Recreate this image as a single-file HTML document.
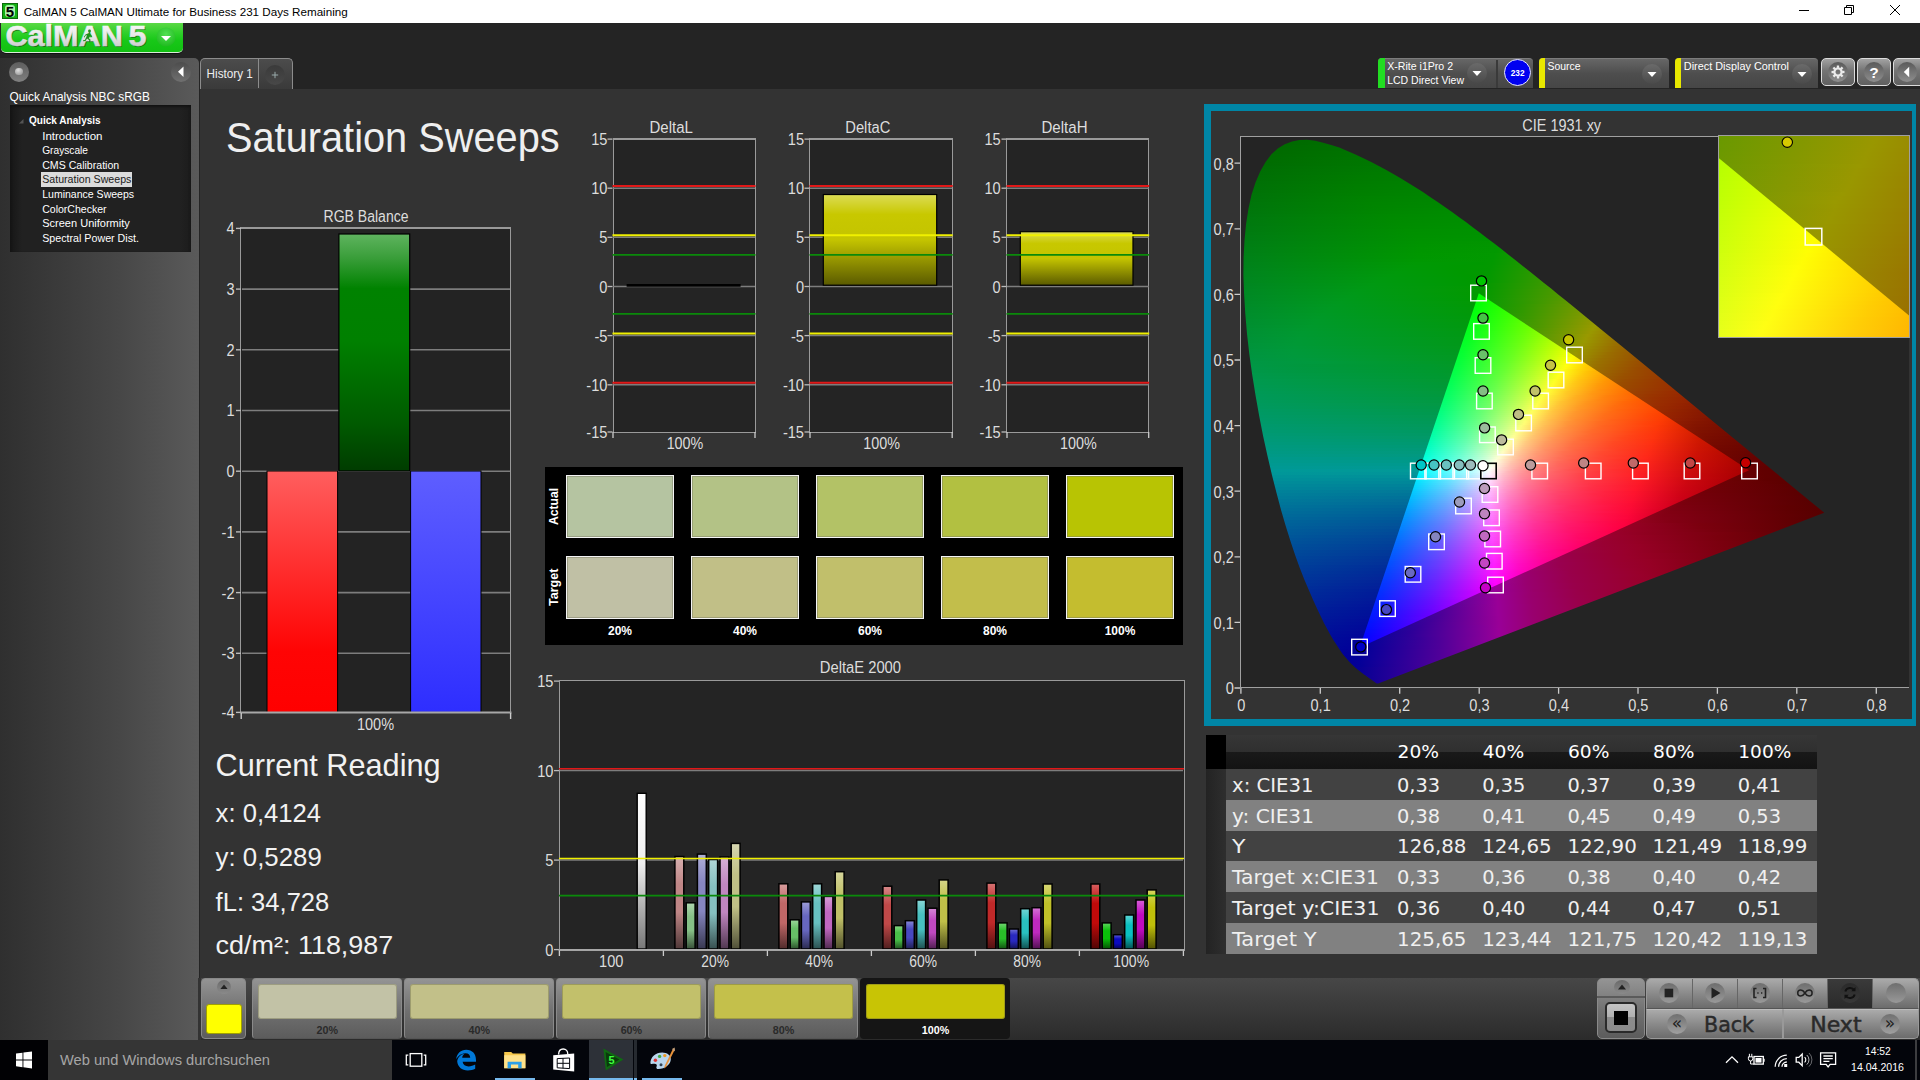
<!DOCTYPE html><html><head><meta charset="utf-8"><title>CalMAN 5</title><style>
html,body{margin:0;padding:0;background:#333;}
#r{position:relative;width:1920px;height:1080px;overflow:hidden;background:#333;font-family:"Liberation Sans",sans-serif;}
#r div,#r i,#r svg{position:absolute;display:block;box-sizing:border-box}
.cie{overflow:hidden;background:#242424}
.cl{left:0;top:0;width:100%;height:100%}
svg text{font-family:"Liberation Sans",sans-serif}
</style></head><body><div id="r"><div style="left:0px;top:0px;width:1920px;height:23px;background:#fff"></div><svg style="left:2px;top:3px" width="16" height="16" viewBox="0 0 16 16"><rect width="16" height="16" fill="#0b6b0b"/><rect x="1" y="1" width="14" height="14" fill="#12b012"/><rect x="3" y="2" width="10" height="12" rx="3" fill="#a8f0a8"/><text x="8" y="13.6" font-size="15" font-weight="bold" text-anchor="middle" fill="#000" font-family="Liberation Sans, sans-serif">5</text></svg><svg style="left:1780px;top:0" width="140" height="23" viewBox="1780 0 140 23" fill="none" stroke="#000" stroke-width="1"><path d="M1799 10.5h10"/><path d="M1844.5 7.5h7v7h-7z"/><path d="M1846.5 7.5v-2h7v7h-2"/><path d="M1890 5l10 10M1900 5l-10 10"/></svg><div style="left:0px;top:23px;width:1920px;height:1017px;background:#242424"></div><div style="left:200px;top:88.6px;width:1720px;height:889.4px;background:#333"></div><div style="left:1px;top:23px;width:182px;height:30px;background:linear-gradient(#5bd845 0%,#2fd02a 35%,#18c818 60%,#12c012 100%);border-radius:0 0 5px 5px;border-bottom:1px solid #d8ecd8;box-shadow:0 1px 0 #111"></div><svg style="left:0;top:23px" width="185" height="30" viewBox="0 23 185 30"><defs><linearGradient id="lg" x1="0" y1="0" x2="0" y2="1"><stop offset="0" stop-color="#fff"/><stop offset=".55" stop-color="#e6e6e6"/><stop offset="1" stop-color="#bdbdbd"/></linearGradient><radialGradient id="dd" cx=".5" cy=".35" r=".7"><stop offset="0" stop-color="#52e052"/><stop offset="1" stop-color="#1cb81c"/></radialGradient></defs><g font-family="Liberation Sans, sans-serif" font-weight="bold" font-size="29.800"><text x="6.500" y="46.900" fill="#145a14" opacity=".75" textLength="117.500" lengthAdjust="spacingAndGlyphs">CalMAN</text><text x="129.600" y="46.900" fill="#145a14" opacity=".75" textLength="18" lengthAdjust="spacingAndGlyphs">5</text><text x="5.400" y="46" fill="url(#lg)" stroke="url(#lg)" stroke-width=".5" textLength="117.500" lengthAdjust="spacingAndGlyphs">CalMAN</text><text x="128.600" y="46" fill="url(#lg)" stroke="url(#lg)" stroke-width=".5" textLength="18" lengthAdjust="spacingAndGlyphs">5</text></g><circle cx="166" cy="37" r="9.5" fill="url(#dd)"/><path d="M161 36h10l-5 5z" fill="#fff"/><g fill="#1f8f1f"><circle cx="89.5" cy="31" r="1.4"/><path d="M85.5 34.5l3-1.2 2.2 1.2 1.5 2-0.8.6-1.6-1.4-1 2.5 1.8 1.6-.6 2.6-1-.2.3-2-2.2-1.6-1.6 2.4-2.4.2v-1l1.8-.3 1.6-3.2.4-1.6-1.6.7-.6 1.6-.9-.3z"/></g></svg><div style="left:0px;top:58px;width:199px;height:982px;background:linear-gradient(90deg,#2f2f2f,#474747 60%,#5a5a5a);border-radius:0 5px 0 0"></div><div style="left:8.8px;top:61.8px;width:20px;height:20px;border-radius:50%;background:linear-gradient(#5e5e5e,#808080)"><div style="left:6.2px;top:5.8px;width:7.6px;height:7.6px;border-radius:50%;background:radial-gradient(circle at 40% 30%,#dedede,#8a8a8a)"></div></div><div style="left:171px;top:62px;width:20px;height:20px;border-radius:50%;background:linear-gradient(#4c4c4c,#707070)"></div><svg style="left:171px;top:61.5px" width="20" height="20"><path d="M12.5 4.5v10.5l-5.5-5.2z" fill="#fff"/></svg><div style="left:9.5px;top:105px;width:181.5px;height:147px;background:linear-gradient(90deg,#161616,#212121 12px,#212121 170px,#1c1c1c);box-shadow:inset 0 2px 3px #111"></div><svg style="left:18px;top:118px" width="8" height="8"><path d="M5.5 1v4.5h-4.5z" fill="#555"/></svg><div style="left:41px;top:172.3px;width:91px;height:14.6px;background:#dcdcdc"></div><div style="left:200px;top:58px;width:92.5px;height:31px;background:linear-gradient(#4c4c4c,#3a3a3a);border:1px solid #8c8c8c;border-bottom:none;border-radius:5px 5px 0 0"></div><div style="left:258px;top:59px;width:1px;height:29px;background:#8c8c8c"></div><div style="left:264.5px;top:65px;width:20px;height:20px;border-radius:50%;background:linear-gradient(#3a3a3a,#484848)"></div><svg style="left:264.5px;top:65px" width="20" height="20"><path d="M10 6.8v6.4M6.8 10h6.4" stroke="#9aa" stroke-width="1" fill="none"/></svg><div style="left:1378px;top:58px;width:155px;height:30px;background:linear-gradient(#666,#4e4e4e 50%,#464646);border-radius:4px 4px 0 0;border-top:1px solid #7c7c7c"></div><div style="left:1378px;top:58px;width:6.5px;height:30px;background:#22dd22;border-radius:4px 0 0 0"></div><div style="left:1496px;top:60px;width:1.5px;height:28px;background:#3a3a3a"></div><div style="left:1467.4px;top:63px;width:20px;height:20px;border-radius:50%;background:linear-gradient(#6a6a6a,#4a4a4a)"></div><svg style="left:1467.4px;top:63px" width="20" height="20"><path d="M5.5 8h9l-4.5 5z" fill="#fff"/></svg><div style="left:1504px;top:59px;width:27px;height:27px;border-radius:50%;background:#0000f0;border:1.5px solid #e8e8ff"></div><div style="left:1538.5px;top:58px;width:130.5px;height:30px;background:linear-gradient(#666,#4e4e4e 50%,#464646);border-radius:4px 4px 0 0;border-top:1px solid #7c7c7c"></div><div style="left:1538.5px;top:58px;width:6.5px;height:30px;background:#e8e800;border-radius:4px 0 0 0"></div><div style="left:1642px;top:64px;width:20px;height:20px;border-radius:50%;background:linear-gradient(#6a6a6a,#4a4a4a)"></div><svg style="left:1642px;top:64px" width="20" height="20"><path d="M5.5 8h9l-4.5 5z" fill="#fff"/></svg><div style="left:1674.6px;top:58px;width:143.5px;height:30px;background:linear-gradient(#666,#4e4e4e 50%,#464646);border-radius:4px 4px 0 0;border-top:1px solid #7c7c7c"></div><div style="left:1674.6px;top:58px;width:6.5px;height:30px;background:#e8e800;border-radius:4px 0 0 0"></div><div style="left:1792px;top:64px;width:20px;height:20px;border-radius:50%;background:linear-gradient(#6a6a6a,#4a4a4a)"></div><svg style="left:1792px;top:64px" width="20" height="20"><path d="M5.5 8h9l-4.5 5z" fill="#fff"/></svg><div style="left:1821px;top:58px;width:34px;height:28px;background:linear-gradient(#a2a2a2,#747474 45%,#606060);border-radius:5px;border:1px solid #dcdcdc"></div><div style="left:1828px;top:62px;width:20px;height:20px;border-radius:50%;background:linear-gradient(#5a5a5a,#8e8e8e)"></div><div style="left:1857px;top:58px;width:34px;height:28px;background:linear-gradient(#a2a2a2,#747474 45%,#606060);border-radius:5px;border:1px solid #dcdcdc"></div><div style="left:1864px;top:62px;width:20px;height:20px;border-radius:50%;background:linear-gradient(#5a5a5a,#8e8e8e)"></div><div style="left:1893px;top:58px;width:34px;height:28px;background:linear-gradient(#a2a2a2,#747474 45%,#606060);border-radius:5px;border:1px solid #dcdcdc"></div><div style="left:1896.8px;top:62px;width:20px;height:20px;border-radius:50%;background:linear-gradient(#5a5a5a,#8e8e8e)"></div><svg style="left:1821px;top:58px" width="99" height="29" viewBox="1821 58 99 29"><g transform="translate(1838 72)" fill="#ececec"><rect x="-1.2" y="-6.5" width="2.3" height="2.4" transform="rotate(0)"/><rect x="-1.2" y="-6.5" width="2.3" height="2.4" transform="rotate(45)"/><rect x="-1.2" y="-6.5" width="2.3" height="2.4" transform="rotate(90)"/><rect x="-1.2" y="-6.5" width="2.3" height="2.4" transform="rotate(135)"/><rect x="-1.2" y="-6.5" width="2.3" height="2.4" transform="rotate(180)"/><rect x="-1.2" y="-6.5" width="2.3" height="2.4" transform="rotate(225)"/><rect x="-1.2" y="-6.5" width="2.3" height="2.4" transform="rotate(270)"/><rect x="-1.2" y="-6.5" width="2.3" height="2.4" transform="rotate(315)"/><path d="M0-4.700a4.700 4.700 0 1 0 .01 0zM0-2.500a2.500 2.500 0 1 1-.01 0z" fill-rule="evenodd"/></g><text x="1874" y="77.600" font-size="15.500" font-weight="bold" text-anchor="middle" fill="#fff">?</text><path d="M1909.200 66.800v10.400l-5.400-5.200z" fill="#fff"/></svg><div style="left:240.4px;top:227.4px;width:271px;height:486px;background:#232323;border:1.6px solid #999;border-top-width:2px"></div><svg style="left:200px;top:200px" width="360" height="540" viewBox="200 200 360 540"><defs><linearGradient id="gg" x1="0" y1="0" x2="0" y2="1"><stop offset="0" stop-color="#5fb45f"/><stop offset=".1" stop-color="#3a9e3a"/><stop offset=".23" stop-color="#008200"/><stop offset=".45" stop-color="#008000"/><stop offset=".8" stop-color="#005a00"/><stop offset="1" stop-color="#003c00"/></linearGradient><linearGradient id="gr" x1="0" y1="0" x2="0" y2="1"><stop offset="0" stop-color="#ff5e5e"/><stop offset=".75" stop-color="#ff0404"/><stop offset="1" stop-color="#ff0000"/></linearGradient><linearGradient id="gb" x1="0" y1="0" x2="0" y2="1"><stop offset="0" stop-color="#5e5eff"/><stop offset="1" stop-color="#2e2eff"/></linearGradient></defs><path d="M236 712.4h5" stroke="#bbb" stroke-width="1.4"/><path d="M242 653.3H510" stroke="#7d7d7d" stroke-width="1.6"/><path d="M236 653.3h5" stroke="#bbb" stroke-width="1.4"/><path d="M242 592.6H510" stroke="#7d7d7d" stroke-width="1.6"/><path d="M236 592.6h5" stroke="#bbb" stroke-width="1.4"/><path d="M242 531.9H510" stroke="#7d7d7d" stroke-width="1.6"/><path d="M236 531.9h5" stroke="#bbb" stroke-width="1.4"/><path d="M242 471.2H510" stroke="#7d7d7d" stroke-width="1.6"/><path d="M236 471.2h5" stroke="#bbb" stroke-width="1.4"/><path d="M242 410.5H510" stroke="#7d7d7d" stroke-width="1.6"/><path d="M236 410.5h5" stroke="#bbb" stroke-width="1.4"/><path d="M242 349.8H510" stroke="#7d7d7d" stroke-width="1.6"/><path d="M236 349.8h5" stroke="#bbb" stroke-width="1.4"/><path d="M242 289.1H510" stroke="#7d7d7d" stroke-width="1.6"/><path d="M236 289.1h5" stroke="#bbb" stroke-width="1.4"/><path d="M236 228.4h5" stroke="#bbb" stroke-width="1.4"/><rect x="338.9" y="234" width="70.8" height="237" fill="url(#gg)" stroke="#000" stroke-width="1.2"/><rect x="267" y="471" width="70.6" height="241.4" fill="url(#gr)" stroke="#000" stroke-width="1"/><rect x="410.6" y="471" width="70.4" height="241.4" fill="url(#gb)" stroke="#000" stroke-width="1"/><path d="M240.5 712.5H511.5" stroke="#a8a8a8" stroke-width="2"/><path d="M241.2 713v6M510.6 713v6" stroke="#ccc" stroke-width="1.4"/></svg><div style="left:612.6px;top:137.6px;width:143.6px;height:295.4px;background:#242424;border:1.6px solid #9a9a9a;border-top-width:2px"></div><svg style="left:603.4px;top:130px" width="162" height="320" viewBox="603.4 130 162 320"><path d="M607.9 139.1h5" stroke="#bbb" stroke-width="1.3"/><path d="M613.4 188.2H755.4" stroke="#7d7d7d" stroke-width="1.5"/><path d="M607.9 188.2h5" stroke="#bbb" stroke-width="1.3"/><path d="M613.4 237.3H755.4" stroke="#7d7d7d" stroke-width="1.5"/><path d="M607.9 237.3h5" stroke="#bbb" stroke-width="1.3"/><path d="M613.4 286.5H755.4" stroke="#7d7d7d" stroke-width="1.5"/><path d="M607.9 286.5h5" stroke="#bbb" stroke-width="1.3"/><path d="M613.4 335.6H755.4" stroke="#7d7d7d" stroke-width="1.5"/><path d="M607.9 335.6h5" stroke="#bbb" stroke-width="1.3"/><path d="M613.4 384.8H755.4" stroke="#7d7d7d" stroke-width="1.5"/><path d="M607.9 384.8h5" stroke="#bbb" stroke-width="1.3"/><path d="M607.9 432.0h5" stroke="#bbb" stroke-width="1.3"/><path d="M627 285.4H741" stroke="#000" stroke-width="2.6"/><path d="M612.9 186.1H755.9" stroke="#e01818" stroke-width="2"/><path d="M612.9 235.2H755.9" stroke="#f0f000" stroke-width="2"/><path d="M612.9 254.9H755.9" stroke="#0a8a0a" stroke-width="1.6"/><path d="M612.9 313.9H755.9" stroke="#0a8a0a" stroke-width="1.6"/><path d="M612.9 333.5H755.9" stroke="#f0f000" stroke-width="2"/><path d="M612.9 382.7H755.9" stroke="#e01818" stroke-width="2"/><path d="M613.4 432v6M755.4 432v6" stroke="#ccc" stroke-width="1.3"/></svg><div style="left:809.2px;top:137.6px;width:143.8px;height:295.4px;background:#242424;border:1.6px solid #9a9a9a;border-top-width:2px"></div><svg style="left:800px;top:130px" width="162.2" height="320" viewBox="800 130 162.2 320"><path d="M804.5 139.1h5" stroke="#bbb" stroke-width="1.3"/><path d="M810 188.2H952.2" stroke="#7d7d7d" stroke-width="1.5"/><path d="M804.5 188.2h5" stroke="#bbb" stroke-width="1.3"/><path d="M810 237.3H952.2" stroke="#7d7d7d" stroke-width="1.5"/><path d="M804.5 237.3h5" stroke="#bbb" stroke-width="1.3"/><path d="M810 286.5H952.2" stroke="#7d7d7d" stroke-width="1.5"/><path d="M804.5 286.5h5" stroke="#bbb" stroke-width="1.3"/><path d="M810 335.6H952.2" stroke="#7d7d7d" stroke-width="1.5"/><path d="M804.5 335.6h5" stroke="#bbb" stroke-width="1.3"/><path d="M810 384.8H952.2" stroke="#7d7d7d" stroke-width="1.5"/><path d="M804.5 384.8h5" stroke="#bbb" stroke-width="1.3"/><path d="M804.5 432.0h5" stroke="#bbb" stroke-width="1.3"/><defs><linearGradient id="gy1" x1="0" y1="0" x2="0" y2="1"><stop offset="0" stop-color="#dcdc55"/><stop offset=".22" stop-color="#c8c800"/><stop offset=".5" stop-color="#c4c400"/><stop offset="1" stop-color="#5a5a00"/></linearGradient></defs><rect x="823.3" y="194.5" width="113.4" height="90.7" fill="url(#gy1)" stroke="#000" stroke-width="1.2"/><path d="M809.5 186.1H952.7" stroke="#e01818" stroke-width="2"/><path d="M809.5 235.2H952.7" stroke="#f0f000" stroke-width="2"/><path d="M809.5 254.9H952.7" stroke="#0a8a0a" stroke-width="1.6"/><path d="M809.5 313.9H952.7" stroke="#0a8a0a" stroke-width="1.6"/><path d="M809.5 333.5H952.7" stroke="#f0f000" stroke-width="2"/><path d="M809.5 382.7H952.7" stroke="#e01818" stroke-width="2"/><path d="M810 432v6M952.2 432v6" stroke="#ccc" stroke-width="1.3"/></svg><div style="left:1005.9px;top:137.6px;width:143.3px;height:295.4px;background:#242424;border:1.6px solid #9a9a9a;border-top-width:2px"></div><svg style="left:996.7px;top:130px" width="161.7" height="320" viewBox="996.7 130 161.7 320"><path d="M1001.2 139.1h5" stroke="#bbb" stroke-width="1.3"/><path d="M1006.7 188.2H1148.4" stroke="#7d7d7d" stroke-width="1.5"/><path d="M1001.2 188.2h5" stroke="#bbb" stroke-width="1.3"/><path d="M1006.7 237.3H1148.4" stroke="#7d7d7d" stroke-width="1.5"/><path d="M1001.2 237.3h5" stroke="#bbb" stroke-width="1.3"/><path d="M1006.7 286.5H1148.4" stroke="#7d7d7d" stroke-width="1.5"/><path d="M1001.2 286.5h5" stroke="#bbb" stroke-width="1.3"/><path d="M1006.7 335.6H1148.4" stroke="#7d7d7d" stroke-width="1.5"/><path d="M1001.2 335.6h5" stroke="#bbb" stroke-width="1.3"/><path d="M1006.7 384.8H1148.4" stroke="#7d7d7d" stroke-width="1.5"/><path d="M1001.2 384.8h5" stroke="#bbb" stroke-width="1.3"/><path d="M1001.2 432.0h5" stroke="#bbb" stroke-width="1.3"/><defs><linearGradient id="gy2" x1="0" y1="0" x2="0" y2="1"><stop offset="0" stop-color="#dcdc55"/><stop offset=".22" stop-color="#c8c800"/><stop offset=".5" stop-color="#c4c400"/><stop offset="1" stop-color="#5a5a00"/></linearGradient></defs><rect x="1020" y="231.7" width="112.7" height="53.5" fill="url(#gy2)" stroke="#000" stroke-width="1.2"/><path d="M1006.2 186.1H1148.9" stroke="#e01818" stroke-width="2"/><path d="M1006.2 235.2H1148.9" stroke="#f0f000" stroke-width="2"/><path d="M1006.2 254.9H1148.9" stroke="#0a8a0a" stroke-width="1.6"/><path d="M1006.2 313.9H1148.9" stroke="#0a8a0a" stroke-width="1.6"/><path d="M1006.2 333.5H1148.9" stroke="#f0f000" stroke-width="2"/><path d="M1006.2 382.7H1148.9" stroke="#e01818" stroke-width="2"/><path d="M1006.7 432v6M1148.4 432v6" stroke="#ccc" stroke-width="1.3"/></svg><div style="left:545px;top:467px;width:637.6px;height:177.5px;background:#000"></div><div style="left:566px;top:475px;width:107.6px;height:63px;background:#b5c4a1;border:1.2px solid #f4f4f4;box-shadow:inset 0 0 0 1px rgba(120,120,100,.45)"></div><div style="left:566px;top:556px;width:107.6px;height:63px;background:#c0c0a5;border:1.2px solid #f4f4f4;box-shadow:inset 0 0 0 1px rgba(120,120,100,.45)"></div><div style="left:691px;top:475px;width:107.6px;height:63px;background:#b3c286;border:1.2px solid #f4f4f4;box-shadow:inset 0 0 0 1px rgba(120,120,100,.45)"></div><div style="left:691px;top:556px;width:107.6px;height:63px;background:#c1bf87;border:1.2px solid #f4f4f4;box-shadow:inset 0 0 0 1px rgba(120,120,100,.45)"></div><div style="left:816px;top:475px;width:107.6px;height:63px;background:#b3c266;border:1.2px solid #f4f4f4;box-shadow:inset 0 0 0 1px rgba(120,120,100,.45)"></div><div style="left:816px;top:556px;width:107.6px;height:63px;background:#c1bf6b;border:1.2px solid #f4f4f4;box-shadow:inset 0 0 0 1px rgba(120,120,100,.45)"></div><div style="left:941px;top:475px;width:107.6px;height:63px;background:#b2c041;border:1.2px solid #f4f4f4;box-shadow:inset 0 0 0 1px rgba(120,120,100,.45)"></div><div style="left:941px;top:556px;width:107.6px;height:63px;background:#c2be4b;border:1.2px solid #f4f4f4;box-shadow:inset 0 0 0 1px rgba(120,120,100,.45)"></div><div style="left:1066px;top:475px;width:107.6px;height:63px;background:#b8c403;border:1.2px solid #f4f4f4;box-shadow:inset 0 0 0 1px rgba(120,120,100,.45)"></div><div style="left:1066px;top:556px;width:107.6px;height:63px;background:#c4bd2f;border:1.2px solid #f4f4f4;box-shadow:inset 0 0 0 1px rgba(120,120,100,.45)"></div><div style="left:558.5px;top:679.7px;width:626px;height:271px;background:#242424;border:1.8px solid #9a9a9a"></div><svg style="left:540px;top:675px" width="660" height="290" viewBox="540 675 660 290"><path d="M554 681.1h5" stroke="#bbb" stroke-width="1.3"/><path d="M560 770.6H1183" stroke="#7d7d7d" stroke-width="1.5"/><path d="M554 770.6h5" stroke="#bbb" stroke-width="1.3"/><path d="M560 860.1H1183" stroke="#7d7d7d" stroke-width="1.5"/><path d="M554 860.1h5" stroke="#bbb" stroke-width="1.3"/><path d="M554 949.6h5" stroke="#bbb" stroke-width="1.3"/><defs><linearGradient id="bw" x1="0" y1="0" x2="0" y2="1"><stop offset="0" stop-color="#fff"/><stop offset=".45" stop-color="#eee"/><stop offset="1" stop-color="#777"/></linearGradient><linearGradient id="b00" x1="0" y1="0" x2="0" y2="1"><stop offset="0" stop-color="rgb(214, 176, 176)"/><stop offset=".3" stop-color="rgb(192, 134, 134)"/><stop offset=".6" stop-color="rgb(192, 134, 134)"/><stop offset="1" stop-color="rgb(80, 56, 56)"/></linearGradient><linearGradient id="b01" x1="0" y1="0" x2="0" y2="1"><stop offset="0" stop-color="rgb(176, 214, 176)"/><stop offset=".3" stop-color="rgb(134, 192, 134)"/><stop offset=".6" stop-color="rgb(134, 192, 134)"/><stop offset="1" stop-color="rgb(56, 80, 56)"/></linearGradient><linearGradient id="b02" x1="0" y1="0" x2="0" y2="1"><stop offset="0" stop-color="rgb(176, 176, 214)"/><stop offset=".3" stop-color="rgb(134, 134, 192)"/><stop offset=".6" stop-color="rgb(134, 134, 192)"/><stop offset="1" stop-color="rgb(56, 56, 80)"/></linearGradient><linearGradient id="b03" x1="0" y1="0" x2="0" y2="1"><stop offset="0" stop-color="rgb(176, 214, 214)"/><stop offset=".3" stop-color="rgb(134, 192, 192)"/><stop offset=".6" stop-color="rgb(134, 192, 192)"/><stop offset="1" stop-color="rgb(56, 80, 80)"/></linearGradient><linearGradient id="b04" x1="0" y1="0" x2="0" y2="1"><stop offset="0" stop-color="rgb(214, 176, 214)"/><stop offset=".3" stop-color="rgb(192, 134, 192)"/><stop offset=".6" stop-color="rgb(192, 134, 192)"/><stop offset="1" stop-color="rgb(80, 56, 80)"/></linearGradient><linearGradient id="b05" x1="0" y1="0" x2="0" y2="1"><stop offset="0" stop-color="rgb(214, 214, 176)"/><stop offset=".3" stop-color="rgb(192, 192, 134)"/><stop offset=".6" stop-color="rgb(192, 192, 134)"/><stop offset="1" stop-color="rgb(80, 80, 56)"/></linearGradient><linearGradient id="b10" x1="0" y1="0" x2="0" y2="1"><stop offset="0" stop-color="rgb(214, 156, 156)"/><stop offset=".3" stop-color="rgb(192, 103, 103)"/><stop offset=".6" stop-color="rgb(192, 103, 103)"/><stop offset="1" stop-color="rgb(80, 43, 43)"/></linearGradient><linearGradient id="b11" x1="0" y1="0" x2="0" y2="1"><stop offset="0" stop-color="rgb(156, 214, 156)"/><stop offset=".3" stop-color="rgb(103, 192, 103)"/><stop offset=".6" stop-color="rgb(103, 192, 103)"/><stop offset="1" stop-color="rgb(43, 80, 43)"/></linearGradient><linearGradient id="b12" x1="0" y1="0" x2="0" y2="1"><stop offset="0" stop-color="rgb(156, 156, 214)"/><stop offset=".3" stop-color="rgb(103, 103, 192)"/><stop offset=".6" stop-color="rgb(103, 103, 192)"/><stop offset="1" stop-color="rgb(43, 43, 80)"/></linearGradient><linearGradient id="b13" x1="0" y1="0" x2="0" y2="1"><stop offset="0" stop-color="rgb(156, 214, 214)"/><stop offset=".3" stop-color="rgb(103, 192, 192)"/><stop offset=".6" stop-color="rgb(103, 192, 192)"/><stop offset="1" stop-color="rgb(43, 80, 80)"/></linearGradient><linearGradient id="b14" x1="0" y1="0" x2="0" y2="1"><stop offset="0" stop-color="rgb(214, 156, 214)"/><stop offset=".3" stop-color="rgb(192, 103, 192)"/><stop offset=".6" stop-color="rgb(192, 103, 192)"/><stop offset="1" stop-color="rgb(80, 43, 80)"/></linearGradient><linearGradient id="b15" x1="0" y1="0" x2="0" y2="1"><stop offset="0" stop-color="rgb(214, 214, 156)"/><stop offset=".3" stop-color="rgb(192, 192, 103)"/><stop offset=".6" stop-color="rgb(192, 192, 103)"/><stop offset="1" stop-color="rgb(80, 80, 43)"/></linearGradient><linearGradient id="b20" x1="0" y1="0" x2="0" y2="1"><stop offset="0" stop-color="rgb(214, 136, 136)"/><stop offset=".3" stop-color="rgb(192, 72, 72)"/><stop offset=".6" stop-color="rgb(192, 72, 72)"/><stop offset="1" stop-color="rgb(80, 30, 30)"/></linearGradient><linearGradient id="b21" x1="0" y1="0" x2="0" y2="1"><stop offset="0" stop-color="rgb(136, 214, 136)"/><stop offset=".3" stop-color="rgb(72, 192, 72)"/><stop offset=".6" stop-color="rgb(72, 192, 72)"/><stop offset="1" stop-color="rgb(30, 80, 30)"/></linearGradient><linearGradient id="b22" x1="0" y1="0" x2="0" y2="1"><stop offset="0" stop-color="rgb(136, 136, 214)"/><stop offset=".3" stop-color="rgb(72, 72, 192)"/><stop offset=".6" stop-color="rgb(72, 72, 192)"/><stop offset="1" stop-color="rgb(30, 30, 80)"/></linearGradient><linearGradient id="b23" x1="0" y1="0" x2="0" y2="1"><stop offset="0" stop-color="rgb(136, 214, 214)"/><stop offset=".3" stop-color="rgb(72, 192, 192)"/><stop offset=".6" stop-color="rgb(72, 192, 192)"/><stop offset="1" stop-color="rgb(30, 80, 80)"/></linearGradient><linearGradient id="b24" x1="0" y1="0" x2="0" y2="1"><stop offset="0" stop-color="rgb(214, 136, 214)"/><stop offset=".3" stop-color="rgb(192, 72, 192)"/><stop offset=".6" stop-color="rgb(192, 72, 192)"/><stop offset="1" stop-color="rgb(80, 30, 80)"/></linearGradient><linearGradient id="b25" x1="0" y1="0" x2="0" y2="1"><stop offset="0" stop-color="rgb(214, 214, 136)"/><stop offset=".3" stop-color="rgb(192, 192, 72)"/><stop offset=".6" stop-color="rgb(192, 192, 72)"/><stop offset="1" stop-color="rgb(80, 80, 30)"/></linearGradient><linearGradient id="b30" x1="0" y1="0" x2="0" y2="1"><stop offset="0" stop-color="rgb(214, 115, 115)"/><stop offset=".3" stop-color="rgb(192, 41, 41)"/><stop offset=".6" stop-color="rgb(192, 41, 41)"/><stop offset="1" stop-color="rgb(80, 17, 17)"/></linearGradient><linearGradient id="b31" x1="0" y1="0" x2="0" y2="1"><stop offset="0" stop-color="rgb(115, 214, 115)"/><stop offset=".3" stop-color="rgb(41, 192, 41)"/><stop offset=".6" stop-color="rgb(41, 192, 41)"/><stop offset="1" stop-color="rgb(17, 80, 17)"/></linearGradient><linearGradient id="b32" x1="0" y1="0" x2="0" y2="1"><stop offset="0" stop-color="rgb(115, 115, 214)"/><stop offset=".3" stop-color="rgb(41, 41, 192)"/><stop offset=".6" stop-color="rgb(41, 41, 192)"/><stop offset="1" stop-color="rgb(17, 17, 80)"/></linearGradient><linearGradient id="b33" x1="0" y1="0" x2="0" y2="1"><stop offset="0" stop-color="rgb(115, 214, 214)"/><stop offset=".3" stop-color="rgb(41, 192, 192)"/><stop offset=".6" stop-color="rgb(41, 192, 192)"/><stop offset="1" stop-color="rgb(17, 80, 80)"/></linearGradient><linearGradient id="b34" x1="0" y1="0" x2="0" y2="1"><stop offset="0" stop-color="rgb(214, 115, 214)"/><stop offset=".3" stop-color="rgb(192, 41, 192)"/><stop offset=".6" stop-color="rgb(192, 41, 192)"/><stop offset="1" stop-color="rgb(80, 17, 80)"/></linearGradient><linearGradient id="b35" x1="0" y1="0" x2="0" y2="1"><stop offset="0" stop-color="rgb(214, 214, 115)"/><stop offset=".3" stop-color="rgb(192, 192, 41)"/><stop offset=".6" stop-color="rgb(192, 192, 41)"/><stop offset="1" stop-color="rgb(80, 80, 17)"/></linearGradient><linearGradient id="b40" x1="0" y1="0" x2="0" y2="1"><stop offset="0" stop-color="rgb(214, 95, 95)"/><stop offset=".3" stop-color="rgb(192, 10, 10)"/><stop offset=".6" stop-color="rgb(192, 10, 10)"/><stop offset="1" stop-color="rgb(80, 4, 4)"/></linearGradient><linearGradient id="b41" x1="0" y1="0" x2="0" y2="1"><stop offset="0" stop-color="rgb(95, 214, 95)"/><stop offset=".3" stop-color="rgb(10, 192, 10)"/><stop offset=".6" stop-color="rgb(10, 192, 10)"/><stop offset="1" stop-color="rgb(4, 80, 4)"/></linearGradient><linearGradient id="b42" x1="0" y1="0" x2="0" y2="1"><stop offset="0" stop-color="rgb(95, 95, 214)"/><stop offset=".3" stop-color="rgb(10, 10, 192)"/><stop offset=".6" stop-color="rgb(10, 10, 192)"/><stop offset="1" stop-color="rgb(4, 4, 80)"/></linearGradient><linearGradient id="b43" x1="0" y1="0" x2="0" y2="1"><stop offset="0" stop-color="rgb(95, 214, 214)"/><stop offset=".3" stop-color="rgb(10, 192, 192)"/><stop offset=".6" stop-color="rgb(10, 192, 192)"/><stop offset="1" stop-color="rgb(4, 80, 80)"/></linearGradient><linearGradient id="b44" x1="0" y1="0" x2="0" y2="1"><stop offset="0" stop-color="rgb(214, 95, 214)"/><stop offset=".3" stop-color="rgb(192, 10, 192)"/><stop offset=".6" stop-color="rgb(192, 10, 192)"/><stop offset="1" stop-color="rgb(80, 4, 80)"/></linearGradient><linearGradient id="b45" x1="0" y1="0" x2="0" y2="1"><stop offset="0" stop-color="rgb(214, 214, 95)"/><stop offset=".3" stop-color="rgb(192, 192, 10)"/><stop offset=".6" stop-color="rgb(192, 192, 10)"/><stop offset="1" stop-color="rgb(80, 80, 4)"/></linearGradient></defs><rect x="637.2" y="793.3" width="9" height="155.7" fill="url(#bw)" stroke="#000" stroke-width="1.4"/><rect x="674.9" y="856.5" width="8.9" height="92.5" fill="url(#b00)" stroke="#000" stroke-width="1.5"/><rect x="686.2" y="902.8" width="8.9" height="46.2" fill="url(#b01)" stroke="#000" stroke-width="1.5"/><rect x="697.4" y="854.1" width="8.9" height="94.9" fill="url(#b02)" stroke="#000" stroke-width="1.5"/><rect x="708.7" y="859.5" width="8.9" height="89.5" fill="url(#b03)" stroke="#000" stroke-width="1.5"/><rect x="720.0" y="857.0" width="8.9" height="92.0" fill="url(#b04)" stroke="#000" stroke-width="1.5"/><rect x="731.2" y="843.4" width="8.9" height="105.6" fill="url(#b05)" stroke="#000" stroke-width="1.5"/><rect x="778.9" y="883.8" width="8.9" height="65.2" fill="url(#b10)" stroke="#000" stroke-width="1.5"/><rect x="790.2" y="919.8" width="8.9" height="29.2" fill="url(#b11)" stroke="#000" stroke-width="1.5"/><rect x="801.4" y="901.9" width="8.9" height="47.1" fill="url(#b12)" stroke="#000" stroke-width="1.5"/><rect x="812.7" y="883.8" width="8.9" height="65.2" fill="url(#b13)" stroke="#000" stroke-width="1.5"/><rect x="824.0" y="896.4" width="8.9" height="52.6" fill="url(#b14)" stroke="#000" stroke-width="1.5"/><rect x="835.2" y="871.7" width="8.9" height="77.3" fill="url(#b15)" stroke="#000" stroke-width="1.5"/><rect x="882.9" y="886.2" width="8.9" height="62.8" fill="url(#b20)" stroke="#000" stroke-width="1.5"/><rect x="894.2" y="925.6" width="8.9" height="23.4" fill="url(#b21)" stroke="#000" stroke-width="1.5"/><rect x="905.4" y="920.7" width="8.9" height="28.3" fill="url(#b22)" stroke="#000" stroke-width="1.5"/><rect x="916.7" y="900.0" width="8.9" height="49.0" fill="url(#b23)" stroke="#000" stroke-width="1.5"/><rect x="928.0" y="908.2" width="8.9" height="40.8" fill="url(#b24)" stroke="#000" stroke-width="1.5"/><rect x="939.2" y="879.9" width="8.9" height="69.1" fill="url(#b25)" stroke="#000" stroke-width="1.5"/><rect x="986.9" y="883.1" width="8.9" height="65.9" fill="url(#b30)" stroke="#000" stroke-width="1.5"/><rect x="998.2" y="922.9" width="8.9" height="26.1" fill="url(#b31)" stroke="#000" stroke-width="1.5"/><rect x="1009.4" y="929.0" width="8.9" height="20.0" fill="url(#b32)" stroke="#000" stroke-width="1.5"/><rect x="1020.7" y="908.7" width="8.9" height="40.3" fill="url(#b33)" stroke="#000" stroke-width="1.5"/><rect x="1032.0" y="907.7" width="8.9" height="41.3" fill="url(#b34)" stroke="#000" stroke-width="1.5"/><rect x="1043.2" y="884.0" width="8.9" height="65.0" fill="url(#b35)" stroke="#000" stroke-width="1.5"/><rect x="1090.9" y="884.0" width="8.9" height="65.0" fill="url(#b40)" stroke="#000" stroke-width="1.5"/><rect x="1102.2" y="922.9" width="8.9" height="26.1" fill="url(#b41)" stroke="#000" stroke-width="1.5"/><rect x="1113.4" y="934.7" width="8.9" height="14.3" fill="url(#b42)" stroke="#000" stroke-width="1.5"/><rect x="1124.7" y="915.0" width="8.9" height="34.0" fill="url(#b43)" stroke="#000" stroke-width="1.5"/><rect x="1136.0" y="900.0" width="8.9" height="49.0" fill="url(#b44)" stroke="#000" stroke-width="1.5"/><rect x="1147.2" y="889.9" width="8.9" height="59.1" fill="url(#b45)" stroke="#000" stroke-width="1.5"/><path d="M559 858.5H1184" stroke="#f0f000" stroke-width="1.5"/><path d="M559 768.8H1184" stroke="#e01818" stroke-width="1.6"/><path d="M559 895.6H1184" stroke="#0a8a0a" stroke-width="1.6"/><path d="M558.5 949.8H1184.5" stroke="#a8a8a8" stroke-width="1.8"/><path d="M559.4 950.5v5.5M663.4 950.5v5.5M767.4 950.5v5.5M871.4 950.5v5.5M975.4 950.5v5.5M1079.4 950.5v5.5M1183.4 950.5v5.5" stroke="#ccc" stroke-width="1.3"/></svg><div style="left:1204px;top:104px;width:712.3px;height:622.3px;border:7px solid #0086a6;border-right-width:4.2px;border-bottom-width:7.5px;background:#333"></div><div style="left:1240px;top:135.5px;width:669.2px;height:552.4px;background:#242424;border:1.6px solid #a0a0a0"></div><div class="cie" style="left:1241px;top:137px;width:668px;height:550px"><div class="cl" style="clip-path:polygon(137.2px 546.6px,135.7px 546.4px,130.1px 542.6px,130.1px 542.6px,129.7px 542.2px,129.0px 541.8px,128.3px 541.2px,127.5px 540.7px,126.7px 540.1px,125.8px 539.5px,124.9px 538.8px,123.9px 538.1px,122.9px 537.4px,121.8px 536.6px,120.7px 535.7px,119.5px 534.8px,118.2px 533.8px,116.8px 532.7px,115.4px 531.6px,113.9px 530.2px,112.4px 528.8px,110.7px 527.3px,109.0px 525.6px,107.2px 523.5px,105.1px 521.1px,102.9px 518.4px,100.6px 515.4px,98.1px 511.8px,95.5px 507.8px,92.7px 503.4px,89.7px 498.5px,86.6px 492.8px,83.2px 486.4px,79.7px 479.3px,76.0px 471.5px,72.0px 462.7px,67.8px 453.0px,63.3px 442.4px,58.7px 430.8px,54.1px 418.1px,49.5px 404.2px,44.8px 389.2px,40.1px 373.2px,35.6px 356.3px,31.0px 338.2px,26.5px 319.0px,22.1px 299.1px,18.2px 279.1px,14.6px 258.7px,11.2px 237.8px,8.3px 217.0px,6.0px 196.7px,4.3px 176.8px,3.1px 157.3px,2.4px 138.3px,2.6px 120.3px,3.5px 103.2px,5.1px 86.8px,7.5px 71.6px,10.5px 57.8px,14.5px 45.5px,19.2px 34.5px,24.6px 25.0px,30.4px 17.3px,36.8px 11.4px,43.7px 7.3px,51.1px 4.6px,58.5px 3.0px,66.2px 2.7px,74.1px 3.7px,82.2px 5.7px,90.2px 8.0px,98.3px 10.6px,106.4px 13.9px,114.5px 17.6px,122.4px 21.3px,130.2px 25.0px,137.8px 29.0px,145.3px 33.0px,152.8px 37.2px,160.1px 41.5px,167.4px 45.9px,174.7px 50.5px,181.9px 55.1px,189.1px 59.9px,196.3px 64.7px,203.5px 69.7px,210.7px 74.8px,217.8px 79.9px,224.9px 85.1px,232.0px 90.4px,239.1px 95.8px,246.2px 101.2px,253.3px 106.6px,260.4px 112.1px,267.5px 117.7px,274.6px 123.2px,281.7px 128.9px,288.8px 134.5px,295.9px 140.2px,303.0px 145.9px,310.1px 151.6px,317.2px 157.4px,324.2px 163.1px,331.3px 168.8px,338.3px 174.6px,345.3px 180.3px,352.3px 186.0px,359.9px 192.2px,367.9px 198.7px,375.0px 204.5px,379.9px 208.6px,406.7px 230.6px,478.5px 289.7px,528.5px 330.7px,556.1px 353.4px,570.7px 365.5px,578.1px 371.5px,581.1px 374.0px,582.7px 375.3px,583.2px 375.7px,583.2px 375.7px)"><i style="left:44px;top:2px;width:43px;height:3px;background:linear-gradient(90deg,#006900 0%,#006e00 100%)"></i><i style="left:38px;top:5px;width:59px;height:3px;background:linear-gradient(90deg,#006900 0%,#006f00 100%)"></i><i style="left:34px;top:8px;width:71px;height:3px;background:linear-gradient(90deg,#006a00 0%,#007100 100%)"></i><i style="left:30px;top:11px;width:82px;height:3px;background:linear-gradient(90deg,#006a00 0%,#007200 100%)"></i><i style="left:27px;top:14px;width:91px;height:3px;background:linear-gradient(90deg,#006a00 0%,#007400 100%)"></i><i style="left:25px;top:17px;width:100px;height:3px;background:linear-gradient(90deg,#006b00 0%,#007500 100%)"></i><i style="left:23px;top:20px;width:108px;height:3px;background:linear-gradient(90deg,#006b01 0%,#070 100%)"></i><i style="left:21px;top:23px;width:116px;height:3px;background:linear-gradient(90deg,#006c01 0%,#007800 100%)"></i><i style="left:19px;top:26px;width:124px;height:3px;background:linear-gradient(90deg,#006c02 0%,#007900 100%)"></i><i style="left:18px;top:29px;width:130px;height:3px;background:linear-gradient(90deg,#006d03 0%,#007b00 100%)"></i><i style="left:16px;top:32px;width:138px;height:3px;background:linear-gradient(90deg,#006e03 0%,#007c00 100%)"></i><i style="left:15px;top:35px;width:144px;height:3px;background:linear-gradient(90deg,#006e04 0%,#007b00 80.6%,#007d00 100%)"></i><i style="left:14px;top:38px;width:150px;height:3px;background:linear-gradient(90deg,#006f04 0%,#007b00 70.7%,#007e00 100%)"></i><i style="left:12px;top:41px;width:157px;height:3px;background:linear-gradient(90deg,#006f05 0%,#007b00 65.4%,#007f00 100%)"></i><i style="left:12px;top:44px;width:162px;height:3px;background:linear-gradient(90deg,#007006 0%,#007c00 64.2%,#008100 100%)"></i><i style="left:11px;top:47px;width:167px;height:3px;background:linear-gradient(90deg,#007106 0%,#007d00 61.4%,#008200 100%)"></i><i style="left:10px;top:50px;width:173px;height:3px;background:linear-gradient(90deg,#007107 0%,#007e00 61.6%,#008300 100%)"></i><i style="left:9px;top:53px;width:179px;height:3px;background:linear-gradient(90deg,#007207 0%,#007f00 61.8%,#008400 100%)"></i><i style="left:8px;top:56px;width:184px;height:3px;background:linear-gradient(90deg,#007308 0%,#008000 62%,#008500 100%)"></i><i style="left:7px;top:59px;width:190px;height:3px;background:linear-gradient(90deg,#007309 0%,#008200 62.1%,#008600 100%)"></i><i style="left:7px;top:62px;width:194px;height:3px;background:linear-gradient(90deg,#007409 0%,#008300 62.9%,#008700 100%)"></i><i style="left:6px;top:65px;width:199px;height:3px;background:linear-gradient(90deg,#00750a 0%,#008400 62.6%,#080 100%)"></i><i style="left:5px;top:68px;width:204px;height:3px;background:linear-gradient(90deg,#00750b 0%,#008500 63.7%,#008900 100%)"></i><i style="left:5px;top:71px;width:209px;height:3px;background:linear-gradient(90deg,#00760b 0%,#008600 64.4%,#008b00 100%)"></i><i style="left:4px;top:74px;width:214px;height:3px;background:linear-gradient(90deg,#00760c 0%,#008700 64.5%,#008c00 100%)"></i><i style="left:4px;top:77px;width:218px;height:3px;background:linear-gradient(90deg,#00770d 0%,#008900 66.1%,#008d00 100%)"></i><i style="left:3px;top:80px;width:223px;height:3px;background:linear-gradient(90deg,#00780e 0%,#008a00 65.8%,#008e00 100%)"></i><i style="left:3px;top:83px;width:227px;height:3px;background:linear-gradient(90deg,#00790e 0%,#008b00 66.4%,#008f00 100%)"></i><i style="left:3px;top:86px;width:231px;height:3px;background:linear-gradient(90deg,#00790f 0%,#008c00 67.8%,#009000 100%)"></i><i style="left:2px;top:89px;width:236px;height:3px;background:linear-gradient(90deg,#007a10 0%,#008d00 67.8%,#009100 100%)"></i><i style="left:2px;top:92px;width:240px;height:3px;background:linear-gradient(90deg,#007a10 0%,#008f00 68.3%,#009200 100%)"></i><i style="left:2px;top:95px;width:244px;height:3px;background:linear-gradient(90deg,#007b11 0%,#009000 68.9%,#009200 100%)"></i><i style="left:2px;top:98px;width:248px;height:3px;background:linear-gradient(90deg,#007c12 0%,#009100 70.2%,#009300 100%)"></i><i style="left:1px;top:101px;width:253px;height:3px;background:linear-gradient(90deg,#007c13 0%,#009200 69.8%,#009400 100%)"></i><i style="left:1px;top:104px;width:257px;height:3px;background:linear-gradient(90deg,#007d14 0%,#009300 69.5%,#029500 100%)"></i><i style="left:1px;top:107px;width:261px;height:3px;background:linear-gradient(90deg,#007e14 0%,#009400 68.5%,#029600 97.7%,#069600 100%)"></i><i style="left:1px;top:110px;width:264px;height:3px;background:linear-gradient(90deg,#007f15 0%,#009500 67.4%,#029700 96.2%,#099700 100%)"></i><i style="left:1px;top:113px;width:268px;height:3px;background:linear-gradient(90deg,#007f16 0%,#009600 66.4%,#029800 94.8%,#0d9800 100%)"></i><i style="left:1px;top:116px;width:272px;height:3px;background:linear-gradient(90deg,#008017 0%,#009700 65.4%,#029900 92.6%,#129900 100%)"></i><i style="left:1px;top:119px;width:276px;height:3px;background:linear-gradient(90deg,#008118 0%,#009701 63.8%,#029900 91.3%,#169900 100%)"></i><i style="left:1px;top:122px;width:280px;height:3px;background:linear-gradient(90deg,#008119 0%,#009802 62.1%,#029900 89.3%,#1a9900 100%)"></i><i style="left:1px;top:125px;width:283px;height:3px;background:linear-gradient(90deg,#00821a 0%,#009904 61%,#090 83.7%,#039900 88.7%,#1e9900 100%)"></i><i style="left:0px;top:128px;width:288px;height:3px;background:linear-gradient(90deg,#00821b 0%,#009906 58.3%,#090 77.1%,#039900 86.8%,#239900 100%)"></i><i style="left:0px;top:131px;width:292px;height:3px;background:linear-gradient(90deg,#00831c 0%,#009908 55.5%,#090 75.3%,#029900 84.9%,#289900 100%)"></i><i style="left:0px;top:134px;width:296px;height:3px;background:linear-gradient(90deg,#00841d 0%,#00990a 52.7%,#090 75%,#039900 83.8%,#2d9900 100%)"></i><i style="left:0px;top:137px;width:300px;height:3px;background:linear-gradient(90deg,#00841e 0%,#00990c 49.3%,#090 75.3%,#029900 82%,#329900 100%)"></i><i style="left:0px;top:140px;width:303px;height:3px;background:linear-gradient(90deg,#00851f 0%,#00990e 47%,#090 76.2%,#039900 81.5%,#369900 100%)"></i><i style="left:1px;top:143px;width:306px;height:3px;background:linear-gradient(90deg,#00861f 0%,#009910 44.4%,#090 76.5%,#049900 80.4%,#3c9900 100%)"></i><i style="left:1px;top:146px;width:310px;height:3px;background:linear-gradient(90deg,#008621 0%,#009912 41.9%,#090 76.8%,#3d9900 98.7%,#429900 100%)"></i><i style="left:1px;top:149px;width:313px;height:3px;background:linear-gradient(90deg,#008722 0%,#009914 39.7%,#029900 76.9%,#469900 100%)"></i><i style="left:1px;top:152px;width:317px;height:3px;background:linear-gradient(90deg,#008823 0%,#009916 37.3%,#039900 75.9%,#4d9900 100%)"></i><i style="left:1px;top:155px;width:321px;height:3px;background:linear-gradient(90deg,#008824 0%,#009918 35%,#029900 74.4%,#4e9900 98.7%,#539900 100%)"></i><i style="left:1px;top:158px;width:324px;height:3px;background:linear-gradient(90deg,#008925 0%,#00991a 33.3%,#029901 73.5%,#4f9900 97.5%,#589900 100%)"></i><i style="left:1px;top:161px;width:328px;height:3px;background:linear-gradient(90deg,#008926 0%,#00991c 31.1%,#019902 72%,#4f9900 95.7%,#5f9900 100%)"></i><i style="left:1px;top:164px;width:332px;height:3px;background:linear-gradient(90deg,#008a27 0%,#00991e 29.5%,#029904 71.1%,#369900 87.3%,#690 100%)"></i><i style="left:2px;top:167px;width:335px;height:3px;background:linear-gradient(90deg,#008b28 0%,#009920 27.5%,#019905 69.5%,#299900 82%,#6e9900 100%)"></i><i style="left:2px;top:170px;width:338px;height:3px;background:linear-gradient(90deg,#008b2a 0%,#092 26%,#019907 68.6%,#2c9900 81.7%,#749900 100%)"></i><i style="left:2px;top:173px;width:342px;height:3px;background:linear-gradient(90deg,#008c2b 0%,#009923 24.6%,#029908 67.8%,#2f9900 81.3%,#7c9900 100%)"></i><i style="left:2px;top:176px;width:346px;height:3px;background:linear-gradient(90deg,#008d2c 0%,#009925 23.1%,#019909 66.5%,#359900 81.5%,#849900 100%)"></i><i style="left:2px;top:179px;width:349px;height:3px;background:linear-gradient(90deg,#008d2d 0%,#009927 21.8%,#01990b 65.5%,#3a9900 81.6%,#8b9900 100%)"></i><i style="left:3px;top:182px;width:352px;height:3px;background:linear-gradient(90deg,#008e2f 0%,#009929 20.5%,#02990c 64.8%,#419900 81.8%,#919900 99.4%,#949900 100%)"></i><i style="left:3px;top:185px;width:356px;height:3px;background:linear-gradient(90deg,#008e30 0%,#00992a 19.7%,#01990e 63.5%,#479900 82%,#999800 99.4%,#999500 100%)"></i><i style="left:3px;top:188px;width:359px;height:3px;background:linear-gradient(90deg,#008f31 0%,#00992c 18.4%,#01990f 62.6%,#4c9900 82.1%,#990 97.8%,#998d00 100%)"></i><i style="left:3px;top:191px;width:363px;height:3px;background:linear-gradient(90deg,#009033 0%,#00992e 17.1%,#029911 61.9%,#4f9900 81.2%,#990 96.1%,#998500 100%)"></i><i style="left:4px;top:194px;width:366px;height:3px;background:linear-gradient(90deg,#009034 0%,#009930 15.8%,#019913 60.7%,#4e9901 79.8%,#999800 94.5%,#997e00 100%)"></i><i style="left:4px;top:197px;width:369px;height:3px;background:linear-gradient(90deg,#009135 0%,#009931 15.2%,#019914 59.8%,#4c9903 78.3%,#990 92.9%,#970 100%)"></i><i style="left:4px;top:200px;width:373px;height:3px;background:linear-gradient(90deg,#009137 0%,#093 14.5%,#029916 59.1%,#4f9904 77.4%,#7d9900 86.6%,#990 91.4%,#997100 100%)"></i><i style="left:5px;top:203px;width:376px;height:3px;background:linear-gradient(90deg,#009238 0%,#009935 13.8%,#019918 58%,#4e9906 76.1%,#7d9900 85.1%,#990 89.9%,#997000 98.4%,#996a00 100%)"></i><i style="left:5px;top:206px;width:379px;height:3px;background:linear-gradient(90deg,#00933a 0%,#009936 12.7%,#019919 57.1%,#4c9909 74.6%,#829900 84.7%,#999700 88.9%,#996f00 97.4%,#996500 100%)"></i><i style="left:5px;top:209px;width:383px;height:3px;background:linear-gradient(90deg,#00933b 0%,#009938 12.6%,#02991b 56.5%,#4f990a 73.8%,#8b9900 84.8%,#999700 87.4%,#996e00 95.8%,#996000 100%)"></i><i style="left:6px;top:212px;width:386px;height:3px;background:linear-gradient(90deg,#00943d 0%,#00993a 11.9%,#01991d 55.4%,#4f990c 72.5%,#959900 85%,#999000 87%,#996800 95.9%,#995b00 100%)"></i><i style="left:6px;top:215px;width:389px;height:3px;background:linear-gradient(90deg,#00943f 0%,#00993b 11.9%,#01991f 54.6%,#4c990f 71.1%,#999800 84.5%,#996e00 92.8%,#995600 100%)"></i><i style="left:6px;top:218px;width:393px;height:3px;background:linear-gradient(90deg,#009540 0%,#00993c 12.2%,#029921 54.1%,#4f9910 70.4%,#999701 83.2%,#997000 90.8%,#995100 100%)"></i><i style="left:7px;top:221px;width:395px;height:3px;background:linear-gradient(90deg,#009542 0%,#00993d 13.7%,#029922 53.3%,#509912 69.5%,#999903 81.7%,#997000 89.3%,#994e00 100%)"></i><i style="left:7px;top:224px;width:399px;height:3px;background:linear-gradient(90deg,#009644 0%,#00993d 17.1%,#019925 52.3%,#4c9915 67.8%,#999806 80.4%,#997200 87.4%,#994e00 98%,#994900 100%)"></i><i style="left:8px;top:227px;width:402px;height:3px;background:linear-gradient(90deg,#009745 0%,#00992c 45.3%,#039926 51.7%,#4f9917 67.2%,#999808 79.1%,#996f00 86.6%,#994b00 97.5%,#994500 100%)"></i><i style="left:8px;top:230px;width:405px;height:3px;background:linear-gradient(90deg,#009747 0%,#00992d 45.5%,#029928 51%,#509919 66.3%,#99990b 77.7%,#997000 85.1%,#994b00 96%,#994200 100%)"></i><i style="left:8px;top:233px;width:409px;height:3px;background:linear-gradient(90deg,#009749 0%,#00992e 46.1%,#01992b 50%,#4c991c 64.7%,#99990e 76.5%,#996f02 83.8%,#994c00 94.1%,#993e00 100%)"></i><i style="left:9px;top:236px;width:412px;height:3px;background:linear-gradient(90deg,#00984b 0%,#00992f 46.6%,#03992d 49.5%,#4f991e 64.1%,#999810 75.2%,#997104 82%,#995100 90.8%,#993b00 100%)"></i><i style="left:9px;top:239px;width:415px;height:3px;background:linear-gradient(90deg,#00984d 0%,#009930 47.3%,#05992e 49.3%,#509921 63.3%,#999712 74.4%,#996f06 81.2%,#995100 89.4%,#993800 100%)"></i><i style="left:10px;top:242px;width:418px;height:3px;background:linear-gradient(90deg,#00994f 0%,#029931 47.8%,#4d9924 61.7%,#999916 72.7%,#996e08 79.9%,#994d00 89%,#993400 100%)"></i><i style="left:10px;top:245px;width:422px;height:3px;background:linear-gradient(90deg,#009950 0%,#019934 46.9%,#4d9926 60.7%,#999919 71.6%,#99700b 78.2%,#994c00 87.7%,#993100 100%)"></i><i style="left:11px;top:248px;width:424px;height:3px;background:linear-gradient(90deg,#009952 0%,#019936 46.2%,#4e9929 59.9%,#99971b 70.8%,#996e0d 77.4%,#994b00 86.8%,#992f00 100%)"></i><i style="left:11px;top:251px;width:428px;height:3px;background:linear-gradient(90deg,#009954 0%,#029938 45.8%,#4d992c 58.9%,#99961e 69.6%,#996e0f 76.2%,#994a02 85.5%,#992c00 100%)"></i><i style="left:12px;top:254px;width:431px;height:3px;background:linear-gradient(90deg,#009956 0%,#02993b 45.1%,#4f992e 58.1%,#999721 68.4%,#996d11 74.9%,#994a03 84.2%,#992e00 96.7%,#992900 100%)"></i><i style="left:12px;top:257px;width:434px;height:3px;background:linear-gradient(90deg,#009958 0%,#01993d 44.2%,#4e9931 57.1%,#999825 67.3%,#997015 73.3%,#994d06 82%,#993500 91.7%,#972600 100%)"></i><i style="left:13px;top:260px;width:437px;height:3px;background:linear-gradient(90deg,#009959 0%,#019940 43.6%,#4c9934 56%,#999828 66.1%,#997017 72%,#994c08 80.7%,#993200 91.3%,#962500 98.6%,#942300 100%)"></i><i style="left:13px;top:263px;width:440px;height:3px;background:linear-gradient(90deg,#00995b 0%,#029942 43.2%,#4e9937 55.5%,#99992c 65%,#99701a 70.9%,#994c0a 79.5%,#992f00 91.4%,#962500 97.3%,#912000 100%)"></i><i style="left:14px;top:266px;width:443px;height:3px;background:linear-gradient(90deg,#00995d 0%,#039945 42.5%,#50993a 54.8%,#99992f 63.8%,#99701c 69.7%,#994b0c 78.3%,#992c00 91.4%,#942300 96.4%,#8e1d00 100%)"></i><i style="left:14px;top:269px;width:447px;height:3px;background:linear-gradient(90deg,#00995f 0%,#019948 41.7%,#4c993d 53.4%,#993 62.8%,#997220 68.2%,#994e0f 76.2%,#992e00 88.8%,#952400 94.2%,#8b1b00 100%)"></i><i style="left:15px;top:272px;width:449px;height:3px;background:linear-gradient(90deg,#009962 0%,#01994b 41.1%,#4d9941 52.7%,#989936 61.6%,#996d21 67.9%,#99490f 76.3%,#992b00 89.3%,#881800 100%)"></i><i style="left:15px;top:275px;width:453px;height:3px;background:linear-gradient(90deg,#009964 0%,#00994e 40.3%,#4d9944 51.8%,#98993a 60.6%,#996f25 66.4%,#994b12 74.3%,#992c03 86.7%,#952400 91.2%,#851600 100%)"></i><i style="left:16px;top:278px;width:456px;height:3px;background:linear-gradient(90deg,#096 0%,#029951 39.9%,#4d9947 50.9%,#99993e 59.6%,#997028 64.9%,#994c15 72.8%,#992c04 85.1%,#972501 89%,#821400 100%)"></i><i style="left:16px;top:281px;width:459px;height:3px;background:linear-gradient(90deg,#009968 0%,#019954 39.3%,#4e994b 50.2%,#999741 59%,#996f2b 64.2%,#994b17 72.1%,#992b05 84.3%,#972402 88.2%,#821300 98.7%,#801200 100%)"></i><i style="left:17px;top:284px;width:462px;height:3px;background:linear-gradient(90deg,#00996a 0%,#019957 38.5%,#4e994e 49.4%,#989946 57.6%,#996e2d 63.2%,#994a18 71%,#992a07 83.1%,#962202 87.4%,#851600 94.8%,#7d1000 100%)"></i><i style="left:17px;top:287px;width:466px;height:3px;background:linear-gradient(90deg,#00996d 0%,#02995a 38.2%,#4d9952 48.5%,#98994a 56.7%,#997031 61.8%,#994c1c 69.1%,#992c0a 80.7%,#962204 86.3%,#841500 93.6%,#7b0e00 100%)"></i><i style="left:18px;top:290px;width:468px;height:3px;background:linear-gradient(90deg,#00996f 0%,#02995d 37.6%,#4f9956 47.9%,#99974d 56%,#996e33 61.1%,#994a1e 68.4%,#992b0b 79.9%,#962105 85.5%,#811300 93.6%,#790d00 100%)"></i><i style="left:19px;top:293px;width:471px;height:3px;background:linear-gradient(90deg,#009971 0%,#009961 36.6%,#4d995a 46.8%,#999851 54.9%,#997038 59.6%,#994d22 66.4%,#992e0e 77%,#972006 84.3%,#7f1200 93.2%,#760b00 100%)"></i><i style="left:19px;top:296px;width:475px;height:3px;background:linear-gradient(90deg,#009974 0%,#019964 36.3%,#4c995e 46%,#999755 54%,#99703b 58.6%,#994c24 65.4%,#992d10 75.9%,#971f07 83.5%,#7d0f00 93.2%,#740a00 100%)"></i><i style="left:20px;top:299px;width:477px;height:3px;background:linear-gradient(90deg,#097 0%,#029968 35.7%,#4e9962 45.4%,#99995b 52.9%,#997040 57.6%,#994c27 64.3%,#992d12 74.8%,#971e08 82.8%,#7a0e00 93.3%,#720800 100%)"></i><i style="left:20px;top:302px;width:481px;height:3px;background:linear-gradient(90deg,#009979 0%,#00996c 35%,#4d9966 44.6%,#999860 52.1%,#996f43 56.7%,#994c29 63.3%,#992c13 73.8%,#971d09 81.7%,#780c00 93.3%,#700700 100%)"></i><i style="left:21px;top:305px;width:484px;height:3px;background:linear-gradient(90deg,#00997c 0%,#009970 34.3%,#4a996b 43.4%,#999763 51.2%,#996e46 55.8%,#994a2c 62.4%,#992b15 72.7%,#961c0a 81%,#760b00 93%,#6e0600 100%)"></i><i style="left:22px;top:308px;width:486px;height:3px;background:linear-gradient(90deg,#00997f 0%,#009974 33.7%,#47996f 42.4%,#99996a 50.2%,#99724c 54.3%,#994e31 60.5%,#992f1a 70%,#961b0b 80.2%,#740900 93%,#6c0500 100%)"></i><i style="left:22px;top:311px;width:490px;height:3px;background:linear-gradient(90deg,#009981 0%,#019978 33.5%,#4e9973 42.4%,#99986e 49.4%,#997150 53.5%,#994d34 59.6%,#992e1b 69%,#971a0c 79.2%,#720800 92.7%,#6a0400 100%)"></i><i style="left:23px;top:314px;width:493px;height:3px;background:linear-gradient(90deg,#009984 0%,#02997c 32.9%,#4c9978 41.5%,#999974 48.4%,#997154 52.4%,#994d36 58.5%,#992d1d 67.9%,#96190d 78.5%,#710700 92.3%,#670300 100%)"></i><i style="left:24px;top:317px;width:495px;height:3px;background:linear-gradient(90deg,#009987 0%,#029980 32.4%,#4e997d 40.9%,#97997a 47.4%,#996c54 52.2%,#994937 58.3%,#992a1d 68%,#96180e 77.7%,#710701 91.5%,#650200 100%)"></i><i style="left:24px;top:320px;width:499px;height:3px;background:linear-gradient(90deg,#00998b 0%,#009985 31.7%,#4d9982 40.2%,#979980 46.6%,#996e5a 51%,#994a3b 57%,#992b20 66.3%,#97170f 76.7%,#720602 90%,#630100 100%)"></i><i style="left:25px;top:323px;width:502px;height:3px;background:linear-gradient(90deg,#00998e 0%,#009989 31.1%,#499987 39%,#999985 45.8%,#996f60 49.8%,#994c40 55.4%,#992d24 64.1%,#981610 75.7%,#720602 88.8%,#600000 100%)"></i><i style="left:26px;top:326px;width:504px;height:3px;background:linear-gradient(90deg,#009991 0%,#00998e 30.6%,#47998d 38.1%,#97998b 44.8%,#996d62 49.2%,#994a42 54.8%,#992c26 63.5%,#981511 75%,#720503 88.1%,#600000 100%)"></i><i style="left:26px;top:329px;width:508px;height:3px;background:linear-gradient(90deg,#009994 0%,#019993 30.3%,#4e9992 38.2%,#989992 44.1%,#996c66 48.4%,#994945 53.9%,#992b28 62.6%,#971412 74.4%,#710403 87.8%,#600000 98.4%,#5f0000 100%)"></i><i style="left:27px;top:332px;width:511px;height:3px;background:linear-gradient(90deg,#009998 0%,#029998 29.8%,#4c9998 37.3%,#979998 43.1%,#996c6b 47.5%,#994948 52.9%,#992a2a 61.6%,#961313 73.7%,#710404 87.1%,#610000 96.9%,#5e0000 100%)"></i><i style="left:28px;top:335px;width:513px;height:3px;background:linear-gradient(90deg,#009799 0%,#029599 29.3%,#509499 37.1%,#999398 43%,#996d71 46.5%,#994b4e 51.6%,#992c2e 59.8%,#961214 73%,#710304 86.3%,#610000 96.5%,#5e0000 100%)"></i><i style="left:29px;top:338px;width:516px;height:3px;background:linear-gradient(90deg,#009399 0%,#019099 28.7%,#4e8f99 36.4%,#998b97 42.6%,#99646e 46.5%,#99444b 51.9%,#99272c 60.5%,#971115 72.1%,#710305 85.3%,#610000 96.1%,#5d0000 100%)"></i><i style="left:29px;top:341px;width:519px;height:3px;background:linear-gradient(90deg,#009099 0%,#008b99 28.2%,#4b8999 35.9%,#998596 42.5%,#99606e 46.3%,#99404b 51.7%,#99242c 60.2%,#971016 71.4%,#720206 84.2%,#600000 95.8%,#5d0000 100%)"></i><i style="left:30px;top:344px;width:522px;height:3px;background:linear-gradient(90deg,#008c99 0%,#008799 27.6%,#498499 35.2%,#978199 41.8%,#995b6e 46%,#993c4a 51.7%,#99212b 60.5%,#980f17 70.5%,#720207 83.1%,#5e0000 97.7%,#5c0000 100%)"></i><i style="left:31px;top:347px;width:525px;height:3px;background:linear-gradient(90deg,#008999 0%,#008299 27.1%,#4c7f99 35.1%,#997a97 41.6%,#99586f 45.4%,#99394b 51.1%,#991f2c 59.9%,#970e18 69.8%,#720107 82.4%,#5b0000 100%)"></i><i style="left:32px;top:350px;width:527px;height:3px;background:linear-gradient(90deg,#008699 0%,#007e99 26.6%,#4b7a99 34.6%,#987699 41.1%,#99536f 45.2%,#99364b 51%,#991d2c 59.7%,#970d19 69.2%,#720108 81.7%,#5b0000 100%)"></i><i style="left:32px;top:353px;width:531px;height:3px;background:linear-gradient(90deg,#008299 0%,#027999 26.4%,#507599 34.7%,#977199 40.8%,#994d6c 45.3%,#993148 51.3%,#991829 60.8%,#960c1a 68.7%,#720008 81.1%,#5a0000 100%)"></i><i style="left:33px;top:356px;width:534px;height:3px;background:linear-gradient(90deg,#007f99 0%,#017599 25.8%,#4e7099 34.1%,#986b99 40.4%,#994b6f 44.6%,#99314c 50.2%,#99182d 59.2%,#970b1b 67.8%,#74000a 79.4%,#590000 100%)"></i><i style="left:34px;top:359px;width:536px;height:3px;background:linear-gradient(90deg,#007c99 0%,#017199 25.4%,#4c6c99 33.6%,#996598 40.3%,#99476f 44.4%,#992c4b 50.4%,#99152b 59.7%,#970a1c 67.2%,#76000b 78%,#590000 100%)"></i><i style="left:35px;top:362px;width:539px;height:3px;background:linear-gradient(90deg,#007999 0%,#026d99 24.9%,#506799 33.5%,#986199 39.8%,#994470 43.9%,#992a4c 49.8%,#99142c 59.1%,#98091e 66.2%,#78000c 76.6%,#580000 99.6%,#580000 100%)"></i><i style="left:36px;top:365px;width:542px;height:3px;background:linear-gradient(90deg,#007699 0%,#016a99 24.4%,#4e6399 32.8%,#995c99 39.5%,#994070 43.5%,#99284c 49.4%,#99122d 58.7%,#97081e 65.7%,#7a000e 74.9%,#590000 98.5%,#570000 100%)"></i><i style="left:36px;top:368px;width:545px;height:3px;background:linear-gradient(90deg,#007399 0%,#069 23.9%,#4b5f99 32.4%,#995798 39.3%,#993d70 43.4%,#99254d 49.3%,#99102d 58.5%,#97071f 65.1%,#7d0010 73.5%,#5f0001 93.8%,#570000 100%)"></i><i style="left:37px;top:371px;width:548px;height:3px;background:linear-gradient(90deg,#007099 0%,#006299 23.4%,#4a5b99 31.8%,#995297 39.1%,#993970 43.1%,#99234d 48.9%,#990f2e 58%,#970620 64.2%,#7f0012 71.9%,#5e0001 93.8%,#560000 100%)"></i><i style="left:38px;top:374px;width:547px;height:3px;background:linear-gradient(90deg,#006d99 0%,#005f99 23.1%,#4d5799 31.9%,#994f99 38.8%,#993771 42.9%,#99214e 48.7%,#990d2f 57.9%,#970521 64.1%,#820013 71.1%,#600002 93%,#560000 100%)"></i><i style="left:39px;top:377px;width:546px;height:3px;background:linear-gradient(90deg,#006a99 0%,#005c99 22.7%,#4b5399 31.5%,#994a98 38.8%,#99316f 43.2%,#991c4b 49.5%,#99092c 59.3%,#960421 64.1%,#840015 70.3%,#630003 91.6%,#560000 100%)"></i><i style="left:40px;top:380px;width:538px;height:3px;background:linear-gradient(90deg,#006799 0%,#005899 22.7%,#4d4f99 32%,#984799 39%,#992e6e 43.9%,#99194a 50.6%,#99072a 61%,#960322 64.7%,#850016 71%,#640003 92.2%,#570000 100%)"></i><i style="left:41px;top:383px;width:529px;height:3px;background:linear-gradient(90deg,#006499 0%,#059 22.7%,#4d4c99 32.2%,#994298 39.8%,#992b6f 44.3%,#99174b 51.1%,#99062b 61.7%,#970224 65.2%,#830014 73.5%,#610003 95.8%,#5a0001 100%)"></i><i style="left:41px;top:386px;width:521px;height:3px;background:linear-gradient(90deg,#006299 0%,#025299 23.1%,#4d4899 32.7%,#993e98 40.4%,#992970 45%,#99154c 51.9%,#99042c 62.7%,#960125 66.2%,#7b000e 80.4%,#640004 95.8%,#5d0002 100%)"></i><i style="left:42px;top:389px;width:513px;height:3px;background:linear-gradient(90deg,#005f99 0%,#024f99 23%,#504599 33.2%,#993a96 41%,#99256f 45.7%,#99134b 52.7%,#99032c 63.7%,#960025 67.2%,#7b000e 82%,#630004 97.7%,#5f0003 100%)"></i><i style="left:43px;top:392px;width:504px;height:3px;background:linear-gradient(90deg,#005c99 0%,#014c99 23%,#4e4199 33.3%,#983799 41.3%,#99226f 46.4%,#99114c 53.6%,#99012d 64.7%,#950024 69%,#7a000e 84.5%,#620004 100%)"></i><i style="left:44px;top:395px;width:495px;height:3px;background:linear-gradient(90deg,#005a99 0%,#024999 23.1%,#4d3e99 33.6%,#993397 42.1%,#991f6e 47.4%,#990e4a 55.1%,#99002b 66.8%,#900020 72.5%,#76000b 90.3%,#650005 100%)"></i><i style="left:45px;top:398px;width:486px;height:3px;background:linear-gradient(90deg,#005799 0%,#014699 23%,#4f3b99 34.2%,#983099 42.4%,#991c6e 48.1%,#990c4a 56%,#99002d 67.5%,#950024 72%,#7a000d 88.9%,#690006 100%)"></i><i style="left:46px;top:401px;width:477px;height:3px;background:linear-gradient(90deg,#005499 0%,#024399 23.1%,#4e3899 34.5%,#992c98 43.3%,#991a6f 48.7%,#990a4b 56.7%,#99002f 67.6%,#950025 73.1%,#7b000e 89.9%,#6c0007 100%)"></i><i style="left:47px;top:404px;width:468px;height:3px;background:linear-gradient(90deg,#005299 0%,#014199 23.1%,#4d3599 34.6%,#992897 44%,#99176f 49.6%,#99084c 57.7%,#990032 67.5%,#960025 74.4%,#7c000f 91.5%,#6f0009 100%)"></i><i style="left:48px;top:407px;width:460px;height:3px;background:linear-gradient(90deg,#004f99 0%,#013e99 23%,#4f3299 35.2%,#992699 44.3%,#99146f 50.4%,#99064a 59.1%,#990034 67.8%,#970026 75.7%,#7c000f 93%,#72000a 100%)"></i><i style="left:49px;top:410px;width:451px;height:3px;background:linear-gradient(90deg,#004d99 0%,#023c99 23.1%,#4e2f99 35.6%,#992297 45.3%,#991270 51.1%,#99044b 60%,#903 69.8%,#970026 77.3%,#7c000f 95.1%,#76000c 100%)"></i><i style="left:50px;top:413px;width:442px;height:3px;background:linear-gradient(90deg,#004a99 0%,#013999 23.1%,#4d2c99 35.7%,#982099 45.7%,#990f6d 52.5%,#99024a 61.5%,#99002b 76%,#8e001d 84.2%,#7a000d 100%)"></i><i style="left:51px;top:416px;width:433px;height:3px;background:linear-gradient(90deg,#004899 0%,#023799 23.1%,#502999 36.6%,#991c98 46.8%,#990d6f 53.2%,#99004b 62.5%,#99002c 76.9%,#940023 82.4%,#7c000f 100%)"></i><i style="left:52px;top:419px;width:424px;height:3px;background:linear-gradient(90deg,#004599 0%,#013499 23.1%,#4e2799 36.8%,#991997 47.6%,#990b6f 54.2%,#99004a 64.2%,#99002b 79.2%,#930022 84.9%,#7f0011 100%)"></i><i style="left:53px;top:422px;width:415px;height:3px;background:linear-gradient(90deg,#004399 0%,#023299 23.2%,#4e2499 37.2%,#991698 48.3%,#990970 55.1%,#99004e 64.3%,#99002e 79.2%,#960025 85.5%,#820013 100%)"></i><i style="left:54px;top:425px;width:407px;height:3px;background:linear-gradient(90deg,#004199 0%,#023099 23.2%,#4f2199 37.9%,#991397 49.3%,#99066f 56.2%,#990051 64.5%,#990031 79.3%,#960025 87.2%,#840015 100%)"></i><i style="left:55px;top:428px;width:398px;height:3px;background:linear-gradient(90deg,#003e99 0%,#012d99 23.1%,#4e1f99 38.2%,#981199 49.7%,#99046f 57.3%,#99004f 66.3%,#990030 81.9%,#960025 89.4%,#870018 100%)"></i><i style="left:56px;top:431px;width:389px;height:3px;background:linear-gradient(90deg,#003c99 0%,#012b99 23.2%,#4e1c99 38.7%,#990d97 51%,#990270 58.2%,#99004c 69.1%,#99002d 86.1%,#950024 92.3%,#8a001a 100%)"></i><i style="left:57px;top:434px;width:380px;height:3px;background:linear-gradient(90deg,#003a99 0%,#012999 23.2%,#4f1a99 39.5%,#990b97 52.1%,#99006e 60%,#99004a 71.6%,#99002b 89.5%,#920021 96.8%,#8e001d 100%)"></i><i style="left:59px;top:437px;width:370px;height:3px;background:linear-gradient(90deg,#003799 0%,#022799 23.2%,#4f1799 40%,#990897 53%,#99006f 61.1%,#99004b 73%,#99002c 91.4%,#930023 98.4%,#910021 100%)"></i><i style="left:60px;top:440px;width:361px;height:3px;background:linear-gradient(90deg,#003599 0%,#032599 23.3%,#4f1599 40.6%,#990698 53.9%,#990072 61.7%,#99004e 73.3%,#99002e 91.7%,#960025 99.4%,#950024 100%)"></i><i style="left:61px;top:443px;width:353px;height:3px;background:linear-gradient(90deg,#039 0%,#032399 23.3%,#4e1399 40.9%,#990397 55.1%,#99006f 63.6%,#99004b 76.1%,#99002c 96%,#980027 100%)"></i><i style="left:62px;top:446px;width:344px;height:3px;background:linear-gradient(90deg,#003199 0%,#022199 23.3%,#4f1199 41.9%,#980199 55.8%,#99006f 65.1%,#99004b 78.5%,#99002c 98.8%,#99002b 100%)"></i><i style="left:63px;top:449px;width:335px;height:3px;background:linear-gradient(90deg,#002e99 0%,#031f99 23.4%,#4f0e99 42.5%,#990097 57.5%,#990070 66.5%,#99004b 80.2%,#99002e 100%)"></i><i style="left:65px;top:452px;width:325px;height:3px;background:linear-gradient(90deg,#002c99 0%,#011d99 22.8%,#4f0c99 43.2%,#970099 58%,#99006a 69.8%,#990047 84.6%,#990031 100%)"></i><i style="left:66px;top:455px;width:316px;height:3px;background:linear-gradient(90deg,#002a99 0%,#011b99 22.8%,#4e0a99 43.7%,#8e0099 57.6%,#990097 60.1%,#99006f 70.3%,#99004b 84.8%,#990034 100%)"></i><i style="left:67px;top:458px;width:307px;height:3px;background:linear-gradient(90deg,#002899 0%,#011a99 22.9%,#4e0899 44.4%,#840099 56.9%,#990098 61.4%,#99006f 71.9%,#99004c 86.9%,#990038 100%)"></i><i style="left:69px;top:461px;width:298px;height:3px;background:linear-gradient(90deg,#002699 0%,#021899 22.8%,#500699 45.6%,#800099 57%,#990096 63.1%,#99006f 73.8%,#99004b 89.9%,#99003c 100%)"></i><i style="left:70px;top:464px;width:289px;height:3px;background:linear-gradient(90deg,#002499 0%,#021699 22.9%,#500499 46.5%,#850099 59.7%,#990097 64.6%,#99006f 75.7%,#99004b 92.4%,#990040 100%)"></i><i style="left:71px;top:467px;width:280px;height:3px;background:linear-gradient(90deg,#029 0%,#021499 22.9%,#4e0299 47.1%,#990097 66.4%,#99006e 78.6%,#990049 96.4%,#904 100%)"></i><i style="left:73px;top:470px;width:270px;height:3px;background:linear-gradient(90deg,#001f99 0%,#011399 22.2%,#4f0099 48.1%,#990097 68.1%,#99006e 80.7%,#99004a 99.3%,#990049 100%)"></i><i style="left:74px;top:473px;width:261px;height:3px;background:linear-gradient(90deg,#001d99 0%,#011199 22.3%,#4f0099 49.2%,#990098 70%,#99006f 83.1%,#99004e 100%)"></i><i style="left:75px;top:476px;width:252px;height:3px;background:linear-gradient(90deg,#001b99 0%,#011099 22.2%,#4d0099 50%,#990098 72.2%,#99006f 85.7%,#990053 100%)"></i><i style="left:77px;top:479px;width:243px;height:3px;background:linear-gradient(90deg,#001999 0%,#020e99 22.3%,#470099 48.8%,#990097 74.4%,#99006f 88.4%,#990058 100%)"></i><i style="left:78px;top:482px;width:234px;height:3px;background:linear-gradient(90deg,#001799 0%,#020c99 22.2%,#410099 47.9%,#990097 76.9%,#99006f 91.5%,#99005f 100%)"></i><i style="left:80px;top:485px;width:224px;height:3px;background:linear-gradient(90deg,#001599 0%,#010b99 21.4%,#3b0099 46.4%,#990097 79.5%,#99006e 95.5%,#990065 100%)"></i><i style="left:81px;top:488px;width:215px;height:3px;background:linear-gradient(90deg,#001399 0%,#010999 21.5%,#340099 44.9%,#830099 74.8%,#990097 82.2%,#99006e 99.1%,#99006c 100%)"></i><i style="left:83px;top:491px;width:205px;height:3px;background:linear-gradient(90deg,#019 0%,#020899 21.6%,#300099 44.1%,#810099 76.5%,#990098 85.3%,#990074 100%)"></i><i style="left:84px;top:494px;width:196px;height:3px;background:linear-gradient(90deg,#000f99 0%,#020699 21.4%,#2b0099 42.9%,#7c0099 77.6%,#990098 88.8%,#99007d 100%)"></i><i style="left:86px;top:497px;width:186px;height:3px;background:linear-gradient(90deg,#000d99 0%,#010599 20.4%,#2a0099 43%,#790099 79.6%,#990098 92.5%,#990086 100%)"></i><i style="left:88px;top:500px;width:177px;height:3px;background:linear-gradient(90deg,#000b99 0%,#020399 20.5%,#370099 51.1%,#870099 88.6%,#990097 96.6%,#99008f 100%)"></i><i style="left:90px;top:503px;width:167px;height:3px;background:linear-gradient(90deg,#000999 0%,#010299 19.3%,#4e0099 65.1%,#980099 100%)"></i><i style="left:91px;top:506px;width:158px;height:3px;background:linear-gradient(90deg,#000899 0%,#010199 19%,#4f0099 68.4%,#8d0099 100%)"></i><i style="left:93px;top:509px;width:148px;height:3px;background:linear-gradient(90deg,#000699 0%,#020099 18.9%,#4f0099 71.6%,#820099 100%)"></i><i style="left:95px;top:512px;width:138px;height:3px;background:linear-gradient(90deg,#000498 0%,#030099 18.8%,#500099 75.4%,#780099 100%)"></i><i style="left:97px;top:515px;width:128px;height:3px;background:linear-gradient(90deg,#000298 0%,#020099 17.2%,#500099 79.7%,#6e0099 100%)"></i><i style="left:99px;top:518px;width:119px;height:3px;background:linear-gradient(90deg,#000097 0%,#030099 16.9%,#510099 84.7%,#609 100%)"></i><i style="left:102px;top:521px;width:108px;height:3px;background:linear-gradient(90deg,#000097 0%,#030099 14.8%,#500099 88.9%,#5d0099 100%)"></i><i style="left:104px;top:524px;width:98px;height:3px;background:linear-gradient(90deg,#000096 0%,#040098 14.3%,#520099 98%,#540099 100%)"></i><i style="left:107px;top:527px;width:87px;height:3px;background:linear-gradient(90deg,#000096 0%,#050097 14%,#4c0099 100%)"></i><i style="left:110px;top:530px;width:76px;height:3px;background:linear-gradient(90deg,#000095 0%,#400099 94.7%,#409 100%)"></i><i style="left:113px;top:533px;width:65px;height:3px;background:linear-gradient(90deg,#020095 0%,#3c0099 100%)"></i><i style="left:117px;top:536px;width:54px;height:3px;background:linear-gradient(90deg,#060095 0%,#360099 100%)"></i><i style="left:121px;top:539px;width:42px;height:3px;background:linear-gradient(90deg,#0a0094 0%,#2f0098 100%)"></i><i style="left:125px;top:542px;width:30px;height:3px;background:linear-gradient(90deg,#0e0094 0%,#280097 100%)"></i><i style="left:130px;top:545px;width:17px;height:3px;background:linear-gradient(90deg,#120094 0%,#210095 100%)"></i><i style="left:135px;top:548px;width:4px;height:2px;background:linear-gradient(90deg,#170093 0%,#1a0094 100%)"></i></div><div class="cl" style="clip-path:polygon(237.8px 156.3px,508.0px 333.3px,118.7px 510.4px)"><i style="left:235px;top:154px;width:7px;height:2px;background:linear-gradient(90deg,#0f0 0%,#05ff00 100%)"></i><i style="left:235px;top:156px;width:10px;height:2px;background:linear-gradient(90deg,#00ff02 0%,#0bff00 100%)"></i><i style="left:234px;top:158px;width:14px;height:2px;background:linear-gradient(90deg,#00ff03 0%,#07ff00 57.1%,#10ff00 100%)"></i><i style="left:233px;top:160px;width:18px;height:2px;background:linear-gradient(90deg,#00ff05 0%,#07ff02 44.4%,#16ff00 100%)"></i><i style="left:233px;top:162px;width:21px;height:2px;background:linear-gradient(90deg,#00ff06 0%,#0cff02 50%,#1cff00 100%)"></i><i style="left:232px;top:164px;width:25px;height:2px;background:linear-gradient(90deg,#00ff07 0%,#08ff04 33.3%,#2f0 100%)"></i><i style="left:231px;top:166px;width:29px;height:2px;background:linear-gradient(90deg,#00ff09 0%,#07ff06 28.6%,#28ff00 100%)"></i><i style="left:231px;top:168px;width:32px;height:2px;background:linear-gradient(90deg,#00ff0a 0%,#0bff07 31.2%,#2eff00 100%)"></i><i style="left:230px;top:170px;width:36px;height:2px;background:linear-gradient(90deg,#00ff0c 0%,#08ff09 22.2%,#34ff00 100%)"></i><i style="left:229px;top:172px;width:40px;height:2px;background:linear-gradient(90deg,#00ff0e 0%,#07ff0b 20%,#3bff00 100%)"></i><i style="left:229px;top:174px;width:43px;height:2px;background:linear-gradient(90deg,#00ff0f 0%,#0cff0b 23.8%,#41ff00 100%)"></i><i style="left:228px;top:176px;width:47px;height:2px;background:linear-gradient(90deg,#0f1 0%,#08ff0e 17.4%,#48ff00 100%)"></i><i style="left:227px;top:178px;width:51px;height:2px;background:linear-gradient(90deg,#00ff13 0%,#08ff0f 16%,#4fff00 100%)"></i><i style="left:227px;top:180px;width:54px;height:2px;background:linear-gradient(90deg,#00ff14 0%,#0cff10 18.5%,#56ff00 100%)"></i><i style="left:226px;top:182px;width:58px;height:2px;background:linear-gradient(90deg,#00ff16 0%,#08ff13 13.8%,#5eff00 100%)"></i><i style="left:225px;top:184px;width:62px;height:2px;background:linear-gradient(90deg,#00ff18 0%,#04ff15 9.7%,#65ff00 100%)"></i><i style="left:225px;top:186px;width:66px;height:2px;background:linear-gradient(90deg,#00ff19 0%,#0cff15 15.2%,#6fff00 100%)"></i><i style="left:224px;top:188px;width:70px;height:2px;background:linear-gradient(90deg,#00ff1b 0%,#08ff18 11.4%,#6bff00 91.4%,#7f0 100%)"></i><i style="left:223px;top:190px;width:74px;height:2px;background:linear-gradient(90deg,#00ff1d 0%,#05ff1a 8.1%,#68ff03 83.8%,#80ff00 100%)"></i><i style="left:223px;top:192px;width:77px;height:2px;background:linear-gradient(90deg,#00ff1e 0%,#0cff1a 13.2%,#6fff03 84.2%,#8f0 100%)"></i><i style="left:222px;top:194px;width:81px;height:2px;background:linear-gradient(90deg,#00ff20 0%,#09ff1d 10%,#6bff06 77.5%,#91ff00 100%)"></i><i style="left:221px;top:196px;width:85px;height:2px;background:linear-gradient(90deg,#0f2 0%,#05ff20 7.1%,#67ff09 71.4%,#9aff00 100%)"></i><i style="left:221px;top:198px;width:88px;height:2px;background:linear-gradient(90deg,#00ff24 0%,#0cff20 11.4%,#70ff09 72.7%,#a3ff00 100%)"></i><i style="left:220px;top:200px;width:92px;height:2px;background:linear-gradient(90deg,#00ff26 0%,#09ff23 8.7%,#6cff0c 67.4%,#adff00 100%)"></i><i style="left:219px;top:202px;width:96px;height:2px;background:linear-gradient(90deg,#00ff28 0%,#05ff25 6.2%,#68ff0f 62.5%,#b7ff00 100%)"></i><i style="left:219px;top:204px;width:99px;height:2px;background:linear-gradient(90deg,#00ff29 0%,#09ff26 8.2%,#6bff10 61.2%,#c1ff00 100%)"></i><i style="left:218px;top:206px;width:103px;height:2px;background:linear-gradient(90deg,#00ff2b 0%,#09ff28 7.8%,#6cff12 58.8%,#cbff00 100%)"></i><i style="left:217px;top:208px;width:107px;height:2px;background:linear-gradient(90deg,#00ff2d 0%,#05ff2b 5.7%,#67ff15 54.7%,#cf0 96.2%,#d6ff00 100%)"></i><i style="left:217px;top:210px;width:110px;height:2px;background:linear-gradient(90deg,#00ff2f 0%,#0aff2c 7.3%,#6dff16 54.5%,#d2ff00 94.5%,#e1ff00 100%)"></i><i style="left:216px;top:212px;width:114px;height:2px;background:linear-gradient(90deg,#00ff31 0%,#09ff2e 7%,#6dff19 52.6%,#d3ff02 91.2%,#edff00 100%)"></i><i style="left:215px;top:214px;width:118px;height:2px;background:linear-gradient(90deg,#0f3 0%,#05ff31 5.1%,#69ff1c 49.2%,#cfff06 86.4%,#f9ff00 100%)"></i><i style="left:215px;top:216px;width:121px;height:2px;background:linear-gradient(90deg,#00ff35 0%,#0aff32 6.7%,#6cff1d 48.3%,#d4ff07 85%,#fffe00 98.3%,#fff900 100%)"></i><i style="left:214px;top:218px;width:125px;height:2px;background:linear-gradient(90deg,#00ff37 0%,#09ff34 6.5%,#6cff20 46.8%,#d0ff0b 80.6%,#fffd00 95.2%,#ffed00 100%)"></i><i style="left:213px;top:220px;width:129px;height:2px;background:linear-gradient(90deg,#00ff3a 0%,#05ff37 4.7%,#68ff23 43.8%,#ccff0e 76.6%,#fdff04 90.6%,#ffe200 100%)"></i><i style="left:213px;top:222px;width:132px;height:2px;background:linear-gradient(90deg,#00ff3c 0%,#0aff39 6.1%,#6dff24 43.9%,#d2ff0f 75.8%,#feff06 87.9%,#ffd800 100%)"></i><i style="left:212px;top:224px;width:137px;height:2px;background:linear-gradient(90deg,#00ff3e 0%,#0aff3b 5.9%,#6aff27 41.2%,#d0ff13 72.1%,#fcff0a 83.8%,#ffd900 95.6%,#fc0 100%)"></i><i style="left:211px;top:226px;width:141px;height:2px;background:linear-gradient(90deg,#00ff40 0%,#05ff3e 4.3%,#66ff2b 38.6%,#cbff16 68.6%,#fdff0c 81.4%,#ffc700 98.6%,#ffc300 100%)"></i><i style="left:211px;top:228px;width:144px;height:2px;background:linear-gradient(90deg,#00ff42 0%,#07ff40 4.2%,#67ff2d 37.5%,#cdff19 66.7%,#ffff0f 79.2%,#ffc901 94.4%,#ffba00 100%)"></i><i style="left:210px;top:230px;width:148px;height:2px;background:linear-gradient(90deg,#00ff45 0%,#0aff42 5.4%,#6cff2e 37.8%,#d4ff1a 66.2%,#fffd11 77%,#ffc803 91.9%,#ffb200 100%)"></i><i style="left:209px;top:232px;width:152px;height:2px;background:linear-gradient(90deg,#00ff47 0%,#05ff45 3.9%,#67ff32 35.5%,#cfff1e 63.2%,#fcff15 73.7%,#ffd80a 84.2%,#fa0 100%)"></i><i style="left:209px;top:234px;width:155px;height:2px;background:linear-gradient(90deg,#00ff49 0%,#07ff47 3.9%,#6aff34 35.1%,#cfff21 61%,#fdff18 71.4%,#ffc206 88.3%,#ffa300 100%)"></i><i style="left:208px;top:236px;width:159px;height:2px;background:linear-gradient(90deg,#00ff4c 0%,#06ff49 3.8%,#66ff37 32.9%,#caff24 58.2%,#feff1b 69.6%,#ffc509 84.8%,#ff9c00 100%)"></i><i style="left:207px;top:238px;width:163px;height:2px;background:linear-gradient(90deg,#00ff4e 0%,#06ff4c 3.7%,#66ff3a 32.1%,#cbff27 56.8%,#ffff1d 67.9%,#ffcc0e 80.2%,#ff9a00 97.5%,#ff9500 100%)"></i><i style="left:206px;top:240px;width:167px;height:2px;background:linear-gradient(90deg,#00ff51 0%,#05ff4f 3.6%,#66ff3d 31.3%,#ccff2a 55.4%,#fffd20 66.3%,#ffca10 78.3%,#ff9901 95.2%,#ff8e00 100%)"></i><i style="left:206px;top:242px;width:170px;height:2px;background:linear-gradient(90deg,#00ff53 0%,#06ff51 3.5%,#68ff3f 30.6%,#ceff2d 54.1%,#fdff24 63.5%,#ffc411 77.6%,#ff9502 94.1%,#f80 100%)"></i><i style="left:205px;top:244px;width:174px;height:2px;background:linear-gradient(90deg,#0f5 0%,#06ff53 3.4%,#68ff42 29.9%,#cfff30 52.9%,#feff27 62.1%,#ffc715 74.7%,#ff9705 90.8%,#ff8200 100%)"></i><i style="left:204px;top:246px;width:178px;height:2px;background:linear-gradient(90deg,#00ff58 0%,#05ff56 3.4%,#68ff45 29.2%,#d0ff32 51.7%,#fffe2a 60.7%,#ffca18 71.9%,#ff9b08 86.5%,#ff7d00 100%)"></i><i style="left:204px;top:248px;width:181px;height:2px;background:linear-gradient(90deg,#00ff5b 0%,#07ff58 3.3%,#66ff48 27.8%,#caff37 48.9%,#fffe2d 58.9%,#ffca1b 70%,#ff9a0a 84.4%,#f70 100%)"></i><i style="left:203px;top:250px;width:185px;height:2px;background:linear-gradient(90deg,#00ff5d 0%,#06ff5b 3.3%,#66ff4b 27.2%,#cbff3a 47.8%,#fffc30 57.6%,#ffc81d 68.5%,#ff990c 82.6%,#ff7200 100%)"></i><i style="left:202px;top:252px;width:189px;height:2px;background:linear-gradient(90deg,#00ff60 0%,#05ff5e 3.2%,#66ff4e 26.6%,#ccff3d 46.8%,#fdff35 55.3%,#ffc31e 68.1%,#ff920c 83%,#ff6d00 100%)"></i><i style="left:202px;top:254px;width:192px;height:2px;background:linear-gradient(90deg,#00ff63 0%,#07ff61 3.1%,#68ff51 26%,#ceff40 45.8%,#fffe38 54.2%,#ffc923 64.6%,#ff9a11 78.1%,#ff6e00 96.9%,#ff6800 100%)"></i><i style="left:201px;top:256px;width:196px;height:2px;background:linear-gradient(90deg,#00ff65 0%,#06ff63 3.1%,#68ff54 25.5%,#cfff43 44.9%,#fffd3a 53.1%,#ffc826 63.3%,#ff9813 76.5%,#ff6d02 94.9%,#ff6400 100%)"></i><i style="left:200px;top:258px;width:200px;height:2px;background:linear-gradient(90deg,#00ff68 0%,#06ff66 3%,#69ff57 25%,#d0ff46 44%,#fcff3f 51%,#ffdf32 57%,#ffae1e 68%,#ff810c 83%,#ff5f00 100%)"></i><i style="left:200px;top:260px;width:203px;height:2px;background:linear-gradient(90deg,#00ff6b 0%,#07ff69 3%,#67ff5a 23.8%,#caff4b 41.6%,#fcff43 49.5%,#ffe437 54.5%,#ffb122 65.3%,#ff830f 80.2%,#ff5b00 100%)"></i><i style="left:199px;top:262px;width:208px;height:2px;background:linear-gradient(90deg,#00ff6e 0%,#06ff6c 2.9%,#66ff5d 23.1%,#c9ff4e 40.4%,#fcff47 48.1%,#ffe93d 51.9%,#ffb527 62.5%,#ff8813 76%,#ff5e01 95.2%,#ff5600 100%)"></i><i style="left:198px;top:264px;width:212px;height:2px;background:linear-gradient(90deg,#00ff71 0%,#06ff6f 2.8%,#66ff61 22.6%,#caff52 39.6%,#fdff4a 47.2%,#ffc430 57.5%,#ff951b 69.8%,#ff6908 86.8%,#ff5200 100%)"></i><i style="left:198px;top:266px;width:215px;height:2px;background:linear-gradient(90deg,#00ff74 0%,#07ff72 2.8%,#6aff64 22.4%,#d0ff55 39.3%,#fdff4e 45.8%,#ffc433 56.1%,#ff941d 68.2%,#ff680a 85%,#ff4e00 100%)"></i><i style="left:197px;top:268px;width:219px;height:2px;background:linear-gradient(90deg,#0f7 0%,#07ff75 2.8%,#6aff67 22%,#d1ff58 38.5%,#ffff52 45%,#ffc738 54.1%,#f92 65.1%,#ff6d0e 80.7%,#ff4a00 100%)"></i><i style="left:196px;top:270px;width:223px;height:2px;background:linear-gradient(90deg,#00ff7a 0%,#06ff78 2.7%,#6aff6a 21.6%,#d2ff5c 37.8%,#fffe55 44.1%,#ffca3d 52.3%,#ff9b26 63.1%,#ff6e11 78.4%,#ff4700 100%)"></i><i style="left:196px;top:272px;width:226px;height:2px;background:linear-gradient(90deg,#00ff7d 0%,#07ff7b 2.7%,#67ff6e 20.4%,#cfff60 36.3%,#fdff5a 42.5%,#ffc33c 52.2%,#ff9325 63.7%,#ff670f 79.6%,#ff4300 100%)"></i><i style="left:195px;top:274px;width:230px;height:2px;background:linear-gradient(90deg,#00ff80 0%,#07ff7f 2.6%,#67ff72 20%,#c9ff65 34.8%,#feff5e 41.7%,#ffc641 50.4%,#ff972a 60.9%,#ff6c14 75.7%,#ff4501 96.5%,#fc3f00 100%)"></i><i style="left:194px;top:276px;width:234px;height:2px;background:linear-gradient(90deg,#00ff84 0%,#06ff82 2.6%,#67ff75 19.7%,#caff69 34.2%,#fffe61 41%,#ffca46 48.7%,#ff992e 59%,#ff6f18 72.6%,#ff4804 92.3%,#fc4000 97.4%,#f73b00 100%)"></i><i style="left:194px;top:278px;width:237px;height:2px;background:linear-gradient(90deg,#00ff87 0%,#03ff86 1.7%,#65ff79 18.6%,#c9ff6d 33.1%,#fffe66 39.8%,#ffc94a 47.5%,#ff9930 57.6%,#ff6e1a 71.2%,#ff4705 90.7%,#fc3f01 95.8%,#f33700 100%)"></i><i style="left:193px;top:280px;width:241px;height:2px;background:linear-gradient(90deg,#00ff8a 0%,#07ff89 2.5%,#6aff7c 19.2%,#d1ff70 33.3%,#fffd69 39.2%,#ffc84c 46.7%,#ff9732 56.7%,#ff6d1b 70%,#ff4607 89.2%,#fd3e02 94.2%,#ef3300 100%)"></i><i style="left:192px;top:282px;width:245px;height:2px;background:linear-gradient(90deg,#00ff8e 0%,#06ff8c 2.5%,#65ff81 18%,#cbff75 32%,#fcff6f 37.7%,#ffee65 40.2%,#ffbd4a 47.5%,#ff8d2f 58.2%,#ff6118 73%,#fd3d04 92.6%,#eb3000 100%)"></i><i style="left:192px;top:284px;width:248px;height:2px;background:linear-gradient(90deg,#00ff91 0%,#03ff90 1.6%,#62ff85 16.9%,#c8ff79 30.6%,#fffe73 37.1%,#ffc854 44.4%,#ff9738 54%,#ff6c20 66.9%,#ff450a 85.5%,#fd3c05 91.1%,#e72c00 100%)"></i><i style="left:191px;top:286px;width:252px;height:2px;background:linear-gradient(90deg,#00ff95 0%,#07ff93 2.4%,#68ff88 17.5%,#d0ff7d 31%,#fffd76 36.5%,#ffc757 43.7%,#ff963a 53.2%,#ff6b22 65.9%,#ff440b 84.1%,#fe3b06 89.7%,#e32900 100%)"></i><i style="left:190px;top:288px;width:256px;height:2px;background:linear-gradient(90deg,#00ff98 0%,#06ff97 2.3%,#68ff8c 17.2%,#caff82 29.7%,#fcff7c 35.2%,#ffed72 37.5%,#ffbc54 44.5%,#ff8e39 53.9%,#ff6320 67.2%,#ff3d09 86.7%,#f73605 90.6%,#e02600 100%)"></i><i style="left:190px;top:290px;width:259px;height:2px;background:linear-gradient(90deg,#00ff9c 0%,#03ff9b 1.6%,#65ff91 16.3%,#c9ff86 28.7%,#fbff81 34.1%,#fff57a 35.7%,#ffc05a 42.6%,#ff903e 51.9%,#ff6724 64.3%,#ff410d 82.2%,#fc3808 87.6%,#dc2300 100%)"></i><i style="left:189px;top:292px;width:263px;height:2px;background:linear-gradient(90deg,#00ffa0 0%,#07ff9e 2.3%,#6bff94 16.8%,#d1ff8a 29%,#fdff86 33.6%,#ffc360 41.2%,#ff9644 49.6%,#ff6a29 61.8%,#ff4310 79.4%,#fd3709 86.3%,#da2100 99.2%,#d92100 100%)"></i><i style="left:188px;top:294px;width:267px;height:2px;background:linear-gradient(90deg,#00ffa3 0%,#02ffa3 1.5%,#6f9 15.8%,#cbff8f 27.8%,#feff8a 33.1%,#ffc767 39.8%,#ff9849 48.1%,#ff6d2d 59.4%,#ff4614 75.9%,#fd360b 85%,#d71f00 99.2%,#d51e00 100%)"></i><i style="left:188px;top:296px;width:270px;height:2px;background:linear-gradient(90deg,#00ffa7 0%,#04ffa6 1.5%,#62ff9e 14.8%,#c8ff94 26.7%,#fbff90 31.9%,#fff488 33.3%,#ffbf65 40%,#ff8f46 48.9%,#ff652b 60.7%,#ff3f12 77.8%,#fd350c 83.7%,#d31c00 99.3%,#d21c00 100%)"></i><i style="left:187px;top:298px;width:274px;height:2px;background:linear-gradient(90deg,#00ffab 0%,#03ffaa 1.5%,#62ffa2 14.6%,#c9ff99 26.3%,#fdff95 31.4%,#ffc26c 38.7%,#ff944d 46.7%,#ff6a31 57.7%,#ff4317 73.7%,#fe340d 82.5%,#d11b00 98.5%,#cf1900 100%)"></i><i style="left:186px;top:300px;width:278px;height:2px;background:linear-gradient(90deg,#00ffaf 0%,#02ffae 1.4%,#62ffa6 14.4%,#caff9e 25.9%,#ffff9a 30.9%,#ffcb76 36.7%,#ff9954 44.6%,#ff6d36 55.4%,#ff461b 70.5%,#fe340e 81.3%,#cf1900 97.8%,#cc1700 100%)"></i><i style="left:186px;top:302px;width:282px;height:2px;background:linear-gradient(90deg,#00ffb3 0%,#04ffb2 1.4%,#66ffab 14.2%,#c8ffa3 24.8%,#fcff9f 29.8%,#ffc174 36.9%,#ff9353 44.7%,#ff6835 55.3%,#ff421a 70.9%,#fd320f 80.1%,#cd1700 97.2%,#c91500 100%)"></i><i style="left:185px;top:304px;width:286px;height:2px;background:linear-gradient(90deg,#00ffb7 0%,#03ffb7 1.4%,#66ffaf 14%,#c9ffa8 24.5%,#feffa4 29.4%,#ffca7e 35%,#ff9c5d 42%,#ff713e 51.7%,#ff4922 65.7%,#fe3110 79%,#cd1701 95.8%,#c61300 100%)"></i><i style="left:184px;top:306px;width:290px;height:2px;background:linear-gradient(90deg,#00ffbc 0%,#02ffbb 1.4%,#66ffb4 13.8%,#caffad 24.1%,#fffea9 29%,#ffc982 34.5%,#ff9a60 41.4%,#ff6f40 51%,#ff4823 64.8%,#fe3012 77.9%,#cd1602 94.5%,#c31100 100%)"></i><i style="left:184px;top:308px;width:293px;height:2px;background:linear-gradient(90deg,#00ffc0 0%,#04ffbf 1.4%,#63ffb9 13%,#c9ffb3 23.3%,#ffffaf 28.1%,#ffc986 33.6%,#ff9a63 40.4%,#ff6f43 50%,#ff4725 63.7%,#fc2e12 77.4%,#cc1502 93.8%,#c00f00 100%)"></i><i style="left:183px;top:310px;width:297px;height:2px;background:linear-gradient(90deg,#00ffc4 0%,#03ffc4 1.4%,#63ffbe 12.8%,#caffb8 23%,#fffdb3 27.7%,#ffc78a 33.1%,#ff9866 39.9%,#ff6d45 49.3%,#ff4627 62.8%,#fd2d13 76.4%,#cc1403 92.6%,#bd0d00 100%)"></i><i style="left:182px;top:312px;width:301px;height:2px;background:linear-gradient(90deg,#00ffc9 0%,#02ffc8 1.3%,#63ffc3 12.7%,#cbffbd 22.7%,#fbffbb 26.7%,#fff3b1 28%,#ffc089 33.3%,#ff8f63 40.7%,#ff6541 50.7%,#ff3e23 65.3%,#fd2c15 75.3%,#cd1404 91.3%,#bb0c00 100%)"></i><i style="left:182px;top:314px;width:304px;height:2px;background:linear-gradient(90deg,#00ffce 0%,#04ffcd 1.3%,#66ffc8 12.5%,#c8ffc3 21.7%,#fffec0 26.3%,#ffcd98 30.9%,#ff9c71 37.5%,#ff714e 46.1%,#ff4a2f 58.6%,#fd2b16 74.3%,#cd1305 90.1%,#b80a00 100%)"></i><i style="left:181px;top:316px;width:308px;height:2px;background:linear-gradient(90deg,#00ffd2 0%,#03ffd2 1.3%,#66ffcd 12.3%,#c9ffc9 21.4%,#fffcc4 26%,#ffcb9c 30.5%,#ff9a73 37%,#ff7051 45.5%,#ff4930 57.8%,#fe2a17 73.4%,#cd1206 89%,#b60900 100%)"></i><i style="left:180px;top:318px;width:312px;height:2px;background:linear-gradient(90deg,#00ffd7 0%,#02ffd7 1.3%,#60ffd3 11.5%,#c2ffcf 20.5%,#fbffcd 25%,#fff2c2 26.3%,#ffbe96 31.4%,#ff9170 37.8%,#ff674d 46.8%,#ff412d 59.6%,#fe2918 72.4%,#cd1207 87.8%,#b30700 100%)"></i><i style="left:180px;top:320px;width:315px;height:2px;background:linear-gradient(90deg,#00ffdc 0%,#04ffdc 1.3%,#64ffd8 11.5%,#c8ffd5 20.4%,#faffd3 24.2%,#fffcd0 24.8%,#ffcaa5 29.3%,#ff987a 35.7%,#ff6e56 43.9%,#ff4734 56.1%,#ff281a 71.3%,#ce1107 86.6%,#b10600 100%)"></i><i style="left:179px;top:322px;width:319px;height:2px;background:linear-gradient(90deg,#00ffe1 0%,#03ffe1 1.3%,#64ffde 11.3%,#caffdb 20.1%,#fcffd9 23.9%,#ffe2c0 26.4%,#ffb295 31.4%,#ff846d 38.4%,#ff5c49 47.8%,#ff3729 61.6%,#fd261a 71.1%,#cc1008 86.2%,#af0500 100%)"></i><i style="left:178px;top:324px;width:323px;height:2px;background:linear-gradient(90deg,#00ffe6 0%,#03ffe6 1.2%,#64ffe4 11.2%,#cbffe1 19.9%,#feffe0 23.6%,#ffc6ac 28.6%,#ff9580 34.8%,#ff6b5a 42.9%,#ff4437 54.7%,#fd251b 70.2%,#cd0f09 85.1%,#ac0400 100%)"></i><i style="left:178px;top:326px;width:326px;height:2px;background:linear-gradient(90deg,#00ffeb 0%,#04ffeb 1.2%,#67ffe9 11%,#d0ffe7 19.6%,#faffe7 22.7%,#fff2db 23.9%,#ffc2ae 28.2%,#ff9282 34.4%,#ff665a 42.9%,#ff4036 55.2%,#fd241d 69.3%,#cd0e09 84%,#aa0300 100%)"></i><i style="left:177px;top:328px;width:330px;height:2px;background:linear-gradient(90deg,#00fff1 0%,#04fff1 1.2%,#67ffef 10.9%,#c9ffee 18.8%,#fcffed 22.4%,#ffc0b2 27.9%,#ff9085 33.9%,#ff655c 42.4%,#ff3e38 54.5%,#fd231e 68.5%,#cd0e0a 83%,#a90200 99.4%,#a80100 100%)"></i><i style="left:176px;top:330px;width:334px;height:2px;background:linear-gradient(90deg,#00fff6 0%,#03fff6 1.2%,#60fff5 10.2%,#c2fff5 18%,#fefff4 22.2%,#ffcac1 26.3%,#ff9b94 31.7%,#ff706b 38.9%,#ff4844 49.7%,#ff2623 65.3%,#fb211e 68.3%,#ca0c0a 83.2%,#a60100 99.4%,#a60000 100%)"></i><i style="left:176px;top:332px;width:334px;height:2px;background:linear-gradient(90deg,#00fffc 0%,#05fffc 1.2%,#64fffc 10.2%,#c7fffc 18%,#fcfffb 21.6%,#ffd9d6 24.6%,#ffa9a7 29.3%,#ff7d7b 35.9%,#ff5352 45.5%,#ff2f2f 59.3%,#fd2120 67.7%,#cd0c0c 82%,#a50000 99.4%,#a50000 100%)"></i><i style="left:175px;top:334px;width:335px;height:2px;background:linear-gradient(90deg,#00fdff 0%,#04fdff 1.2%,#63fcff 10.2%,#c7fcff 18%,#fbfbff 21.6%,#ffe5e9 23.4%,#ffb6b9 27.5%,#ff888b 33.5%,#ff5f61 41.9%,#ff3a3c 53.9%,#fc1f21 67.7%,#cc0b0c 82%,#a60000 99.4%,#a50000 100%)"></i><i style="left:174px;top:336px;width:333px;height:2px;background:linear-gradient(90deg,#00f7ff 0%,#03f7ff 1.2%,#61f6ff 10.2%,#c3f5ff 18.1%,#fff4ff 22.3%,#ffc0c9 26.5%,#ff939a 31.9%,#ff6a70 39.2%,#ff4348 50%,#ff2125 66.3%,#fa1d21 68.7%,#c9090c 83.7%,#a70001 99.4%,#a70001 100%)"></i><i style="left:174px;top:338px;width:329px;height:2px;background:linear-gradient(90deg,#00f1ff 0%,#05f1ff 1.2%,#69f0ff 11%,#cbeeff 18.9%,#ffedff 22.6%,#ffbbca 26.8%,#ff8f9b 32.3%,#ff6771 39.6%,#ff4149 50.6%,#ff2026 67.1%,#fa1c22 69.5%,#c9080c 84.8%,#a90002 99.4%,#a90002 100%)"></i><i style="left:173px;top:340px;width:326px;height:2px;background:linear-gradient(90deg,#00ecff 0%,#04ecff 1.2%,#66eaff 11%,#cfe7ff 19.6%,#ffe4fc 23.3%,#ffb4c9 27.6%,#ff8a9b 33.1%,#ff616f 41.1%,#ff3d48 52.1%,#fd1c25 69.3%,#cd090f 84%,#ac0003 99.4%,#ab0003 100%)"></i><i style="left:172px;top:342px;width:322px;height:2px;background:linear-gradient(90deg,#00e7ff 0%,#03e7ff 1.2%,#64e4ff 11.2%,#cbe1ff 19.9%,#fde0ff 23.6%,#ffadc7 28.6%,#ff8096 34.8%,#ff5a6c 42.9%,#ff3745 54.7%,#fe1b26 70.2%,#cd0810 85.1%,#ae0005 99.4%,#ad0004 100%)"></i><i style="left:171px;top:344px;width:319px;height:2px;background:linear-gradient(90deg,#00e2ff 0%,#02e1ff 1.3%,#62deff 11.3%,#c7dbff 20.1%,#ffd6fc 24.5%,#ffaaca 28.9%,#ff819c 34.6%,#ff5b70 42.8%,#ff394a 54.1%,#fd1a27 71.1%,#cd0710 86.2%,#b00006 99.4%,#af0005 100%)"></i><i style="left:171px;top:346px;width:314px;height:2px;background:linear-gradient(90deg,#0df 0%,#04dcff 1.3%,#63d9ff 11.5%,#c7d5ff 20.4%,#ffd1fe 24.8%,#ffa6cb 29.3%,#ff7b9a 35.7%,#ff566f 43.9%,#ff3448 56.1%,#fd1928 72%,#cd0711 87.3%,#b20007 100%)"></i><i style="left:170px;top:348px;width:311px;height:2px;background:linear-gradient(90deg,#00d8ff 0%,#03d7ff 1.3%,#61d3ff 11.6%,#c4cfff 20.6%,#fdccff 25.2%,#ff99c2 31%,#ff7294 37.4%,#ff4e69 46.5%,#ff2d43 59.4%,#fd1729 72.9%,#cc0612 88.4%,#b40008 100%)"></i><i style="left:169px;top:350px;width:308px;height:2px;background:linear-gradient(90deg,#00d3ff 0%,#02d3ff 1.3%,#65ceff 12.3%,#c7c9ff 21.4%,#ffc6ff 26%,#ff9dcd 30.5%,#ff749b 37%,#ff5171 45.5%,#ff3049 57.8%,#fe172b 73.4%,#cd0513 89%,#b70009 100%)"></i><i style="left:169px;top:352px;width:303px;height:2px;background:linear-gradient(90deg,#00ceff 0%,#04ceff 1.3%,#66c8ff 12.6%,#c8c3ff 21.9%,#ffbffe 26.5%,#ff97cd 31.1%,#ff709c 37.7%,#ff4e71 46.4%,#ff2e4a 58.9%,#ff162c 74.2%,#ce0514 90.1%,#b9000b 100%)"></i><i style="left:168px;top:354px;width:300px;height:2px;background:linear-gradient(90deg,#00caff 0%,#03c9ff 1.3%,#64c3ff 12.7%,#cbbdff 22.7%,#fabaff 26.7%,#ffb1f4 28%,#ff89c0 33.3%,#ff6390 40.7%,#ff4165 50.7%,#ff223f 65.3%,#fd142d 75.3%,#cd0414 91.3%,#bc000c 100%)"></i><i style="left:167px;top:356px;width:296px;height:2px;background:linear-gradient(90deg,#00c5ff 0%,#02c5ff 1.4%,#61beff 12.8%,#c7b8ff 23%,#feb4ff 27.7%,#ff8bc9 33.1%,#ff679a 39.9%,#ff456f 49.3%,#ff2747 62.8%,#fe132e 76.4%,#cd0315 92.6%,#bf000e 100%)"></i><i style="left:167px;top:358px;width:292px;height:2px;background:linear-gradient(90deg,#00c1ff 0%,#03c0ff 1.4%,#62b9ff 13%,#c7b3ff 23.3%,#fdafff 28.1%,#ff83c4 34.2%,#ff5e94 41.8%,#ff3d68 52.1%,#ff2142 66.4%,#fd122f 77.4%,#cd0215 93.8%,#c10010 100%)"></i><i style="left:166px;top:360px;width:289px;height:2px;background:linear-gradient(90deg,#00bcff 0%,#03bcff 1.4%,#67b4ff 13.9%,#ccadff 24.3%,#faaaff 28.5%,#ffa1f4 29.9%,#ff7cc2 35.4%,#ff5992 43.1%,#ff3a67 53.5%,#ff1d41 68.8%,#fc1130 78.5%,#cc0116 95.1%,#c40011 100%)"></i><i style="left:165px;top:362px;width:285px;height:2px;background:linear-gradient(90deg,#00b8ff 0%,#02b7ff 1.4%,#65b0ff 14.1%,#c9a8ff 24.6%,#fea4ff 29.6%,#ff7ac5 35.9%,#ff5795 43.7%,#ff386a 54.2%,#ff1d44 69%,#fd1031 79.6%,#cc0117 96.5%,#c70014 100%)"></i><i style="left:165px;top:364px;width:281px;height:2px;background:linear-gradient(90deg,#00b4ff 0%,#03b3ff 1.4%,#66abff 14.3%,#c9a3ff 25%,#fd9eff 30%,#ff76c6 36.4%,#ff5496 44.3%,#ff366a 55%,#ff1b44 70%,#fe0f33 80%,#ce0018 97.1%,#ca0015 100%)"></i><i style="left:164px;top:366px;width:277px;height:2px;background:linear-gradient(90deg,#00b0ff 0%,#03afff 1.4%,#64a6ff 14.5%,#cc9dff 26.1%,#ff98fd 31.2%,#ff74c9 37%,#ff5398 44.9%,#ff346c 55.8%,#ff1a46 71%,#fc0d33 81.9%,#d0001a 97.8%,#cd0018 100%)"></i><i style="left:163px;top:368px;width:274px;height:2px;background:linear-gradient(90deg,#00acff 0%,#02abff 1.5%,#61a2ff 14.6%,#c899ff 26.3%,#fb94ff 31.4%,#ff88ed 33.6%,#ff65b9 40.1%,#ff468b 48.9%,#ff2960 61.3%,#ff103b 78.8%,#fb0c33 83.2%,#d2001b 98.5%,#d0001a 100%)"></i><i style="left:163px;top:370px;width:270px;height:2px;background:linear-gradient(90deg,#00a8ff 0%,#03a7ff 1.5%,#629eff 14.8%,#c894ff 26.7%,#fb8fff 31.9%,#ff88f4 33.3%,#ff65bf 40%,#ff458f 48.9%,#ff2a65 60.7%,#ff113f 77.8%,#fd0b36 83.7%,#d5001e 98.5%,#d3001c 100%)"></i><i style="left:162px;top:372px;width:266px;height:2px;background:linear-gradient(90deg,#00a4ff 0%,#07a2ff 2.3%,#69f 15.8%,#cc8fff 27.8%,#fe8aff 33.1%,#ff66c7 39.8%,#ff4898 48.1%,#ff2d6d 59.4%,#ff1446 75.9%,#fd0a37 85%,#d80020 98.5%,#d6001f 100%)"></i><i style="left:161px;top:374px;width:263px;height:2px;background:linear-gradient(90deg,#00a0ff 0%,#029fff 1.5%,#6595ff 16%,#c98bff 28.2%,#fb85ff 33.6%,#ff7aed 35.9%,#ff5aba 42.7%,#ff3d8c 51.9%,#ff2362 64.9%,#ff0c3d 83.2%,#fd0938 86.3%,#da0022 99.2%,#d90021 100%)"></i><i style="left:161px;top:376px;width:258px;height:2px;background:linear-gradient(90deg,#009cff 0%,#039bff 1.6%,#6591ff 16.3%,#c886ff 28.7%,#ff7ffd 34.9%,#ff61cb 41.1%,#ff449c 49.6%,#ff2970 61.2%,#ff1148 78.3%,#fd0839 87.6%,#de0025 99.2%,#dd0024 100%)"></i><i style="left:160px;top:378px;width:255px;height:2px;background:linear-gradient(90deg,#09f 0%,#0797ff 2.4%,#698cff 17.3%,#cd81ff 29.9%,#fe7cff 35.4%,#ff5bc8 42.5%,#ff3f9a 51.2%,#ff256d 63.8%,#ff0e47 81.1%,#fc063a 89%,#e20028 99.2%,#e00027 100%)"></i><i style="left:159px;top:380px;width:252px;height:2px;background:linear-gradient(90deg,#0095ff 0%,#0693ff 2.4%,#6788ff 17.5%,#cf7cff 31%,#ff76fe 36.5%,#ff57c7 43.7%,#ff3a96 53.2%,#ff216b 65.9%,#ff0b45 84.1%,#fe063c 89.7%,#e5002b 99.2%,#e4002a 100%)"></i><i style="left:159px;top:382px;width:247px;height:2px;background:linear-gradient(90deg,#0091ff 0%,#0390ff 1.6%,#6385ff 17.1%,#ca79ff 30.9%,#ff71fd 37.4%,#ff53c7 44.7%,#ff3796 54.5%,#ff1f6b 67.5%,#ff0945 86.2%,#fc043b 91.9%,#e8002d 100%)"></i><i style="left:158px;top:384px;width:244px;height:2px;background:linear-gradient(90deg,#008eff 0%,#078cff 2.5%,#6b80ff 18.9%,#d373ff 32.8%,#fc6eff 37.7%,#ff5de1 41.8%,#ff42b0 50%,#ff2881 61.5%,#ff1259 77%,#fd033e 92.6%,#ec0030 100%)"></i><i style="left:157px;top:386px;width:240px;height:2px;background:linear-gradient(90deg,#008bff 0%,#0689ff 2.5%,#697cff 19.2%,#cf70ff 33.3%,#ff6aff 39.2%,#ff4dc9 46.7%,#ff3299 56.7%,#ff1b6e 70%,#ff0647 89.2%,#fe023f 94.2%,#f00034 100%)"></i><i style="left:157px;top:388px;width:236px;height:2px;background:linear-gradient(90deg,#0087ff 0%,#0386ff 1.7%,#6579ff 18.6%,#c96cff 33.1%,#ff65ff 39.8%,#ff49ca 47.5%,#ff3099 57.6%,#ff196f 71.2%,#ff0548 90.7%,#fd0140 95.8%,#f40038 100%)"></i><i style="left:156px;top:390px;width:233px;height:2px;background:linear-gradient(90deg,#0084ff 0%,#0782ff 2.6%,#6975ff 19.8%,#cd68ff 34.5%,#fc61ff 40.5%,#ff44c7 49.1%,#ff2c98 59.5%,#ff156b 74.1%,#ff0145 94.8%,#f8003c 100%)"></i><i style="left:155px;top:392px;width:229px;height:2px;background:linear-gradient(90deg,#0081ff 0%,#067fff 2.6%,#6772ff 20.2%,#ca64ff 35.1%,#ff5dff 42.1%,#ff42ca 50%,#ff2a9a 60.5%,#ff156f 74.6%,#ff0249 94.7%,#fd0040 100%)"></i><i style="left:155px;top:394px;width:225px;height:2px;background:linear-gradient(90deg,#007dff 0%,#037cff 1.8%,#636fff 19.6%,#ca60ff 35.7%,#ff59ff 42.9%,#ff3fcb 50.9%,#ff289b 61.6%,#ff1370 75.9%,#ff0049 96.4%,#f04 100%)"></i><i style="left:154px;top:396px;width:221px;height:2px;background:linear-gradient(90deg,#007aff 0%,#0778ff 2.7%,#6b6aff 21.8%,#d45bff 38.2%,#fb55ff 43.6%,#ff4def 46.4%,#ff35bb 55.5%,#ff1f8e 67.3%,#ff0b64 83.6%,#ff0048 100%)"></i><i style="left:153px;top:398px;width:218px;height:2px;background:linear-gradient(90deg,#07f 0%,#0675ff 2.8%,#6967ff 22%,#cf58ff 38.5%,#fd51ff 45%,#ff35c4 55%,#ff1f94 67%,#ff0b68 83.5%,#ff004b 100%)"></i><i style="left:153px;top:400px;width:214px;height:2px;background:linear-gradient(90deg,#0074ff 0%,#0772ff 2.8%,#6a63ff 22.4%,#cf54ff 39.3%,#fc4dff 45.8%,#ff31c0 57%,#ff1c92 69.2%,#ff0867 86%,#ff004f 100%)"></i><i style="left:152px;top:402px;width:210px;height:2px;background:linear-gradient(90deg,#0071ff 0%,#076fff 2.9%,#6860ff 22.9%,#cc51ff 40%,#ff49ff 47.6%,#f3c 56.2%,#ff1e9d 67.6%,#ff0b71 83.8%,#ff0053 100%)"></i><i style="left:151px;top:404px;width:207px;height:2px;background:linear-gradient(90deg,#006eff 0%,#066cff 2.9%,#675dff 23.3%,#cb4dff 40.8%,#fd46ff 48.5%,#ff2cc5 59.2%,#ff1895 71.8%,#ff066a 89.3%,#ff0057 100%)"></i><i style="left:151px;top:406px;width:202px;height:2px;background:linear-gradient(90deg,#006bff 0%,#0769ff 3%,#675aff 23.8%,#cf49ff 42.6%,#fb42ff 49.5%,#ff3bf0 52.5%,#ff27be 62.4%,#ff138e 76.2%,#ff0164 95%,#ff005c 100%)"></i><i style="left:150px;top:408px;width:199px;height:2px;background:linear-gradient(90deg,#0068ff 0%,#0766ff 3%,#6b56ff 25.3%,#d445ff 44.4%,#ff3efe 51.5%,#ff28c8 61.6%,#ff1498 74.7%,#ff036c 92.9%,#ff0060 100%)"></i><i style="left:149px;top:410px;width:196px;height:2px;background:linear-gradient(90deg,#0065ff 0%,#0663ff 3.1%,#6853ff 25.5%,#cf42ff 44.9%,#ff3afd 53.1%,#ff25c8 63.3%,#ff1298 76.5%,#ff016d 94.9%,#ff0064 100%)"></i><i style="left:149px;top:412px;width:191px;height:2px;background:linear-gradient(90deg,#0062ff 0%,#0760ff 3.2%,#6a50ff 26.3%,#d13fff 46.3%,#fc37ff 53.7%,#ff29da 61.1%,#ff15a8 73.7%,#ff047b 90.5%,#ff0069 100%)"></i><i style="left:148px;top:414px;width:188px;height:2px;background:linear-gradient(90deg,#0060ff 0%,#065eff 3.2%,#674dff 26.6%,#cd3cff 46.8%,#fd34ff 55.3%,#ff1dc2 68.1%,#ff0b92 83%,#ff006f 98.9%,#ff006d 100%)"></i><i style="left:147px;top:416px;width:184px;height:2px;background:linear-gradient(90deg,#005dff 0%,#065bff 3.3%,#664bff 27.2%,#ca39ff 47.8%,#ff30fe 57.6%,#ff1dca 68.5%,#ff0c9a 82.6%,#ff0073 100%)"></i><i style="left:147px;top:418px;width:180px;height:2px;background:linear-gradient(90deg,#005aff 0%,#0758ff 3.3%,#6b47ff 28.9%,#d035ff 50%,#ff2cfe 58.9%,#ff1aca 70%,#ff0a9b 84.4%,#ff0078 100%)"></i><i style="left:146px;top:420px;width:177px;height:2px;background:linear-gradient(90deg,#0058ff 0%,#0656ff 3.4%,#6a44ff 29.5%,#ce32ff 51.1%,#fe29ff 60.2%,#ff16c7 72.7%,#ff0696 88.6%,#ff007d 100%)"></i><i style="left:145px;top:422px;width:173px;height:2px;background:linear-gradient(90deg,#05f 0%,#0653ff 3.5%,#6941ff 30.2%,#d12eff 53.5%,#ff25fd 62.8%,#ff14ca 74.4%,#ff0498 90.7%,#ff0083 100%)"></i><i style="left:145px;top:424px;width:169px;height:2px;background:linear-gradient(90deg,#0053ff 0%,#0750ff 3.6%,#693eff 31%,#d12bff 54.8%,#ff22fd 64.3%,#ff12ca 76.2%,#ff0299 92.9%,#ff0089 100%)"></i><i style="left:144px;top:426px;width:165px;height:2px;background:linear-gradient(90deg,#0050ff 0%,#064eff 3.7%,#683cff 31.7%,#ce29ff 56.1%,#fd20ff 65.9%,#ff0dc4 80.5%,#ff0095 97.6%,#ff0090 100%)"></i><i style="left:143px;top:428px;width:162px;height:2px;background:linear-gradient(90deg,#004eff 0%,#064cff 3.7%,#663aff 32.1%,#ca26ff 56.8%,#fe1dff 67.9%,#ff0bc5 82.7%,#f09 98.8%,#ff0096 100%)"></i><i style="left:143px;top:430px;width:158px;height:2px;background:linear-gradient(90deg,#004bff 0%,#0749ff 3.8%,#6b36ff 34.2%,#d022ff 59.5%,#fe1aff 69.6%,#ff09c5 84.8%,#ff009f 98.7%,#ff009c 100%)"></i><i style="left:142px;top:432px;width:154px;height:2px;background:linear-gradient(90deg,#0049ff 0%,#0647ff 3.9%,#6933ff 35.1%,#d21fff 62.3%,#ff16fe 72.7%,#ff07c8 87%,#ff00a4 100%)"></i><i style="left:141px;top:434px;width:151px;height:2px;background:linear-gradient(90deg,#0047ff 0%,#0645ff 4%,#6831ff 36%,#d11cff 64%,#ff13ff 74.7%,#ff04c9 89.3%,#ff00ab 100%)"></i><i style="left:141px;top:436px;width:146px;height:2px;background:linear-gradient(90deg,#04f 0%,#0742ff 4.1%,#682eff 37%,#d01aff 65.8%,#fd11ff 76.7%,#ff01c3 94.5%,#ff00b4 100%)"></i><i style="left:140px;top:438px;width:143px;height:2px;background:linear-gradient(90deg,#0042ff 0%,#0a3fff 5.6%,#6c2bff 39.4%,#d416ff 69%,#ff0dfc 80.3%,#ff00c8 95.8%,#ff00bc 100%)"></i><i style="left:139px;top:440px;width:140px;height:2px;background:linear-gradient(90deg,#0040ff 0%,#053eff 4.3%,#6a29ff 40%,#d014ff 70%,#ff0afc 82.9%,#f0c 97.1%,#ff00c4 100%)"></i><i style="left:139px;top:442px;width:135px;height:2px;background:linear-gradient(90deg,#003dff 0%,#073bff 4.5%,#6727ff 40.3%,#cc12ff 71.6%,#fe08ff 85.1%,#ff00d3 98.5%,#ff00cf 100%)"></i><i style="left:138px;top:444px;width:132px;height:2px;background:linear-gradient(90deg,#003bff 0%,#0a38ff 6.1%,#6d23ff 43.9%,#d20eff 75.8%,#fe05ff 87.9%,#ff00d8 100%)"></i><i style="left:137px;top:446px;width:128px;height:2px;background:linear-gradient(90deg,#0039ff 0%,#0537ff 4.7%,#6722ff 43.8%,#d00cff 78.1%,#ff02fd 92.2%,#ff00e4 100%)"></i><i style="left:136px;top:448px;width:125px;height:2px;background:linear-gradient(90deg,#0037ff 0%,#0535ff 4.8%,#6720ff 45.2%,#cf0aff 80.6%,#ff00fe 95.2%,#f0e 100%)"></i><i style="left:136px;top:450px;width:121px;height:2px;background:linear-gradient(90deg,#0035ff 0%,#0932ff 6.7%,#6c1dff 48.3%,#d506ff 85%,#ff00fe 98.3%,#ff00f8 100%)"></i><i style="left:135px;top:452px;width:117px;height:2px;background:linear-gradient(90deg,#03f 0%,#0531ff 5.2%,#661cff 48.3%,#cd05ff 86.2%,#f800ff 100%)"></i><i style="left:134px;top:454px;width:114px;height:2px;background:linear-gradient(90deg,#0031ff 0%,#052fff 5.3%,#6819ff 50.9%,#cd02ff 89.5%,#ec00ff 100%)"></i><i style="left:134px;top:456px;width:110px;height:2px;background:linear-gradient(90deg,#002fff 0%,#092cff 7.3%,#6d16ff 54.5%,#d200ff 94.5%,#e200ff 100%)"></i><i style="left:133px;top:458px;width:106px;height:2px;background:linear-gradient(90deg,#002dff 0%,#052bff 5.7%,#6715ff 54.7%,#d000ff 98.1%,#d500ff 100%)"></i><i style="left:132px;top:460px;width:103px;height:2px;background:linear-gradient(90deg,#002bff 0%,#0529ff 5.9%,#6712ff 56.9%,#c600ff 98%,#cb00ff 100%)"></i><i style="left:132px;top:462px;width:98px;height:2px;background:linear-gradient(90deg,#0029ff 0%,#0926ff 8.2%,#6a0fff 61.2%,#ba00ff 98%,#bf00ff 100%)"></i><i style="left:131px;top:464px;width:95px;height:2px;background:linear-gradient(90deg,#0027ff 0%,#0924ff 8.5%,#6a0dff 63.8%,#b100ff 97.9%,#b600ff 100%)"></i><i style="left:130px;top:466px;width:92px;height:2px;background:linear-gradient(90deg,#0025ff 0%,#0523ff 6.5%,#670cff 65.2%,#a800ff 97.8%,#ac00ff 100%)"></i><i style="left:130px;top:468px;width:87px;height:2px;background:linear-gradient(90deg,#0023ff 0%,#0920ff 9.3%,#6e08ff 72.1%,#a100ff 100%)"></i><i style="left:129px;top:470px;width:84px;height:2px;background:linear-gradient(90deg,#0021ff 0%,#081eff 9.5%,#6b07ff 73.8%,#90f 100%)"></i><i style="left:128px;top:472px;width:80px;height:2px;background:linear-gradient(90deg,#0020ff 0%,#041dff 7.5%,#6506ff 75%,#8e00ff 100%)"></i><i style="left:128px;top:474px;width:76px;height:2px;background:linear-gradient(90deg,#001eff 0%,#091aff 10.5%,#6a03ff 81.6%,#8600ff 100%)"></i><i style="left:127px;top:476px;width:73px;height:2px;background:linear-gradient(90deg,#001cff 0%,#0819ff 11.1%,#6a01ff 86.1%,#7f00ff 100%)"></i><i style="left:126px;top:478px;width:69px;height:2px;background:linear-gradient(90deg,#001aff 0%,#0518ff 8.8%,#6500ff 88.2%,#7500ff 100%)"></i><i style="left:126px;top:480px;width:65px;height:2px;background:linear-gradient(90deg,#0018ff 0%,#0c14ff 15.6%,#6a00ff 96.9%,#6e00ff 100%)"></i><i style="left:125px;top:482px;width:61px;height:2px;background:linear-gradient(90deg,#0017ff 0%,#0814ff 13.3%,#6100ff 96.7%,#6500ff 100%)"></i><i style="left:124px;top:484px;width:58px;height:2px;background:linear-gradient(90deg,#0015ff 0%,#0413ff 10.3%,#5a00ff 96.6%,#5e00ff 100%)"></i><i style="left:124px;top:486px;width:54px;height:2px;background:linear-gradient(90deg,#0013ff 0%,#0c0fff 18.5%,#5300ff 96.3%,#5700ff 100%)"></i><i style="left:123px;top:488px;width:50px;height:2px;background:linear-gradient(90deg,#0012ff 0%,#080fff 16%,#4e00ff 100%)"></i><i style="left:122px;top:490px;width:47px;height:2px;background:linear-gradient(90deg,#0010ff 0%,#080dff 17.4%,#40f 95.7%,#4800ff 100%)"></i><i style="left:122px;top:492px;width:42px;height:2px;background:linear-gradient(90deg,#000eff 0%,#0b0aff 23.8%,#4000ff 100%)"></i><i style="left:121px;top:494px;width:39px;height:2px;background:linear-gradient(90deg,#000dff 0%,#080aff 21.1%,#3a00ff 100%)"></i><i style="left:120px;top:496px;width:36px;height:2px;background:linear-gradient(90deg,#000bff 0%,#0708ff 22.2%,#3400ff 100%)"></i><i style="left:120px;top:498px;width:31px;height:2px;background:linear-gradient(90deg,#0009ff 0%,#0c05ff 33.3%,#2c00ff 100%)"></i><i style="left:119px;top:500px;width:28px;height:2px;background:linear-gradient(90deg,#0008ff 0%,#0805ff 28.6%,#2700ff 100%)"></i><i style="left:118px;top:502px;width:24px;height:2px;background:linear-gradient(90deg,#0007ff 0%,#0704ff 33.3%,#2000ff 100%)"></i><i style="left:118px;top:504px;width:20px;height:2px;background:linear-gradient(90deg,#0005ff 0%,#0e00ff 60%,#1a00ff 100%)"></i><i style="left:117px;top:506px;width:17px;height:2px;background:linear-gradient(90deg,#0004ff 0%,#0800ff 50%,#1500ff 100%)"></i><i style="left:117px;top:508px;width:12px;height:2px;background:linear-gradient(90deg,#0002ff 0%,#0f00ff 100%)"></i><i style="left:117px;top:510px;width:8px;height:2px;background:linear-gradient(90deg,#00f 0%,#0a00ff 100%)"></i></div></div><svg style="left:1241px;top:137px" width="668" height="550" viewBox="1241 137 668 550"><g fill="none" stroke="#fff" stroke-width="1.4"><rect x="1531.9" y="463.2" width="15.6" height="15.6"/><rect x="1585.4" y="463.2" width="15.6" height="15.6"/><rect x="1632.6" y="463.2" width="15.6" height="15.6"/><rect x="1684.2" y="463.2" width="15.6" height="15.6"/><rect x="1741.7" y="463.2" width="15.6" height="15.6"/><rect x="1479.6" y="427.0" width="15.6" height="15.6"/><rect x="1476.6" y="393.2" width="15.6" height="15.6"/><rect x="1475.2" y="357.7" width="15.6" height="15.6"/><rect x="1473.7" y="323.6" width="15.6" height="15.6"/><rect x="1470.7" y="285.2" width="15.6" height="15.6"/><rect x="1455.7" y="498.2" width="15.6" height="15.6"/><rect x="1428.7" y="534.0" width="15.6" height="15.6"/><rect x="1405.2" y="566.5" width="15.6" height="15.6"/><rect x="1379.7" y="600.8" width="15.6" height="15.6"/><rect x="1351.7" y="639.3" width="15.6" height="15.6"/><rect x="1466.7" y="463.2" width="15.6" height="15.6"/><rect x="1453.0" y="463.2" width="15.6" height="15.6"/><rect x="1438.9" y="463.2" width="15.6" height="15.6"/><rect x="1424.9" y="463.2" width="15.6" height="15.6"/><rect x="1410.5" y="463.2" width="15.6" height="15.6"/><rect x="1482.2" y="486.7" width="15.6" height="15.6"/><rect x="1483.7" y="510.0" width="15.6" height="15.6"/><rect x="1484.9" y="531.2" width="15.6" height="15.6"/><rect x="1486.5" y="553.4" width="15.6" height="15.6"/><rect x="1487.7" y="577.2" width="15.6" height="15.6"/><rect x="1497.7" y="439.2" width="15.6" height="15.6"/><rect x="1515.8" y="415.2" width="15.6" height="15.6"/><rect x="1532.8" y="393.2" width="15.6" height="15.6"/><rect x="1548.2" y="372.2" width="15.6" height="15.6"/><rect x="1566.7" y="347.2" width="15.6" height="15.6"/></g><rect x="1480.8" y="463.3" width="15.4" height="15.4" fill="none" stroke="#000" stroke-width="1.6"/><g stroke="#000" stroke-width="1.2"><circle cx="1530.5" cy="465.0" r="5.1" fill="rgb(188, 156, 156)"/><circle cx="1583.7" cy="463.0" r="5.1" fill="rgb(190, 132, 132)"/><circle cx="1633.3" cy="463.0" r="5.1" fill="rgb(193, 105, 105)"/><circle cx="1690.2" cy="463.0" r="5.1" fill="rgb(195, 70, 70)"/><circle cx="1745.6" cy="462.8" r="5.1" fill="rgb(198, 0, 0)"/><circle cx="1484.6" cy="427.9" r="5.1" fill="rgb(156, 188, 156)"/><circle cx="1483.0" cy="391.0" r="5.1" fill="rgb(132, 190, 132)"/><circle cx="1483.0" cy="354.8" r="5.1" fill="rgb(105, 193, 105)"/><circle cx="1483.0" cy="318.1" r="5.1" fill="rgb(70, 195, 70)"/><circle cx="1481.5" cy="280.9" r="5.1" fill="rgb(0, 198, 0)"/><circle cx="1459.5" cy="502.0" r="5.1" fill="rgb(156, 156, 188)"/><circle cx="1435.5" cy="536.8" r="5.1" fill="rgb(132, 132, 190)"/><circle cx="1410.3" cy="572.8" r="5.1" fill="rgb(105, 105, 193)"/><circle cx="1386.4" cy="609.6" r="5.1" fill="rgb(70, 70, 195)"/><circle cx="1360.8" cy="646.9" r="5.1" fill="rgb(0, 0, 198)"/><circle cx="1470.5" cy="465.0" r="5.1" fill="rgb(156, 188, 188)"/><circle cx="1459.3" cy="465.0" r="5.1" fill="rgb(132, 190, 190)"/><circle cx="1446.3" cy="465.0" r="5.1" fill="rgb(105, 193, 193)"/><circle cx="1434.0" cy="465.0" r="5.1" fill="rgb(70, 195, 195)"/><circle cx="1421.2" cy="465.0" r="5.1" fill="rgb(0, 198, 198)"/><circle cx="1484.5" cy="488.5" r="5.1" fill="rgb(188, 156, 188)"/><circle cx="1484.5" cy="513.8" r="5.1" fill="rgb(190, 132, 190)"/><circle cx="1484.5" cy="536.0" r="5.1" fill="rgb(193, 105, 193)"/><circle cx="1484.5" cy="563.0" r="5.1" fill="rgb(195, 70, 195)"/><circle cx="1485.5" cy="587.8" r="5.1" fill="rgb(198, 0, 198)"/><circle cx="1501.6" cy="439.9" r="5.1" fill="rgb(188, 188, 156)"/><circle cx="1518.5" cy="414.4" r="5.1" fill="rgb(190, 190, 132)"/><circle cx="1535.1" cy="391.0" r="5.1" fill="rgb(193, 193, 105)"/><circle cx="1550.5" cy="365.3" r="5.1" fill="rgb(195, 195, 70)"/><circle cx="1568.6" cy="339.7" r="5.1" fill="rgb(198, 198, 0)"/><circle cx="1483" cy="465.8" r="5.1" fill="#fff"/></g></svg><svg style="left:1204px;top:130px" width="716" height="600" viewBox="1204 130 716 600"><path d="M1234.5 688.0h5.5M1240.9 688v5.8M1234.5 622.4h5.5M1320.3 688v5.8M1234.5 556.8h5.5M1399.7 688v5.8M1234.5 491.2h5.5M1479.2 688v5.8M1234.5 425.6h5.5M1558.6 688v5.8M1234.5 360.0h5.5M1638.0 688v5.8M1234.5 294.4h5.5M1717.4 688v5.8M1234.5 228.8h5.5M1796.8 688v5.8M1234.5 163.2h5.5M1876.3 688v5.8" stroke="#ccc" stroke-width="1.3" fill="none"/></svg><div style="left:1717.5px;top:135.3px;width:192.5px;height:202.9px;overflow:hidden;background:#999;border:1px solid #a0a0a0" class="ins"><div class="cl"><i style="left:-0.5px;top:0px;width:191px;height:4px;background:linear-gradient(90deg,#6a9900 0%,#999700 83.2%,#998d00 100%)"></i><i style="left:-0.5px;top:4px;width:191px;height:4px;background:linear-gradient(90deg,#6a9900 0%,#999700 81.1%,#998c00 100%)"></i><i style="left:-0.5px;top:8px;width:191px;height:4px;background:linear-gradient(90deg,#6b9900 0%,#999700 80%,#998c00 100%)"></i><i style="left:-0.5px;top:12px;width:191px;height:4px;background:linear-gradient(90deg,#6b9900 0%,#999700 78.9%,#998b00 100%)"></i><i style="left:-0.5px;top:16px;width:191px;height:4px;background:linear-gradient(90deg,#6c9900 0%,#999700 77.9%,#998a00 100%)"></i><i style="left:-0.5px;top:20px;width:191px;height:4px;background:linear-gradient(90deg,#6d9900 0%,#999700 76.8%,#998a00 100%)"></i><i style="left:-0.5px;top:24px;width:191px;height:4px;background:linear-gradient(90deg,#6d9900 0%,#999700 75.8%,#998900 100%)"></i><i style="left:-0.5px;top:28px;width:191px;height:4px;background:linear-gradient(90deg,#6e9901 0%,#999800 73.7%,#980 100%)"></i><i style="left:-0.5px;top:32px;width:191px;height:4px;background:linear-gradient(90deg,#6e9901 0%,#999700 72.6%,#980 100%)"></i><i style="left:-0.5px;top:36px;width:191px;height:4px;background:linear-gradient(90deg,#6f9901 0%,#999700 71.6%,#998700 100%)"></i><i style="left:-0.5px;top:40px;width:191px;height:4px;background:linear-gradient(90deg,#709902 0%,#999700 70.5%,#998600 100%)"></i><i style="left:-0.5px;top:44px;width:191px;height:4px;background:linear-gradient(90deg,#709902 0%,#999700 69.5%,#998500 100%)"></i><i style="left:-0.5px;top:48px;width:191px;height:4px;background:linear-gradient(90deg,#719902 0%,#999700 68.4%,#998500 100%)"></i><i style="left:-0.5px;top:52px;width:191px;height:4px;background:linear-gradient(90deg,#719903 0%,#999700 67.4%,#998400 100%)"></i><i style="left:-0.5px;top:56px;width:191px;height:4px;background:linear-gradient(90deg,#729903 0%,#999800 65.3%,#998300 100%)"></i><i style="left:-0.5px;top:60px;width:191px;height:4px;background:linear-gradient(90deg,#739903 0%,#999800 63.2%,#998300 100%)"></i><i style="left:-0.5px;top:64px;width:191px;height:4px;background:linear-gradient(90deg,#739904 0%,#990 61.1%,#998200 100%)"></i><i style="left:-0.5px;top:68px;width:191px;height:4px;background:linear-gradient(90deg,#749904 0%,#999800 61.1%,#998200 100%)"></i><i style="left:-0.5px;top:72px;width:191px;height:4px;background:linear-gradient(90deg,#759904 0%,#999700 61.1%,#998100 100%)"></i><i style="left:-0.5px;top:76px;width:191px;height:4px;background:linear-gradient(90deg,#759905 0%,#999700 60%,#998000 100%)"></i><i style="left:-0.5px;top:80px;width:191px;height:4px;background:linear-gradient(90deg,#769905 0%,#999700 58.9%,#998000 100%)"></i><i style="left:-0.5px;top:84px;width:191px;height:4px;background:linear-gradient(90deg,#779905 0%,#999800 56.8%,#997f00 100%)"></i><i style="left:-0.5px;top:88px;width:191px;height:4px;background:linear-gradient(90deg,#779906 0%,#999700 55.8%,#997e00 100%)"></i><i style="left:-0.5px;top:92px;width:191px;height:4px;background:linear-gradient(90deg,#789906 0%,#999700 54.7%,#997e00 100%)"></i><i style="left:-0.5px;top:96px;width:191px;height:4px;background:linear-gradient(90deg,#789907 0%,#999700 53.7%,#997d00 100%)"></i><i style="left:-0.5px;top:100px;width:191px;height:4px;background:linear-gradient(90deg,#799907 0%,#999700 52.6%,#997c00 100%)"></i><i style="left:-0.5px;top:104px;width:191px;height:4px;background:linear-gradient(90deg,#7a9907 0%,#999700 51.6%,#997c00 100%)"></i><i style="left:-0.5px;top:108px;width:191px;height:4px;background:linear-gradient(90deg,#7a9908 0%,#999701 50.5%,#997b00 100%)"></i><i style="left:-0.5px;top:112px;width:191px;height:4px;background:linear-gradient(90deg,#7b9908 0%,#999701 48.4%,#997a00 100%)"></i><i style="left:-0.5px;top:116px;width:191px;height:4px;background:linear-gradient(90deg,#7c9908 0%,#999702 47.4%,#997a00 100%)"></i><i style="left:-0.5px;top:120px;width:191px;height:4px;background:linear-gradient(90deg,#7d9909 0%,#999702 46.3%,#997900 100%)"></i><i style="left:-0.5px;top:124px;width:191px;height:4px;background:linear-gradient(90deg,#7d9909 0%,#999703 45.3%,#997900 100%)"></i><i style="left:-0.5px;top:128px;width:191px;height:4px;background:linear-gradient(90deg,#7e9909 0%,#999703 44.2%,#997800 100%)"></i><i style="left:-0.5px;top:132px;width:191px;height:4px;background:linear-gradient(90deg,#7f990a 0%,#999704 43.2%,#970 100%)"></i><i style="left:-0.5px;top:136px;width:191px;height:4px;background:linear-gradient(90deg,#7f990a 0%,#999704 42.1%,#970 98.9%,#970 100%)"></i><i style="left:-0.5px;top:140px;width:191px;height:4px;background:linear-gradient(90deg,#80990b 0%,#999705 41.1%,#970 98.9%,#997600 100%)"></i><i style="left:-0.5px;top:144px;width:191px;height:4px;background:linear-gradient(90deg,#81990b 0%,#999706 38.9%,#997500 100%)"></i><i style="left:-0.5px;top:148px;width:191px;height:4px;background:linear-gradient(90deg,#81990b 0%,#999706 37.9%,#997500 100%)"></i><i style="left:-0.5px;top:152px;width:191px;height:4px;background:linear-gradient(90deg,#82990c 0%,#999707 36.8%,#997400 100%)"></i><i style="left:-0.5px;top:156px;width:191px;height:4px;background:linear-gradient(90deg,#83990c 0%,#999707 35.8%,#997400 100%)"></i><i style="left:-0.5px;top:160px;width:191px;height:4px;background:linear-gradient(90deg,#84990d 0%,#999708 34.7%,#997300 100%)"></i><i style="left:-0.5px;top:164px;width:191px;height:4px;background:linear-gradient(90deg,#84990d 0%,#999708 33.7%,#997200 100%)"></i><i style="left:-0.5px;top:168px;width:191px;height:4px;background:linear-gradient(90deg,#85990d 0%,#999709 32.6%,#997200 100%)"></i><i style="left:-0.5px;top:172px;width:191px;height:4px;background:linear-gradient(90deg,#86990e 0%,#99970a 30.5%,#997300 96.8%,#997100 100%)"></i><i style="left:-0.5px;top:176px;width:191px;height:4px;background:linear-gradient(90deg,#87990e 0%,#99970a 29.5%,#997200 95.8%,#997100 100%)"></i><i style="left:-0.5px;top:180px;width:191px;height:4px;background:linear-gradient(90deg,#87990f 0%,#99970b 28.4%,#997201 94.7%,#997000 100%)"></i><i style="left:-0.5px;top:184px;width:191px;height:4px;background:linear-gradient(90deg,#88990f 0%,#99970b 27.4%,#997201 93.7%,#996f00 100%)"></i><i style="left:-0.5px;top:188px;width:191px;height:4px;background:linear-gradient(90deg,#89990f 0%,#99970c 26.3%,#997202 92.6%,#996f01 100%)"></i><i style="left:-0.5px;top:192px;width:191px;height:4px;background:linear-gradient(90deg,#8a9910 0%,#99970c 25.3%,#997202 91.6%,#996e01 100%)"></i><i style="left:-0.5px;top:196px;width:191px;height:4px;background:linear-gradient(90deg,#8a9910 0%,#99970d 24.2%,#997202 90.5%,#996e01 100%)"></i><i style="left:-0.5px;top:200px;width:191px;height:0.9px;background:linear-gradient(90deg,#8b9910 0%,#99970d 23.2%,#997203 89.5%,#996d01 100%)"></i></div><div class="cl" style="clip-path:polygon(0 21.6px,190.5px 179.2px,190.5px 100%,0 100%)"><i style="left:-0.5px;top:20.7px;width:7px;height:4px;background:linear-gradient(90deg,#b5ff00 0%,#b9ff00 100%)"></i><i style="left:-0.5px;top:24.7px;width:12px;height:4px;background:linear-gradient(90deg,#b6ff01 0%,#bcff00 100%)"></i><i style="left:-0.5px;top:28.7px;width:16px;height:4px;background:linear-gradient(90deg,#b7ff01 0%,#bfff00 100%)"></i><i style="left:-0.5px;top:32.7px;width:21px;height:4px;background:linear-gradient(90deg,#b8ff02 0%,#c3ff00 100%)"></i><i style="left:-0.5px;top:36.7px;width:26px;height:4px;background:linear-gradient(90deg,#b9ff02 0%,#c6ff00 100%)"></i><i style="left:-0.5px;top:40.7px;width:31px;height:4px;background:linear-gradient(90deg,#baff03 0%,#caff00 100%)"></i><i style="left:-0.5px;top:44.7px;width:36px;height:4px;background:linear-gradient(90deg,#bbff04 0%,#ceff00 100%)"></i><i style="left:-0.5px;top:48.7px;width:41px;height:4px;background:linear-gradient(90deg,#bcff04 0%,#d1ff00 100%)"></i><i style="left:-0.5px;top:52.7px;width:45px;height:4px;background:linear-gradient(90deg,#bdff05 0%,#d5ff00 100%)"></i><i style="left:-0.5px;top:56.7px;width:50px;height:4px;background:linear-gradient(90deg,#beff05 0%,#d8ff00 100%)"></i><i style="left:-0.5px;top:60.7px;width:55px;height:4px;background:linear-gradient(90deg,#bfff06 0%,#dcff00 100%)"></i><i style="left:-0.5px;top:64.7px;width:60px;height:4px;background:linear-gradient(90deg,#c0ff06 0%,#e0ff00 100%)"></i><i style="left:-0.5px;top:68.7px;width:65px;height:4px;background:linear-gradient(90deg,#c1ff07 0%,#e4ff00 100%)"></i><i style="left:-0.5px;top:72.7px;width:70px;height:4px;background:linear-gradient(90deg,#c3ff07 0%,#e8ff00 100%)"></i><i style="left:-0.5px;top:76.7px;width:74px;height:4px;background:linear-gradient(90deg,#c4ff08 0%,#ebff00 100%)"></i><i style="left:-0.5px;top:80.7px;width:79px;height:4px;background:linear-gradient(90deg,#c5ff09 0%,#f0ff00 100%)"></i><i style="left:-0.5px;top:84.7px;width:84px;height:4px;background:linear-gradient(90deg,#c6ff09 0%,#f4ff00 100%)"></i><i style="left:-0.5px;top:88.7px;width:89px;height:4px;background:linear-gradient(90deg,#c7ff0a 0%,#f8ff00 100%)"></i><i style="left:-0.5px;top:92.7px;width:94px;height:4px;background:linear-gradient(90deg,#c8ff0a 0%,#fcff00 100%)"></i><i style="left:-0.5px;top:96.7px;width:99px;height:4px;background:linear-gradient(90deg,#c9ff0b 0%,#fffe00 100%)"></i><i style="left:-0.5px;top:100.7px;width:103px;height:4px;background:linear-gradient(90deg,#caff0c 0%,#fffe00 94.1%,#fffa00 100%)"></i><i style="left:-0.5px;top:104.7px;width:108px;height:4px;background:linear-gradient(90deg,#cbff0c 0%,#fffe01 87%,#fff600 100%)"></i><i style="left:-0.5px;top:108.7px;width:113px;height:4px;background:linear-gradient(90deg,#ccff0d 0%,#fffd02 82.1%,#fff200 100%)"></i><i style="left:-0.5px;top:112.7px;width:118px;height:4px;background:linear-gradient(90deg,#cdff0d 0%,#fffe03 76.3%,#fe0 100%)"></i><i style="left:-0.5px;top:116.7px;width:123px;height:4px;background:linear-gradient(90deg,#cfff0e 0%,#fffd04 72.1%,#ffea00 100%)"></i><i style="left:-0.5px;top:120.7px;width:128px;height:4px;background:linear-gradient(90deg,#d0ff0f 0%,#fffd04 67.2%,#ffe700 100%)"></i><i style="left:-0.5px;top:124.7px;width:132px;height:4px;background:linear-gradient(90deg,#d1ff0f 0%,#fffd05 63.6%,#ffe300 100%)"></i><i style="left:-0.5px;top:128.7px;width:137px;height:4px;background:linear-gradient(90deg,#d2ff10 0%,#fffe06 58.8%,#ffe000 100%)"></i><i style="left:-0.5px;top:132.7px;width:142px;height:4px;background:linear-gradient(90deg,#d3ff11 0%,#fffe07 54.9%,#ffdc00 100%)"></i><i style="left:-0.5px;top:136.7px;width:147px;height:4px;background:linear-gradient(90deg,#d4ff11 0%,#fffe08 52.1%,#ffd900 100%)"></i><i style="left:-0.5px;top:140.7px;width:152px;height:4px;background:linear-gradient(90deg,#d6ff12 0%,#fffe09 48.7%,#ffd500 100%)"></i><i style="left:-0.5px;top:144.7px;width:157px;height:4px;background:linear-gradient(90deg,#d7ff12 0%,#fffd0a 46.2%,#ffd200 100%)"></i><i style="left:-0.5px;top:148.7px;width:161px;height:4px;background:linear-gradient(90deg,#d8ff13 0%,#fffd0b 43.8%,#ffcf00 100%)"></i><i style="left:-0.5px;top:152.7px;width:166px;height:4px;background:linear-gradient(90deg,#d9ff14 0%,#fffd0c 41%,#ffcd00 98.8%,#fc0 100%)"></i><i style="left:-0.5px;top:156.7px;width:171px;height:4px;background:linear-gradient(90deg,#daff14 0%,#fffe0d 37.6%,#ffce01 92.9%,#ffc900 100%)"></i><i style="left:-0.5px;top:160.7px;width:176px;height:4px;background:linear-gradient(90deg,#dcff15 0%,#fffe0e 35.2%,#ffce02 88.6%,#ffc500 100%)"></i><i style="left:-0.5px;top:164.7px;width:181px;height:4px;background:linear-gradient(90deg,#ddff16 0%,#fffe0f 33.3%,#ffcd02 85.6%,#ffc200 100%)"></i><i style="left:-0.5px;top:168.7px;width:186px;height:4px;background:linear-gradient(90deg,#deff16 0%,#fffe0f 31.2%,#ffcd03 81.7%,#ffbf00 100%)"></i><i style="left:-0.5px;top:172.7px;width:190px;height:4px;background:linear-gradient(90deg,#dfff17 0%,#fffd10 29.5%,#ffcd04 78.9%,#ffbd00 100%)"></i><i style="left:-0.5px;top:176.7px;width:191px;height:4px;background:linear-gradient(90deg,#e1ff18 0%,#fffd11 28.4%,#ffcd04 77.9%,#fb0 100%)"></i><i style="left:-0.5px;top:180.7px;width:191px;height:4px;background:linear-gradient(90deg,#e2ff18 0%,#fffd12 27.4%,#ffcc05 76.8%,#ffba00 100%)"></i><i style="left:-0.5px;top:184.7px;width:191px;height:4px;background:linear-gradient(90deg,#e3ff19 0%,#fffe13 25.3%,#ffce06 73.7%,#ffb901 100%)"></i><i style="left:-0.5px;top:188.7px;width:191px;height:4px;background:linear-gradient(90deg,#e4ff1a 0%,#fffe14 24.2%,#ffce07 72.6%,#ffb801 100%)"></i><i style="left:-0.5px;top:192.7px;width:191px;height:4px;background:linear-gradient(90deg,#e6ff1a 0%,#fffe15 23.2%,#ffce08 71.6%,#ffb702 100%)"></i><i style="left:-0.5px;top:196.7px;width:191px;height:4px;background:linear-gradient(90deg,#e7ff1b 0%,#fffd16 22.1%,#ffcd09 70.5%,#ffb602 100%)"></i><i style="left:-0.5px;top:200.7px;width:191px;height:0.2px;background:linear-gradient(90deg,#e8ff1c 0%,#fffe17 21.1%,#ffce09 69.5%,#ffb602 100%)"></i></div></div><svg style="left:1718px;top:136px" width="192" height="202" viewBox="1718 136 192 202"><rect x="1805.2" y="228.4" width="16.6" height="16.6" fill="none" stroke="#fff" stroke-width="1.5"/><circle cx="1787.3" cy="142.2" r="5.2" fill="#d6ca00" stroke="#000" stroke-width="1.1"/></svg><div style="left:1206px;top:735.3px;width:611px;height:34px;background:linear-gradient(#363636 0,#2f2f2f 49%,#191919 50%,#131313 100%)"></div><div style="left:1206px;top:735.3px;width:20px;height:34px;background:#000"></div><div style="left:1206px;top:769.2px;width:611px;height:30.9px;background:#424242"></div><div style="left:1206px;top:769.2px;width:20px;height:30.9px;background:linear-gradient(90deg,#232323,#2e2e2e)"></div><div style="left:1206px;top:799.95px;width:611px;height:30.9px;background:#818181"></div><div style="left:1206px;top:799.95px;width:20px;height:30.9px;background:linear-gradient(90deg,#232323,#2e2e2e)"></div><div style="left:1206px;top:830.7px;width:611px;height:30.9px;background:#424242"></div><div style="left:1206px;top:830.7px;width:20px;height:30.9px;background:linear-gradient(90deg,#232323,#2e2e2e)"></div><div style="left:1206px;top:861.45px;width:611px;height:30.9px;background:#818181"></div><div style="left:1206px;top:861.45px;width:20px;height:30.9px;background:linear-gradient(90deg,#232323,#2e2e2e)"></div><div style="left:1206px;top:892.2px;width:611px;height:30.9px;background:#424242"></div><div style="left:1206px;top:892.2px;width:20px;height:30.9px;background:linear-gradient(90deg,#232323,#2e2e2e)"></div><div style="left:1206px;top:922.95px;width:611px;height:30.9px;background:#818181"></div><div style="left:1206px;top:922.95px;width:20px;height:30.9px;background:linear-gradient(90deg,#232323,#2e2e2e)"></div><div style="left:200px;top:978px;width:1720px;height:62px;background:linear-gradient(#474747,#2b2b2b)"></div><div style="left:198px;top:978px;width:3px;height:62px;background:#333"></div><div style="left:201px;top:978px;width:45px;height:61px;background:linear-gradient(#949494,#707070 55%,#5c5c5c);border-radius:4px;border:1px solid #888"></div><div style="left:216.7px;top:980px;width:14px;height:14px;border-radius:50%;background:linear-gradient(#6a6a6a,#8a8a8a)"></div><svg style="left:216.7px;top:980px" width="14" height="14"><path d="M3.4 9h7.2l-3.6-4.6z" fill="#222"/></svg><div style="left:206px;top:1004px;width:35.5px;height:30px;background:#ffff00;border-radius:3px;border:1px solid #a0a000"></div><div style="left:252px;top:978px;width:150px;height:61px;background:linear-gradient(#949494,#707070 55%,#5c5c5c);border-radius:4px;border:1px solid #8a8a8a;border-bottom-color:#555"></div><div style="left:257.6px;top:983.5px;width:139.4px;height:35.3px;background:#c2c2a6;border-radius:3px;box-shadow:inset 0 0 0 1px rgba(90,90,60,.35)"></div><div style="left:404.1px;top:978px;width:150px;height:61px;background:linear-gradient(#949494,#707070 55%,#5c5c5c);border-radius:4px;border:1px solid #8a8a8a;border-bottom-color:#555"></div><div style="left:409.7px;top:983.5px;width:139.4px;height:35.3px;background:#c2c089;border-radius:3px;box-shadow:inset 0 0 0 1px rgba(90,90,60,.35)"></div><div style="left:556.2px;top:978px;width:150px;height:61px;background:linear-gradient(#949494,#707070 55%,#5c5c5c);border-radius:4px;border:1px solid #8a8a8a;border-bottom-color:#555"></div><div style="left:561.8px;top:983.5px;width:139.4px;height:35.3px;background:#c2c06b;border-radius:3px;box-shadow:inset 0 0 0 1px rgba(90,90,60,.35)"></div><div style="left:708.3px;top:978px;width:150px;height:61px;background:linear-gradient(#949494,#707070 55%,#5c5c5c);border-radius:4px;border:1px solid #8a8a8a;border-bottom-color:#555"></div><div style="left:713.9px;top:983.5px;width:139.4px;height:35.3px;background:#c4c04b;border-radius:3px;box-shadow:inset 0 0 0 1px rgba(90,90,60,.35)"></div><div style="left:860.4px;top:978px;width:150px;height:61px;background:#151515;border-radius:4px;"></div><div style="left:866px;top:983.5px;width:139.4px;height:35.3px;background:#c8c405;border-radius:3px;box-shadow:inset 0 0 0 1px rgba(90,90,60,.35)"></div><div style="left:1597px;top:978px;width:48px;height:61px;background:linear-gradient(#949494,#707070 55%,#5c5c5c);border-radius:5px;border:1px solid #8a8a8a"></div><div style="left:1597px;top:996px;width:48px;height:1.5px;background:#5a5a5a"></div><div style="left:1613.5px;top:980px;width:16px;height:14px;border-radius:50%;background:linear-gradient(#6a6a6a,#8a8a8a)"></div><svg style="left:1613.5px;top:980px" width="16" height="14"><path d="M4 9.5h8l-4-5z" fill="#222"/></svg><div style="left:1605px;top:1002.4px;width:31.7px;height:31px;border:2.5px solid #2a2a2a;border-radius:5px;background:linear-gradient(#c4c4c4 0,#b0b0b0 49%,#8c8c8c 50%,#8a8a8a)"></div><div style="left:1613.6px;top:1011px;width:14.6px;height:14px;background:#000"></div><div style="left:1646px;top:978px;width:273px;height:30.5px;background:linear-gradient(#aaa,#8a8a8a 50%,#6c6c6c);border-radius:5px 5px 0 0;border:1px solid #999;border-bottom:1px solid #555"></div><div style="left:1827.2px;top:979px;width:45.3px;height:29px;background:linear-gradient(#3a3a3a,#2a2a2a)"></div><div style="left:1691.6px;top:979px;width:1.4px;height:29px;background:#666"></div><div style="left:1736.5px;top:979px;width:1.4px;height:29px;background:#666"></div><div style="left:1781.5px;top:979px;width:1.4px;height:29px;background:#666"></div><div style="left:1826.5px;top:979px;width:1.4px;height:29px;background:#666"></div><div style="left:1871.8px;top:979px;width:1.4px;height:29px;background:#666"></div><div style="left:1658.9px;top:983px;width:20px;height:20px;border-radius:50%;background:linear-gradient(#6e6e6e,#999)"></div><div style="left:1704.9px;top:983px;width:20px;height:20px;border-radius:50%;background:linear-gradient(#6e6e6e,#999)"></div><div style="left:1749.7px;top:983px;width:20px;height:20px;border-radius:50%;background:linear-gradient(#6e6e6e,#999)"></div><div style="left:1794.9px;top:983px;width:20px;height:20px;border-radius:50%;background:linear-gradient(#6e6e6e,#999)"></div><div style="left:1840px;top:983px;width:20px;height:20px;border-radius:50%;background:linear-gradient(#2a2a2a,#383838)"></div><div style="left:1885.7px;top:983px;width:20px;height:20px;border-radius:50%;background:linear-gradient(#6e6e6e,#999)"></div><svg style="left:1646px;top:978px" width="274" height="31" viewBox="1646 978 274 31"><rect x="1664.6" y="988.7" width="8.6" height="8.6" fill="#222"/><path d="M1711.5 987.5v11l9-5.5z" fill="#222"/><path d="M1756.5 988.5h-2.5v9h2.5M1763 988.5h2.500v9h-2.500" fill="none" stroke="#222" stroke-width="1.6"/><path d="M1757.300 993h1.300M1761 993h1.300" stroke="#222" stroke-width="1.4"/><path d="M1804.9 993c-1.500-2.400-3-3-4.200-3a3 3 0 0 0 0 6c1.200 0 2.700-.6 4.200-3c1.500 2.400 3 3 4.200 3a3 3 0 0 0 0-6c-1.200 0-2.700.6-4.200 3z" fill="none" stroke="#222" stroke-width="1.500"/><path d="M1845.300 991.500a5 5 0 0 1 9-1.200M1854.700 994.500a5 5 0 0 1-9 1.200" fill="none" stroke="#111" stroke-width="2"/><path d="M1855.500 987v4.200h-4.200zM1844.500 999v-4.200h4.200z" fill="#111"/></svg><div style="left:1646px;top:1009.3px;width:136.5px;height:29.5px;background:linear-gradient(#aaa,#8a8a8a 50%,#6c6c6c);border-radius:0 0 0 5px;border:1px solid #999;border-top-color:#bbb"></div><div style="left:1782.5px;top:1009.3px;width:136.5px;height:29.5px;background:linear-gradient(#aaa,#8a8a8a 50%,#6c6c6c);border-radius:0 0 5px 0;border:1px solid #999;border-top-color:#bbb"></div><div style="left:1666.9px;top:1014px;width:20px;height:20px;border-radius:50%;background:linear-gradient(#707070,#a0a0a0)"></div><div style="left:1879.9px;top:1014px;width:20px;height:20px;border-radius:50%;background:linear-gradient(#707070,#a0a0a0)"></div><div style="left:0px;top:1040px;width:1920px;height:40px;background:#03050b"></div><div style="left:0px;top:1040px;width:48px;height:40px;background:#010104"></div><div style="left:48px;top:1040px;width:344px;height:40px;background:#353535"></div><svg style="left:16px;top:1051px" width="17" height="18" viewBox="0 0 17 18"><path d="M0 2.600l6.500-.9v6.800h-6.500zM7.400 1.600l8.600-1.200v8.100h-8.600zM0 9.400h6.500v6.800l-6.500-.9zM7.400 9.400h8.600v8.100l-8.600-1.200z" fill="#fff"/></svg><div style="left:589.2px;top:1040px;width:44.3px;height:40px;background:#2d3138"></div><div style="left:634.2px;top:1040px;width:2.6px;height:40px;background:#262a30"></div><div style="left:495px;top:1078px;width:40px;height:2px;background:#76b9ed"></div><div style="left:589.2px;top:1078px;width:44.2px;height:2px;background:#76b9ed"></div><div style="left:634.2px;top:1078px;width:2.6px;height:2px;background:#76b9ed"></div><div style="left:642px;top:1078px;width:39.7px;height:2px;background:#76b9ed"></div><svg style="left:400px;top:1040px" width="300" height="40" viewBox="400 1040 300 40"><g fill="none" stroke="#fff" stroke-width="1.3"><rect x="410.200" y="1053.600" width="11.600" height="12.600"/><path d="M408.300 1055.200h-2v9.600h2M423.700 1055.200h2v9.600h-2"/></g><path d="M456.200 1059.200c.6-5.800 4.600-9.400 10-9.400 6.200 0 9.800 4.200 9.800 10.200v1.800h-13.400c.4 3 2.800 4.600 6 4.600 2.400 0 4.600-.6 6.600-1.800v4.200c-2 1-4.400 1.600-7.400 1.600-6 0-10.200-3.600-10.600-9.200.6-3.800 3.400-6.600 7.800-7.600-1.600.8-2.600 2.200-2.800 4.200h8c0-2.800-1.600-4.600-4.600-4.600-3.800 0-7.400 2.200-9.400 6z" fill="#0078d7"/><path d="M504.200 1052h7l1.600 1.600h12.600v14.600h-21.200z" fill="#f6c84c"/><path d="M504.200 1055.200h21.200v13h-21.200z" fill="#ffe28a"/><path d="M507.600 1068.200v-6.400h14v6.400h-3.400v-3.600h-7.200v3.600z" fill="#2ca0e8"/><path d="M553.200 1055.200l21-1.600v17.800l-21-1.800z" fill="#fff"/><path d="M558.600 1054.600c0-3.400 1.800-5.600 4.600-5.600s4.600 2.200 4.600 5" fill="none" stroke="#fff" stroke-width="1.300"/><path d="M557.200 1058.600l12.400-.6v10.600l-12.400-.8zM563 1058.200v10.200M557.200 1063.300h12.400" fill="none" stroke="#03050b" stroke-width="1"/><path d="M603.400 1048.400l20 11.200-17.600 10.800z" fill="#0f6a12"/><path d="M605.600 1052l13.800 7.600-12.400 7.400z" fill="#0a3a0c"/><text x="611.600" y="1064" font-size="11" font-weight="bold" fill="#3dff3d" text-anchor="middle" font-family="Liberation Sans, sans-serif">5</text><path d="M650.400 1063c0-6 5.400-10.600 11.800-10.600 5 0 8.600 2.800 8.600 6.600 0 5.600-5.800 10-12.400 10-1.800 0-2.600-1.200-1.800-2.600.8-1.400-.2-2.600-2-2.600-2.600 0-4.200.6-4.200-.8z" fill="#b9d6ee"/><circle cx="655.400" cy="1060.200" r="1.700" fill="#d33"/><circle cx="659.600" cy="1056.400" r="1.700" fill="#4a4"/><circle cx="664.800" cy="1055.600" r="1.700" fill="#e92"/><circle cx="661" cy="1064.800" r="1.500" fill="#345"/><path d="M672.600 1049.400l1.800 1.200-8.400 16.400-1.800 1.600.4-2.600z" fill="#e8923a"/><path d="M672 1049l2.600-1.600.4 3.200-1 1z" fill="#c9a27a"/></svg><svg style="left:1720px;top:1040px" width="200" height="40" viewBox="1720 1040 200 40"><g fill="none" stroke="#fff" stroke-width="1.300"><path d="M1726 1062.800l6-6 6 6"/><rect x="1754" y="1056.500" width="9.300" height="7.600"/><path d="M1764 1058.800v3"/><path d="M1749.400 1053.800v3M1751.800 1053.800v3" stroke-width="1"/><path d="M1748.400 1056.800h4.400v2a2.200 2.200 0 0 1-4.400 0zM1750.600 1061v3h3.400" stroke-width="1"/><path d="M1775.200 1066.800a11.600 11.600 0 0 1 11.600-11.600M1778.600 1066.800a8.200 8.200 0 0 1 8.200-8.200M1782 1066.800a4.800 4.800 0 0 1 4.800-4.800"/><path d="M1796.200 1057.400h2.600l3.400-3.400v11.600l-3.400-3.400h-2.600z"/><path d="M1804.600 1057.200a3.400 3.400 0 0 1 0 5.200" stroke-width="1.100"/><path d="M1806.800 1055a6.400 6.400 0 0 1 0 9.600" stroke-width="1" opacity=".7"/><path d="M1809 1053a9.400 9.400 0 0 1 0 13.600" stroke-width="1" opacity=".4"/><path d="M1820.600 1052.800h15v11.600h-5.500l-2 2.600-2-2.600h-5.500z"/><path d="M1823.400 1056h9.400M1823.400 1058.700h9.400M1823.400 1061.400h6"/></g><rect x="1784.200" y="1064" width="3" height="3" fill="#fff"/><rect x="1755.500" y="1058" width="6" height="4.600" fill="#fff"/><path d="M1916 1040v40" stroke="#777" stroke-width="1"/></svg><svg style="left:0;top:0" width="1920" height="1080" viewBox="0 0 1920 1080"><text x="23.7" y="16" font-size="11.6" fill="#000" textLength="324" lengthAdjust="spacingAndGlyphs">CalMAN 5 CalMAN Ultimate for Business 231 Days Remaining</text><text x="9.5" y="100.6" font-size="12.3" fill="#fff" textLength="140.5" lengthAdjust="spacingAndGlyphs">Quick Analysis NBC sRGB</text><text x="29" y="123.8" font-size="10.8" fill="#fff" textLength="71.7" lengthAdjust="spacingAndGlyphs" font-weight="bold">Quick Analysis</text><text x="42.2" y="139.6" font-size="10.8" fill="#fff" textLength="60.3" lengthAdjust="spacingAndGlyphs">Introduction</text><text x="42.2" y="153.9" font-size="10.8" fill="#fff" textLength="45.8" lengthAdjust="spacingAndGlyphs">Grayscale</text><text x="42.2" y="168.5" font-size="10.8" fill="#fff" textLength="77" lengthAdjust="spacingAndGlyphs">CMS Calibration</text><text x="42.2" y="182.8" font-size="10.8" fill="#1a1a1a" textLength="89.2" lengthAdjust="spacingAndGlyphs">Saturation Sweeps</text><text x="42.2" y="197.7" font-size="10.8" fill="#fff" textLength="91.9" lengthAdjust="spacingAndGlyphs">Luminance Sweeps</text><text x="42.2" y="212.5" font-size="10.8" fill="#fff" textLength="64.4" lengthAdjust="spacingAndGlyphs">ColorChecker</text><text x="42.2" y="226.8" font-size="10.8" fill="#fff" textLength="87.6" lengthAdjust="spacingAndGlyphs">Screen Uniformity</text><text x="42.2" y="241.5" font-size="10.8" fill="#fff" textLength="96.8" lengthAdjust="spacingAndGlyphs">Spectral Power Dist.</text><text x="206.6" y="78" font-size="12.2" fill="#eee" textLength="46.2" lengthAdjust="spacingAndGlyphs">History 1</text><text x="1517.6" y="76.1" font-size="8.6" fill="#fff" text-anchor="middle" textLength="13.8" lengthAdjust="spacingAndGlyphs" font-weight="bold">232</text><text x="1387.2" y="70" font-size="11.2" fill="#fff" textLength="65.9" lengthAdjust="spacingAndGlyphs">X-Rite i1Pro 2</text><text x="1387.2" y="83.8" font-size="11.2" fill="#fff" textLength="76.8" lengthAdjust="spacingAndGlyphs">LCD Direct View</text><text x="1547.6" y="70" font-size="11.2" fill="#fff" textLength="33" lengthAdjust="spacingAndGlyphs">Source</text><text x="1683.8" y="70" font-size="11.2" fill="#fff" textLength="105.2" lengthAdjust="spacingAndGlyphs">Direct Display Control</text><text x="226" y="151.8" font-size="43.4" fill="#efefef" textLength="333.7" lengthAdjust="spacingAndGlyphs">Saturation Sweeps</text><text x="366" y="222" font-size="16" fill="#ddd" text-anchor="middle" textLength="85" lengthAdjust="spacingAndGlyphs">RGB Balance</text><text x="234.6" y="718.3" font-size="16" fill="#ddd" text-anchor="end" textLength="13.008" lengthAdjust="spacingAndGlyphs">-4</text><text x="234.6" y="659.2" font-size="16" fill="#ddd" text-anchor="end" textLength="13.008" lengthAdjust="spacingAndGlyphs">-3</text><text x="234.6" y="598.5" font-size="16" fill="#ddd" text-anchor="end" textLength="13.008" lengthAdjust="spacingAndGlyphs">-2</text><text x="234.6" y="537.8" font-size="16" fill="#ddd" text-anchor="end" textLength="13.008" lengthAdjust="spacingAndGlyphs">-1</text><text x="234.6" y="477.1" font-size="16" fill="#ddd" text-anchor="end" textLength="8.112" lengthAdjust="spacingAndGlyphs">0</text><text x="234.6" y="416.4" font-size="16" fill="#ddd" text-anchor="end" textLength="8.112" lengthAdjust="spacingAndGlyphs">1</text><text x="234.6" y="355.7" font-size="16" fill="#ddd" text-anchor="end" textLength="8.112" lengthAdjust="spacingAndGlyphs">2</text><text x="234.6" y="295" font-size="16" fill="#ddd" text-anchor="end" textLength="8.112" lengthAdjust="spacingAndGlyphs">3</text><text x="234.6" y="234.3" font-size="16" fill="#ddd" text-anchor="end" textLength="8.112" lengthAdjust="spacingAndGlyphs">4</text><text x="375.5" y="729.7" font-size="16" fill="#ddd" text-anchor="middle" textLength="37.1" lengthAdjust="spacingAndGlyphs">100%</text><text x="671.2" y="132.7" font-size="16" fill="#ddd" text-anchor="middle" textLength="43.3" lengthAdjust="spacingAndGlyphs">DeltaL</text><text x="607.4" y="145.15" font-size="16" fill="#ddd" text-anchor="end" textLength="16.224" lengthAdjust="spacingAndGlyphs">15</text><text x="607.4" y="194.3" font-size="16" fill="#ddd" text-anchor="end" textLength="16.224" lengthAdjust="spacingAndGlyphs">10</text><text x="607.4" y="243.45" font-size="16" fill="#ddd" text-anchor="end" textLength="8.112" lengthAdjust="spacingAndGlyphs">5</text><text x="607.4" y="292.6" font-size="16" fill="#ddd" text-anchor="end" textLength="8.112" lengthAdjust="spacingAndGlyphs">0</text><text x="607.4" y="341.75" font-size="16" fill="#ddd" text-anchor="end" textLength="13.008" lengthAdjust="spacingAndGlyphs">-5</text><text x="607.4" y="390.9" font-size="16" fill="#ddd" text-anchor="end" textLength="21.12" lengthAdjust="spacingAndGlyphs">-10</text><text x="607.4" y="438.1" font-size="16" fill="#ddd" text-anchor="end" textLength="21.12" lengthAdjust="spacingAndGlyphs">-15</text><text x="685" y="449" font-size="16" fill="#ddd" text-anchor="middle" textLength="36.7" lengthAdjust="spacingAndGlyphs">100%</text><text x="867.8" y="132.7" font-size="16" fill="#ddd" text-anchor="middle" textLength="45" lengthAdjust="spacingAndGlyphs">DeltaC</text><text x="804" y="145.15" font-size="16" fill="#ddd" text-anchor="end" textLength="16.224" lengthAdjust="spacingAndGlyphs">15</text><text x="804" y="194.3" font-size="16" fill="#ddd" text-anchor="end" textLength="16.224" lengthAdjust="spacingAndGlyphs">10</text><text x="804" y="243.45" font-size="16" fill="#ddd" text-anchor="end" textLength="8.112" lengthAdjust="spacingAndGlyphs">5</text><text x="804" y="292.6" font-size="16" fill="#ddd" text-anchor="end" textLength="8.112" lengthAdjust="spacingAndGlyphs">0</text><text x="804" y="341.75" font-size="16" fill="#ddd" text-anchor="end" textLength="13.008" lengthAdjust="spacingAndGlyphs">-5</text><text x="804" y="390.9" font-size="16" fill="#ddd" text-anchor="end" textLength="21.12" lengthAdjust="spacingAndGlyphs">-10</text><text x="804" y="438.1" font-size="16" fill="#ddd" text-anchor="end" textLength="21.12" lengthAdjust="spacingAndGlyphs">-15</text><text x="881.6" y="449" font-size="16" fill="#ddd" text-anchor="middle" textLength="36.7" lengthAdjust="spacingAndGlyphs">100%</text><text x="1064.5" y="132.7" font-size="16" fill="#ddd" text-anchor="middle" textLength="46" lengthAdjust="spacingAndGlyphs">DeltaH</text><text x="1000.7" y="145.15" font-size="16" fill="#ddd" text-anchor="end" textLength="16.224" lengthAdjust="spacingAndGlyphs">15</text><text x="1000.7" y="194.3" font-size="16" fill="#ddd" text-anchor="end" textLength="16.224" lengthAdjust="spacingAndGlyphs">10</text><text x="1000.7" y="243.45" font-size="16" fill="#ddd" text-anchor="end" textLength="8.112" lengthAdjust="spacingAndGlyphs">5</text><text x="1000.7" y="292.6" font-size="16" fill="#ddd" text-anchor="end" textLength="8.112" lengthAdjust="spacingAndGlyphs">0</text><text x="1000.7" y="341.75" font-size="16" fill="#ddd" text-anchor="end" textLength="13.008" lengthAdjust="spacingAndGlyphs">-5</text><text x="1000.7" y="390.9" font-size="16" fill="#ddd" text-anchor="end" textLength="21.12" lengthAdjust="spacingAndGlyphs">-10</text><text x="1000.7" y="438.1" font-size="16" fill="#ddd" text-anchor="end" textLength="21.12" lengthAdjust="spacingAndGlyphs">-15</text><text x="1078.3" y="449" font-size="16" fill="#ddd" text-anchor="middle" textLength="36.7" lengthAdjust="spacingAndGlyphs">100%</text><text x="620" y="634.6" font-size="12" fill="#fff" text-anchor="middle" font-weight="bold">20%</text><text x="745" y="634.6" font-size="12" fill="#fff" text-anchor="middle" font-weight="bold">40%</text><text x="870" y="634.6" font-size="12" fill="#fff" text-anchor="middle" font-weight="bold">60%</text><text x="995" y="634.6" font-size="12" fill="#fff" text-anchor="middle" font-weight="bold">80%</text><text x="1120" y="634.6" font-size="12" fill="#fff" text-anchor="middle" font-weight="bold">100%</text><text transform="translate(558,506.4) rotate(-90)" font-size="12.2" font-weight="bold" fill="#fff" text-anchor="middle" textLength="37" lengthAdjust="spacingAndGlyphs">Actual</text><text transform="translate(558,587.3) rotate(-90)" font-size="12.2" font-weight="bold" fill="#fff" text-anchor="middle" textLength="37.5" lengthAdjust="spacingAndGlyphs">Target</text><text x="860.4" y="672.7" font-size="16" fill="#ddd" text-anchor="middle" textLength="81.3" lengthAdjust="spacingAndGlyphs">DeltaE 2000</text><text x="553.4" y="687.1" font-size="16" fill="#ddd" text-anchor="end" textLength="16.224" lengthAdjust="spacingAndGlyphs">15</text><text x="553.4" y="776.6" font-size="16" fill="#ddd" text-anchor="end" textLength="16.224" lengthAdjust="spacingAndGlyphs">10</text><text x="553.4" y="866.1" font-size="16" fill="#ddd" text-anchor="end" textLength="8.112" lengthAdjust="spacingAndGlyphs">5</text><text x="553.4" y="955.6" font-size="16" fill="#ddd" text-anchor="end" textLength="8.112" lengthAdjust="spacingAndGlyphs">0</text><text x="611.2" y="966.8" font-size="16" fill="#ddd" text-anchor="middle" textLength="24.336" lengthAdjust="spacingAndGlyphs">100</text><text x="715.2" y="966.8" font-size="16" fill="#ddd" text-anchor="middle" textLength="27.664" lengthAdjust="spacingAndGlyphs">20%</text><text x="819.2" y="966.8" font-size="16" fill="#ddd" text-anchor="middle" textLength="27.664" lengthAdjust="spacingAndGlyphs">40%</text><text x="923.2" y="966.8" font-size="16" fill="#ddd" text-anchor="middle" textLength="27.664" lengthAdjust="spacingAndGlyphs">60%</text><text x="1027.2" y="966.8" font-size="16" fill="#ddd" text-anchor="middle" textLength="27.664" lengthAdjust="spacingAndGlyphs">80%</text><text x="1131.2" y="966.8" font-size="16" fill="#ddd" text-anchor="middle" textLength="35.776" lengthAdjust="spacingAndGlyphs">100%</text><text x="215.6" y="775.6" font-size="32" fill="#f2f2f2" textLength="225" lengthAdjust="spacingAndGlyphs">Current Reading</text><text x="215.6" y="822.2" font-size="26.4" fill="#f2f2f2" textLength="105.4" lengthAdjust="spacingAndGlyphs">x: 0,4124</text><text x="215.6" y="866.2" font-size="26.4" fill="#f2f2f2" textLength="106.2" lengthAdjust="spacingAndGlyphs">y: 0,5289</text><text x="215.6" y="910.7" font-size="26.4" fill="#f2f2f2" textLength="113.7" lengthAdjust="spacingAndGlyphs">fL: 34,728</text><text x="215.6" y="954.4" font-size="26.4" fill="#f2f2f2" textLength="177.7" lengthAdjust="spacingAndGlyphs">cd/m²: 118,987</text><text x="1561.7" y="131.4" font-size="16" fill="#ddd" text-anchor="middle" textLength="78.8" lengthAdjust="spacingAndGlyphs">CIE 1931 xy</text><text x="1233.8" y="694.3" font-size="16" fill="#ddd" text-anchor="end" textLength="8.112" lengthAdjust="spacingAndGlyphs">0</text><text x="1241.2" y="710.8" font-size="16" fill="#ddd" text-anchor="middle" textLength="8.112" lengthAdjust="spacingAndGlyphs">0</text><text x="1233.8" y="628.7" font-size="16" fill="#ddd" text-anchor="end" textLength="20.224" lengthAdjust="spacingAndGlyphs">0,1</text><text x="1320.62" y="710.8" font-size="16" fill="#ddd" text-anchor="middle" textLength="20.224" lengthAdjust="spacingAndGlyphs">0,1</text><text x="1233.8" y="563.1" font-size="16" fill="#ddd" text-anchor="end" textLength="20.224" lengthAdjust="spacingAndGlyphs">0,2</text><text x="1400.04" y="710.8" font-size="16" fill="#ddd" text-anchor="middle" textLength="20.224" lengthAdjust="spacingAndGlyphs">0,2</text><text x="1233.8" y="497.5" font-size="16" fill="#ddd" text-anchor="end" textLength="20.224" lengthAdjust="spacingAndGlyphs">0,3</text><text x="1479.46" y="710.8" font-size="16" fill="#ddd" text-anchor="middle" textLength="20.224" lengthAdjust="spacingAndGlyphs">0,3</text><text x="1233.8" y="431.9" font-size="16" fill="#ddd" text-anchor="end" textLength="20.224" lengthAdjust="spacingAndGlyphs">0,4</text><text x="1558.88" y="710.8" font-size="16" fill="#ddd" text-anchor="middle" textLength="20.224" lengthAdjust="spacingAndGlyphs">0,4</text><text x="1233.8" y="366.3" font-size="16" fill="#ddd" text-anchor="end" textLength="20.224" lengthAdjust="spacingAndGlyphs">0,5</text><text x="1638.3" y="710.8" font-size="16" fill="#ddd" text-anchor="middle" textLength="20.224" lengthAdjust="spacingAndGlyphs">0,5</text><text x="1233.8" y="300.7" font-size="16" fill="#ddd" text-anchor="end" textLength="20.224" lengthAdjust="spacingAndGlyphs">0,6</text><text x="1717.72" y="710.8" font-size="16" fill="#ddd" text-anchor="middle" textLength="20.224" lengthAdjust="spacingAndGlyphs">0,6</text><text x="1233.8" y="235.1" font-size="16" fill="#ddd" text-anchor="end" textLength="20.224" lengthAdjust="spacingAndGlyphs">0,7</text><text x="1797.14" y="710.8" font-size="16" fill="#ddd" text-anchor="middle" textLength="20.224" lengthAdjust="spacingAndGlyphs">0,7</text><text x="1233.8" y="169.5" font-size="16" fill="#ddd" text-anchor="end" textLength="20.224" lengthAdjust="spacingAndGlyphs">0,8</text><text x="1876.56" y="710.8" font-size="16" fill="#ddd" text-anchor="middle" textLength="20.224" lengthAdjust="spacingAndGlyphs">0,8</text><text x="1397.5" y="758" font-size="18.4" fill="#fff" textLength="41.5" lengthAdjust="spacingAndGlyphs" style="font-family:DejaVu Sans, Liberation Sans, sans-serif">20%</text><text x="1482.7" y="758" font-size="18.4" fill="#fff" textLength="41.5" lengthAdjust="spacingAndGlyphs" style="font-family:DejaVu Sans, Liberation Sans, sans-serif">40%</text><text x="1567.9" y="758" font-size="18.4" fill="#fff" textLength="41.5" lengthAdjust="spacingAndGlyphs" style="font-family:DejaVu Sans, Liberation Sans, sans-serif">60%</text><text x="1653.1" y="758" font-size="18.4" fill="#fff" textLength="41.5" lengthAdjust="spacingAndGlyphs" style="font-family:DejaVu Sans, Liberation Sans, sans-serif">80%</text><text x="1738.3" y="758" font-size="18.4" fill="#fff" textLength="53" lengthAdjust="spacingAndGlyphs" style="font-family:DejaVu Sans, Liberation Sans, sans-serif">100%</text><text x="1232" y="791.8" font-size="19" fill="#f0f0f0" textLength="81.6" lengthAdjust="spacingAndGlyphs" style="font-family:DejaVu Sans, Liberation Sans, sans-serif">x: CIE31</text><text x="1397" y="791.8" font-size="19" fill="#f0f0f0" textLength="43.2" lengthAdjust="spacingAndGlyphs" style="font-family:DejaVu Sans, Liberation Sans, sans-serif">0,33</text><text x="1482.2" y="791.8" font-size="19" fill="#f0f0f0" textLength="43.2" lengthAdjust="spacingAndGlyphs" style="font-family:DejaVu Sans, Liberation Sans, sans-serif">0,35</text><text x="1567.4" y="791.8" font-size="19" fill="#f0f0f0" textLength="43.2" lengthAdjust="spacingAndGlyphs" style="font-family:DejaVu Sans, Liberation Sans, sans-serif">0,37</text><text x="1652.6" y="791.8" font-size="19" fill="#f0f0f0" textLength="43.2" lengthAdjust="spacingAndGlyphs" style="font-family:DejaVu Sans, Liberation Sans, sans-serif">0,39</text><text x="1737.8" y="791.8" font-size="19" fill="#f0f0f0" textLength="43.2" lengthAdjust="spacingAndGlyphs" style="font-family:DejaVu Sans, Liberation Sans, sans-serif">0,41</text><text x="1232" y="822.55" font-size="19" fill="#f0f0f0" textLength="82" lengthAdjust="spacingAndGlyphs" style="font-family:DejaVu Sans, Liberation Sans, sans-serif">y: CIE31</text><text x="1397" y="822.55" font-size="19" fill="#f0f0f0" textLength="43.2" lengthAdjust="spacingAndGlyphs" style="font-family:DejaVu Sans, Liberation Sans, sans-serif">0,38</text><text x="1482.2" y="822.55" font-size="19" fill="#f0f0f0" textLength="43.2" lengthAdjust="spacingAndGlyphs" style="font-family:DejaVu Sans, Liberation Sans, sans-serif">0,41</text><text x="1567.4" y="822.55" font-size="19" fill="#f0f0f0" textLength="43.2" lengthAdjust="spacingAndGlyphs" style="font-family:DejaVu Sans, Liberation Sans, sans-serif">0,45</text><text x="1652.6" y="822.55" font-size="19" fill="#f0f0f0" textLength="43.2" lengthAdjust="spacingAndGlyphs" style="font-family:DejaVu Sans, Liberation Sans, sans-serif">0,49</text><text x="1737.8" y="822.55" font-size="19" fill="#f0f0f0" textLength="43.2" lengthAdjust="spacingAndGlyphs" style="font-family:DejaVu Sans, Liberation Sans, sans-serif">0,53</text><text x="1232" y="853.3" font-size="19" fill="#f0f0f0" textLength="13.5" lengthAdjust="spacingAndGlyphs" style="font-family:DejaVu Sans, Liberation Sans, sans-serif">Y</text><text x="1397" y="853.3" font-size="19" fill="#f0f0f0" textLength="69.5" lengthAdjust="spacingAndGlyphs" style="font-family:DejaVu Sans, Liberation Sans, sans-serif">126,88</text><text x="1482.2" y="853.3" font-size="19" fill="#f0f0f0" textLength="69.5" lengthAdjust="spacingAndGlyphs" style="font-family:DejaVu Sans, Liberation Sans, sans-serif">124,65</text><text x="1567.4" y="853.3" font-size="19" fill="#f0f0f0" textLength="69.5" lengthAdjust="spacingAndGlyphs" style="font-family:DejaVu Sans, Liberation Sans, sans-serif">122,90</text><text x="1652.6" y="853.3" font-size="19" fill="#f0f0f0" textLength="69.5" lengthAdjust="spacingAndGlyphs" style="font-family:DejaVu Sans, Liberation Sans, sans-serif">121,49</text><text x="1737.8" y="853.3" font-size="19" fill="#f0f0f0" textLength="69.5" lengthAdjust="spacingAndGlyphs" style="font-family:DejaVu Sans, Liberation Sans, sans-serif">118,99</text><text x="1232" y="884.05" font-size="19" fill="#f0f0f0" textLength="147" lengthAdjust="spacingAndGlyphs" style="font-family:DejaVu Sans, Liberation Sans, sans-serif">Target x:CIE31</text><text x="1397" y="884.05" font-size="19" fill="#f0f0f0" textLength="43.2" lengthAdjust="spacingAndGlyphs" style="font-family:DejaVu Sans, Liberation Sans, sans-serif">0,33</text><text x="1482.2" y="884.05" font-size="19" fill="#f0f0f0" textLength="43.2" lengthAdjust="spacingAndGlyphs" style="font-family:DejaVu Sans, Liberation Sans, sans-serif">0,36</text><text x="1567.4" y="884.05" font-size="19" fill="#f0f0f0" textLength="43.2" lengthAdjust="spacingAndGlyphs" style="font-family:DejaVu Sans, Liberation Sans, sans-serif">0,38</text><text x="1652.6" y="884.05" font-size="19" fill="#f0f0f0" textLength="43.2" lengthAdjust="spacingAndGlyphs" style="font-family:DejaVu Sans, Liberation Sans, sans-serif">0,40</text><text x="1737.8" y="884.05" font-size="19" fill="#f0f0f0" textLength="43.2" lengthAdjust="spacingAndGlyphs" style="font-family:DejaVu Sans, Liberation Sans, sans-serif">0,42</text><text x="1232" y="914.8" font-size="19" fill="#f0f0f0" textLength="147.5" lengthAdjust="spacingAndGlyphs" style="font-family:DejaVu Sans, Liberation Sans, sans-serif">Target y:CIE31</text><text x="1397" y="914.8" font-size="19" fill="#f0f0f0" textLength="43.2" lengthAdjust="spacingAndGlyphs" style="font-family:DejaVu Sans, Liberation Sans, sans-serif">0,36</text><text x="1482.2" y="914.8" font-size="19" fill="#f0f0f0" textLength="43.2" lengthAdjust="spacingAndGlyphs" style="font-family:DejaVu Sans, Liberation Sans, sans-serif">0,40</text><text x="1567.4" y="914.8" font-size="19" fill="#f0f0f0" textLength="43.2" lengthAdjust="spacingAndGlyphs" style="font-family:DejaVu Sans, Liberation Sans, sans-serif">0,44</text><text x="1652.6" y="914.8" font-size="19" fill="#f0f0f0" textLength="43.2" lengthAdjust="spacingAndGlyphs" style="font-family:DejaVu Sans, Liberation Sans, sans-serif">0,47</text><text x="1737.8" y="914.8" font-size="19" fill="#f0f0f0" textLength="43.2" lengthAdjust="spacingAndGlyphs" style="font-family:DejaVu Sans, Liberation Sans, sans-serif">0,51</text><text x="1232" y="945.55" font-size="19" fill="#f0f0f0" textLength="84.5" lengthAdjust="spacingAndGlyphs" style="font-family:DejaVu Sans, Liberation Sans, sans-serif">Target Y</text><text x="1397" y="945.55" font-size="19" fill="#f0f0f0" textLength="69.5" lengthAdjust="spacingAndGlyphs" style="font-family:DejaVu Sans, Liberation Sans, sans-serif">125,65</text><text x="1482.2" y="945.55" font-size="19" fill="#f0f0f0" textLength="69.5" lengthAdjust="spacingAndGlyphs" style="font-family:DejaVu Sans, Liberation Sans, sans-serif">123,44</text><text x="1567.4" y="945.55" font-size="19" fill="#f0f0f0" textLength="69.5" lengthAdjust="spacingAndGlyphs" style="font-family:DejaVu Sans, Liberation Sans, sans-serif">121,75</text><text x="1652.6" y="945.55" font-size="19" fill="#f0f0f0" textLength="69.5" lengthAdjust="spacingAndGlyphs" style="font-family:DejaVu Sans, Liberation Sans, sans-serif">120,42</text><text x="1737.8" y="945.55" font-size="19" fill="#f0f0f0" textLength="69.5" lengthAdjust="spacingAndGlyphs" style="font-family:DejaVu Sans, Liberation Sans, sans-serif">119,13</text><text x="327.2" y="1034.2" font-size="10.8" fill="#2a2a2a" text-anchor="middle" textLength="21.5" lengthAdjust="spacingAndGlyphs" font-weight="bold">20%</text><text x="479.3" y="1034.2" font-size="10.8" fill="#2a2a2a" text-anchor="middle" textLength="21.5" lengthAdjust="spacingAndGlyphs" font-weight="bold">40%</text><text x="631.4" y="1034.2" font-size="10.8" fill="#2a2a2a" text-anchor="middle" textLength="21.5" lengthAdjust="spacingAndGlyphs" font-weight="bold">60%</text><text x="783.5" y="1034.2" font-size="10.8" fill="#2a2a2a" text-anchor="middle" textLength="21.5" lengthAdjust="spacingAndGlyphs" font-weight="bold">80%</text><text x="935.6" y="1034.2" font-size="10.8" fill="#fff" text-anchor="middle" textLength="27.5" lengthAdjust="spacingAndGlyphs" font-weight="bold">100%</text><text x="1676.9" y="1029.3" font-size="17" fill="#222" text-anchor="middle" style="font-family:DejaVu Sans, sans-serif">«</text><text x="1889.9" y="1029.3" font-size="17" fill="#222" text-anchor="middle" style="font-family:DejaVu Sans, sans-serif">»</text><text x="1704" y="1032" font-size="21.4" fill="#2a2a2a" textLength="50" lengthAdjust="spacingAndGlyphs" style="font-family:DejaVu Sans, sans-serif" stroke="#2a2a2a" stroke-width=".5">Back</text><text x="1810.2" y="1032" font-size="21.4" fill="#2a2a2a" textLength="51.4" lengthAdjust="spacingAndGlyphs" style="font-family:DejaVu Sans, sans-serif" stroke="#2a2a2a" stroke-width=".5">Next</text><text x="60" y="1065.4" font-size="14.6" fill="#a6a6a6" textLength="210" lengthAdjust="spacingAndGlyphs">Web und Windows durchsuchen</text><text x="1877.9" y="1054.7" font-size="11.6" fill="#fff" text-anchor="middle" textLength="25.8" lengthAdjust="spacingAndGlyphs">14:52</text><text x="1877.5" y="1071.4" font-size="11.6" fill="#fff" text-anchor="middle" textLength="53" lengthAdjust="spacingAndGlyphs">14.04.2016</text></svg></div></body></html>
